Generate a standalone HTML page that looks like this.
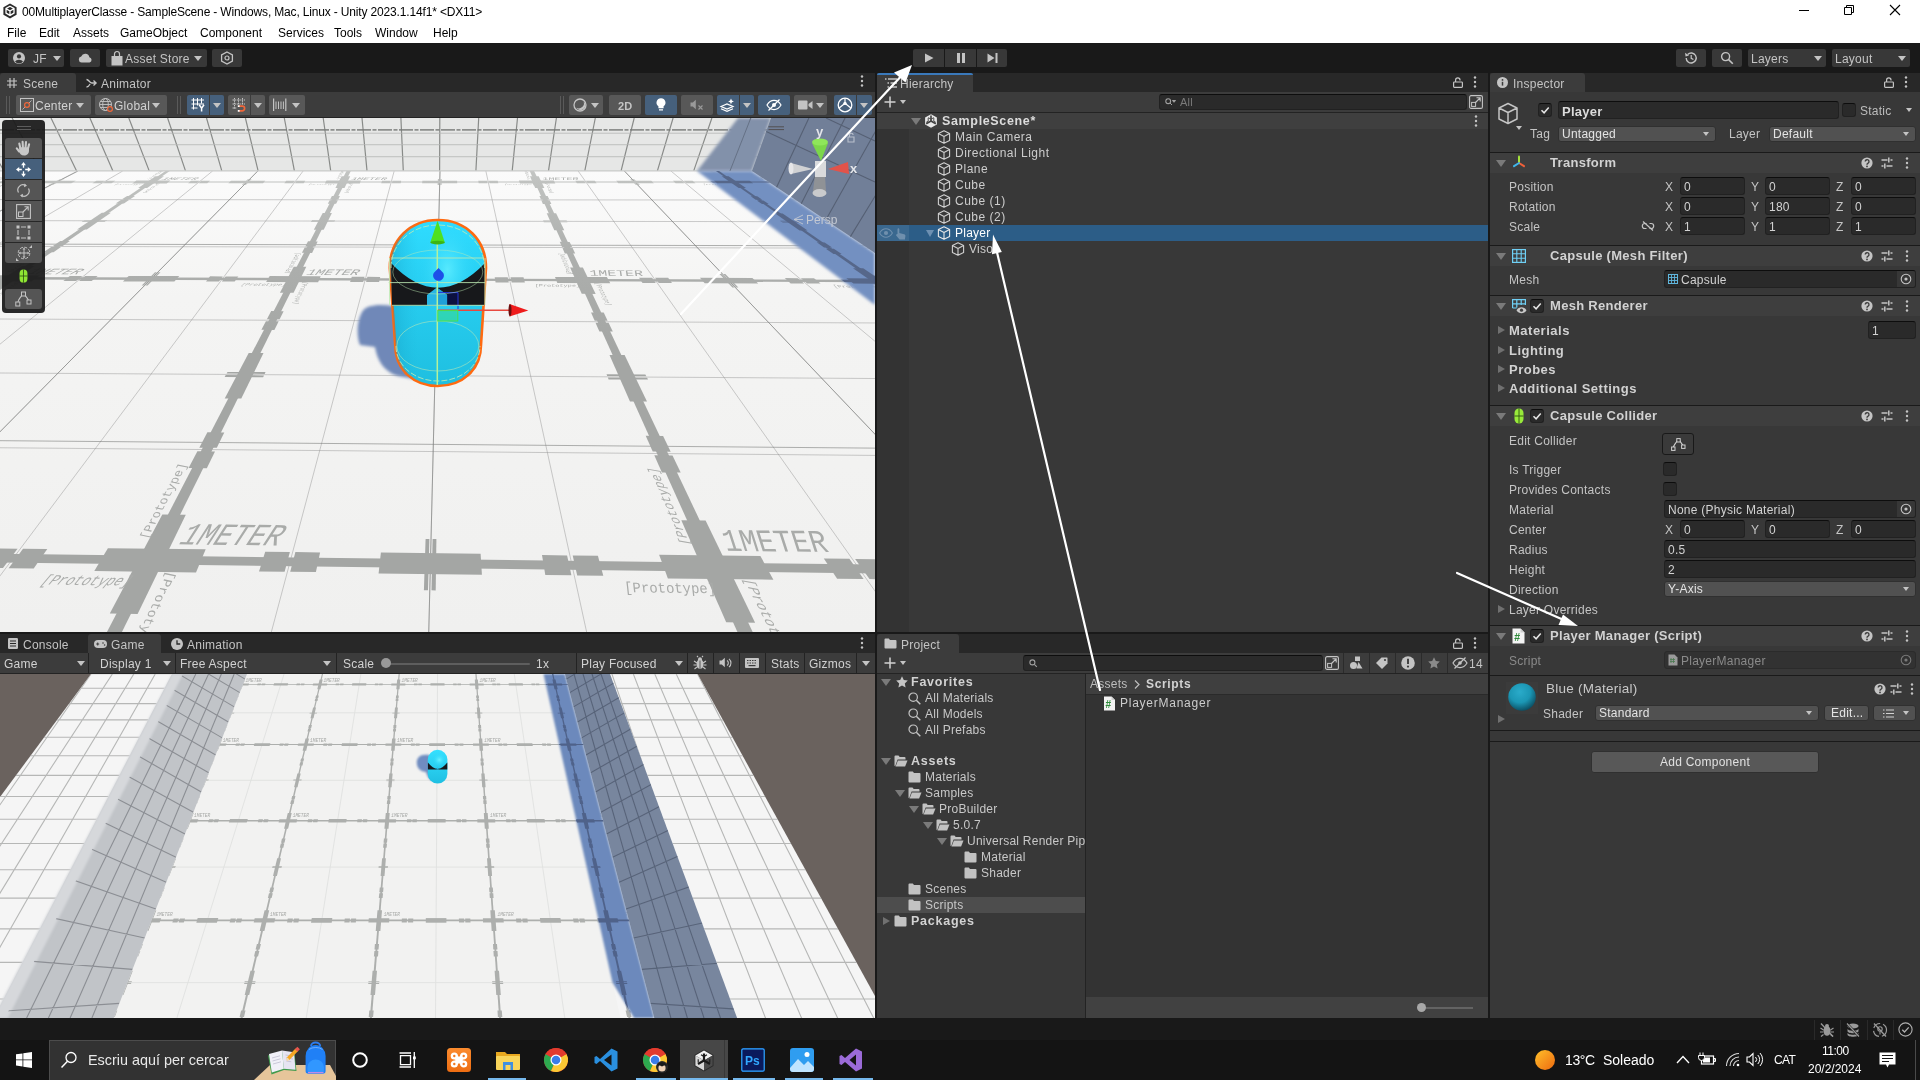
<!DOCTYPE html>
<html lang="en">
<head>
<meta charset="utf-8">
<title>00MultiplayerClasse - SampleScene - Unity</title>
<style>
*{box-sizing:border-box;margin:0;padding:0}
html,body{width:1920px;height:1080px;overflow:hidden;background:#191919}
body{position:relative;font-family:"Liberation Sans",sans-serif;font-size:12px;color:#c4c4c4;line-height:16px;letter-spacing:.25px;-webkit-font-smoothing:antialiased}
.abs{position:absolute}
svg{display:block;overflow:visible}
svg text{letter-spacing:0}
.t{position:absolute;white-space:nowrap}
body>div,body>svg{will-change:transform}
.b{font-weight:bold;color:#d2d2d2;letter-spacing:.3px}
/* title + menu */
#title{left:0;top:0;width:1920px;height:22px;background:#fff;color:#000;letter-spacing:-.16px}
#menu{left:0;top:22px;width:1920px;height:21px;background:#fff;color:#000;letter-spacing:0}
#menu .t{top:3px;font-size:12px}
/* main toolbar */
#tb{left:0;top:43px;width:1920px;height:30px;background:#191919}
.tbtn{position:absolute;top:6px;height:18px;background:#383838;border-radius:2px}
.tbtn .t{top:2px;color:#c4c4c4}
/* tabs */
.tabbar{position:absolute;height:19px;background:#282828}
.tab{position:absolute;top:0;height:19px;background:#3c3c3c;border-radius:3px 3px 0 0}
.tab .t,.tabbar>.t{top:3px;color:#c4c4c4}
.tool{position:absolute;background:#3c3c3c}
.btn{position:absolute;background:#585858;border-radius:2px}
.btn.on{background:#46607c}
.fld{position:absolute;background:#2a2a2a;border:1px solid #212121;border-top-color:#0d0d0d;border-radius:3px;height:18px}
.fld .t{left:3px;top:1px;color:#d2d2d2}
.dd{position:absolute;background:#515151;border:1px solid #303030;border-radius:3px;height:16px}
.dd .t{left:3px;top:-1px;color:#e4e4e4}
.arr{position:absolute;width:0;height:0;border-left:4px solid transparent;border-right:4px solid transparent;border-top:5px solid #c4c4c4}
.tri-d{position:absolute;width:0;height:0;border-left:5px solid transparent;border-right:5px solid transparent;border-top:7px solid #7a7a7a}
.tri-r{position:absolute;width:0;height:0;border-top:4.5px solid transparent;border-bottom:4.5px solid transparent;border-left:7.5px solid #707070}
.cb{position:absolute;width:14px;height:14px;background:#2a2a2a;border:1px solid #212121;border-top-color:#0d0d0d;border-radius:3px}
.panel{position:absolute;background:#383838}
.hdr{position:absolute;left:0;width:430px;height:21px;background:#3e3e3e;border-top:1px solid #1a1a1a}
.row{position:absolute;left:0;height:16px}
.sep{position:absolute;left:0;width:430px;height:1px;background:#1a1a1a}
</style>
</head>
<body>

<!-- ===== Title bar ===== -->
<div id="title" class="abs">
  <svg class="abs" style="left:2px;top:3px" width="16" height="16" viewBox="0 0 16 16"><polygon points="8,0.5 14.6,4.2 14.6,11.8 8,15.5 1.4,11.8 1.4,4.2" fill="#2b2b2b"/><path d="M8 3.2l4 2.3v4.6l-4 2.3-4-2.3V5.5zM8 8v4.4M8 8l4-2.4M8 8L4 5.6" stroke="#fff" stroke-width="1.3" fill="none"/></svg>
  <span class="t" style="left:22px;top:4px;font-size:12px">00MultiplayerClasse - SampleScene - Windows, Mac, Linux - Unity 2023.1.14f1* &lt;DX11&gt;</span>
  <svg class="abs" style="left:1798px;top:4px" width="12" height="12" viewBox="0 0 12 12"><path d="M1 6.5h10" stroke="#000" stroke-width="1"/></svg>
  <svg class="abs" style="left:1843px;top:4px" width="12" height="12" viewBox="0 0 12 12"><path d="M1.5 3.5h7v7h-7zM3.5 3.5v-2h7v7h-2" stroke="#000" stroke-width="1" fill="none"/></svg>
  <svg class="abs" style="left:1889px;top:4px" width="12" height="12" viewBox="0 0 12 12"><path d="M1 1l10 10M11 1L1 11" stroke="#000" stroke-width="1.1"/></svg>
</div>
<div id="menu" class="abs">
  <span class="t" style="left:7px">File</span><span class="t" style="left:39px">Edit</span><span class="t" style="left:73px">Assets</span><span class="t" style="left:120px">GameObject</span><span class="t" style="left:200px">Component</span><span class="t" style="left:278px">Services</span><span class="t" style="left:334px">Tools</span><span class="t" style="left:375px">Window</span><span class="t" style="left:433px">Help</span>
</div>
<!-- ===== Main toolbar ===== -->
<div id="tb" class="abs">
  <div class="tbtn" style="left:8px;width:56px">
    <svg class="abs" style="left:5px;top:3px" width="12" height="12" viewBox="0 0 12 12"><circle cx="6" cy="6" r="6" fill="#c4c4c4"/><circle cx="6" cy="4.4" r="2.1" fill="#383838"/><path d="M2 9.6a4.4 3.2 0 0 1 8 0a5 5 0 0 1-8 0z" fill="#383838"/></svg>
    <span class="t" style="left:25px">JF</span><div class="arr" style="left:45px;top:7px"></div>
  </div>
  <div class="tbtn" style="left:70px;width:30px"><svg class="abs" style="left:8px;top:4px" width="15" height="10" viewBox="0 0 15 10"><path d="M3.6 9.6a3.1 3.1 0 0 1-.4-6.1 4.3 4.3 0 0 1 8.2.7 2.8 2.8 0 0 1 .2 5.4z" fill="#c4c4c4"/></svg></div>
  <div class="tbtn" style="left:106px;width:101px">
    <svg class="abs" style="left:5px;top:2px" width="12" height="15" viewBox="0 0 12 15"><path d="M0.5 5h11v9.5h-11z" fill="#c4c4c4"/><path d="M3.5 5V3a2.5 2.5 0 0 1 5 0v2" stroke="#c4c4c4" stroke-width="1.2" fill="none"/></svg>
    <span class="t" style="left:19px">Asset Store</span><div class="arr" style="left:88px;top:7px"></div>
  </div>
  <div class="tbtn" style="left:212px;width:30px"><svg class="abs" style="left:8px;top:2px" width="14" height="14" viewBox="0 0 14 14"><polygon points="7,1 12.4,4 12.4,10 7,13 1.6,10 1.6,4" fill="none" stroke="#c4c4c4" stroke-width="1.3"/><circle cx="7" cy="7" r="2" fill="none" stroke="#c4c4c4" stroke-width="1.2"/></svg></div>
  <!-- play controls -->
  <div class="tbtn" style="left:913px;width:31px;border-radius:2px 0 0 2px"><svg class="abs" style="left:11px;top:4px" width="10" height="10" viewBox="0 0 10 10"><path d="M1 0.5l8.5 4.5-8.5 4.5z" fill="#c4c4c4"/></svg></div>
  <div class="tbtn" style="left:945px;width:31px;border-radius:0"><svg class="abs" style="left:11px;top:4px" width="10" height="10" viewBox="0 0 10 10"><path d="M1 0h3v10H1zM6 0h3v10H6z" fill="#c4c4c4"/></svg></div>
  <div class="tbtn" style="left:977px;width:30px;border-radius:0 2px 2px 0"><svg class="abs" style="left:10px;top:4px" width="11" height="10" viewBox="0 0 11 10"><path d="M0.5 0.5l7 4.5-7 4.5zM8.5 0h2v10h-2z" fill="#c4c4c4"/></svg></div>
  <!-- right -->
  <div class="tbtn" style="left:1676px;width:30px"><svg class="abs" style="left:8px;top:2px" width="14" height="14" viewBox="0 0 14 14"><path d="M2.2 7a5 5 0 1 0 1.5-3.6" fill="none" stroke="#c4c4c4" stroke-width="1.4"/><path d="M1 1.8l.6 3.6 3.4-.8z" fill="#c4c4c4"/><path d="M7.2 4v3.3l2.2 1.3" fill="none" stroke="#c4c4c4" stroke-width="1.2"/></svg></div>
  <div class="tbtn" style="left:1712px;width:30px"><svg class="abs" style="left:8px;top:2px" width="14" height="14" viewBox="0 0 14 14"><circle cx="5.6" cy="5.6" r="4" fill="none" stroke="#c4c4c4" stroke-width="1.4"/><path d="M8.6 8.6l4.2 4.2" stroke="#c4c4c4" stroke-width="1.6"/></svg></div>
  <div class="tbtn" style="left:1748px;width:78px"><span class="t" style="left:3px">Layers</span><div class="arr" style="left:66px;top:7px"></div></div>
  <div class="tbtn" style="left:1832px;width:78px"><span class="t" style="left:3px">Layout</span><div class="arr" style="left:66px;top:7px"></div></div>
</div>

<!-- ===== Scene panel ===== -->
<div class="tabbar" style="left:0;top:73px;width:875px">
  <div class="tab" style="left:0;width:76px">
    <svg class="abs" style="left:7px;top:5px" width="10" height="10" viewBox="0 0 10 10"><path d="M3 0v10M7 0v10M0 3h10M0 7h10" stroke="#c4c4c4" stroke-width="1.2"/></svg>
    <span class="t" style="left:23px">Scene</span>
  </div>
  <svg class="abs" style="left:86px;top:5px" width="11" height="10" viewBox="0 0 11 10"><path d="M0.5 1.5c2.5 0 3 3.5 5.5 3.5h3.5M0.5 9c2 0 2.8-1.5 3.6-3M7.5 2.6l2.6 2.4-2.6 2.4" stroke="#c4c4c4" stroke-width="1.3" fill="none"/></svg>
  <span class="t" style="left:101px">Animator</span>
  <svg class="abs" style="left:860px;top:2px" width="4" height="12" viewBox="0 0 4 12"><circle cx="2" cy="1.5" r="1.2" fill="#c4c4c4"/><circle cx="2" cy="6" r="1.2" fill="#c4c4c4"/><circle cx="2" cy="10.5" r="1.2" fill="#c4c4c4"/></svg>
</div>
<div class="tool" style="left:0;top:92px;width:875px;height:26px;border-bottom:1px solid #232323">
  <div class="abs" style="left:6px;top:4px;width:1px;height:18px;background:#5a5a5a"></div><div class="abs" style="left:9px;top:4px;width:1px;height:18px;background:#5a5a5a"></div>
  <div class="btn" style="left:16px;top:3px;width:75px;height:20px">
    <svg class="abs" style="left:4px;top:3px" width="14" height="14" viewBox="0 0 14 14"><rect x="0.5" y="0.5" width="13" height="13" fill="none" stroke="#c4c4c4"/><path d="M2.5 11.5l9-9" stroke="#c4c4c4" stroke-width="0.8"/><circle cx="7" cy="7" r="2.4" fill="#585858" stroke="#f0673a" stroke-width="1.2"/></svg>
    <span class="t" style="left:19px;top:3px;color:#d2d2d2">Center</span><div class="arr" style="left:60px;top:8px"></div>
  </div>
  <div class="btn" style="left:95px;top:3px;width:72px;height:20px">
    <svg class="abs" style="left:4px;top:3px" width="15" height="15" viewBox="0 0 15 15"><circle cx="6.5" cy="6.5" r="6" fill="none" stroke="#c4c4c4"/><ellipse cx="6.5" cy="6.5" rx="2.8" ry="6" fill="none" stroke="#c4c4c4" stroke-width="0.9"/><path d="M0.5 6.5h12M1.5 3.5h10M1.5 9.5h10" stroke="#c4c4c4" stroke-width="0.9"/><circle cx="11" cy="11" r="2.4" fill="#585858" stroke="#f0673a" stroke-width="1.2"/></svg>
    <span class="t" style="left:19px;top:3px;color:#d2d2d2">Global</span><div class="arr" style="left:57px;top:8px"></div>
  </div>
  <div class="abs" style="left:177px;top:4px;width:1px;height:18px;background:#5a5a5a"></div><div class="abs" style="left:180px;top:4px;width:1px;height:18px;background:#5a5a5a"></div>
  <div class="btn on" style="left:187px;top:3px;width:22px;height:20px;border-radius:2px 0 0 2px"><svg class="abs" style="left:4px;top:3px" width="15" height="14" viewBox="0 0 15 14"><path d="M2.500 0v11.500M6.500 0v7.500M10.500 0v5.500M0.500 2h12.500M0.500 6h12.500M0.500 10h6" stroke="#fff" stroke-width="1"/><path d="M8.200 6.800l2.400 3.300 2.400-3.300M10.600 10.100v3.400" stroke="#fff" stroke-width="1.500" fill="none"/></svg></div>
  <div class="btn on" style="left:210px;top:3px;width:14px;height:20px;border-radius:0 2px 2px 0"><div class="arr" style="left:3px;top:8px"></div></div>
  <div class="btn" style="left:228px;top:3px;width:22px;height:20px;border-radius:2px 0 0 2px"><svg class="abs" style="left:4px;top:3px" width="15" height="14" viewBox="0 0 15 14"><path d="M2.500 0v11.500M6.500 0v7M10.500 0v6M0.500 2h12.500M0.500 6h12.500M0.500 10h4.500" stroke="#c4c4c4" stroke-width="1" stroke-dasharray="1.500 0.800"/><path d="M7 8.200h3.300a2.300 2.300 0 0 1 0 4.600H7" stroke="#f0673a" stroke-width="1.700" fill="none"/><path d="M5.800 7.300h1.800v1.800H5.800zM5.800 11.900h1.800v1.800H5.800z" fill="#fff"/></svg></div>
  <div class="btn" style="left:251px;top:3px;width:14px;height:20px;border-radius:0 2px 2px 0"><div class="arr" style="left:3px;top:8px"></div></div>
  <div class="btn" style="left:269px;top:3px;width:36px;height:20px"><svg class="abs" style="left:4px;top:3px" width="14" height="14" viewBox="0 0 14 14"><path d="M0.600 0.500v12.500M12.800 0.500v12.500" stroke="#c4c4c4" stroke-width="1.200"/><path d="M3 3.500v7.500M5.500 3.500v7.500M8 3.500v7.500M10.400 3.500v7.500" stroke="#c4c4c4" stroke-width="1"/></svg><div class="arr" style="left:23px;top:8px"></div></div>
  <!-- right side -->
  <div class="abs" style="left:560px;top:4px;width:1px;height:18px;background:#5a5a5a"></div><div class="abs" style="left:563px;top:4px;width:1px;height:18px;background:#5a5a5a"></div>
  <div class="btn" style="left:569px;top:3px;width:34px;height:20px"><svg class="abs" style="left:4px;top:3px" width="14" height="14" viewBox="0 0 14 14"><circle cx="7" cy="7" r="6" fill="none" stroke="#c4c4c4" stroke-width="1.3"/><path d="M10.5 3.2a5 5 0 1 1-7.3 6.6a5.2 5.2 0 0 0 7.3-6.6z" fill="#c4c4c4"/></svg><div class="arr" style="left:22px;top:8px"></div></div>
  <div class="btn" style="left:609px;top:3px;width:32px;height:20px"><span class="t" style="left:9px;top:3px;font-size:11px;font-weight:bold;color:#c4c4c4">2D</span></div>
  <div class="btn on" style="left:645px;top:3px;width:32px;height:20px"><svg class="abs" style="left:11px;top:3px" width="10" height="14" viewBox="0 0 10 14"><path d="M5 0.3a4.4 4.4 0 0 1 2.6 8v2H2.4v-2A4.4 4.4 0 0 1 5 0.3zM3 11.2h4v1.2H3z" fill="#fff"/></svg></div>
  <div class="btn" style="left:681px;top:3px;width:32px;height:20px"><svg class="abs" style="left:9px;top:4px" width="14" height="12" viewBox="0 0 14 12"><path d="M0.5 3.5h2.3l3-2.8v9.6l-3-2.8H0.5z" fill="#9a9a9a"/><path d="M8.5 6.5l4 4M12.5 6.5l-4 4" stroke="#9a9a9a" stroke-width="1.1"/></svg></div>
  <div class="btn on" style="left:717px;top:3px;width:22px;height:20px;border-radius:2px 0 0 2px"><svg class="abs" style="left:3px;top:3px" width="16" height="14" viewBox="0 0 16 14"><path d="M1 8.5l6-2.5 6 2.5-6 2.5zM1 10.8l6 2.5 6-2.5" stroke="#fff" stroke-width="1.2" fill="none"/><path d="M11 0.5l.9 2 2 .9-2 .9-.9 2-.9-2-2-.9 2-.9z" fill="#fff"/></svg></div>
  <div class="btn on" style="left:740px;top:3px;width:14px;height:20px;border-radius:0 2px 2px 0"><div class="arr" style="left:3px;top:8px"></div></div>
  <div class="btn on" style="left:758px;top:3px;width:32px;height:20px"><svg class="abs" style="left:8px;top:4px" width="16" height="12" viewBox="0 0 16 12"><path d="M1 6c2-3.4 4.4-4.6 7-4.6S13 2.600 15 6c-2 3.400-4.400 4.600-7 4.600S3 9.400 1 6z" fill="none" stroke="#fff" stroke-width="1.2"/><circle cx="8" cy="6" r="2" fill="#fff"/><path d="M2.5 11.5l11-11" stroke="#fff" stroke-width="1.3"/></svg></div>
  <div class="btn" style="left:794px;top:3px;width:33px;height:20px"><svg class="abs" style="left:4px;top:5px" width="15" height="10" viewBox="0 0 15 10"><rect x="0" y="0.5" width="9.500" height="9" rx="1" fill="#c4c4c4"/><path d="M10.5 4l4-3v8l-4-3z" fill="#c4c4c4"/></svg><div class="arr" style="left:22px;top:8px"></div></div>
  <div class="btn on" style="left:834px;top:3px;width:22px;height:20px;border-radius:2px 0 0 2px"><svg class="abs" style="left:3px;top:2px" width="16" height="16" viewBox="0 0 16 16"><circle cx="8" cy="8" r="6.8" fill="none" stroke="#fff" stroke-width="1.3"/><path d="M8 1.200v5M8 6.200L2.200 11M8 6.200L13.800 11" stroke="#fff" stroke-width="1.2" fill="none"/><circle cx="8" cy="6.400" r="1.700" fill="#fff"/></svg></div>
  <div class="btn on" style="left:857px;top:3px;width:15px;height:20px;border-radius:0 2px 2px 0"><div class="arr" style="left:3px;top:8px"></div></div>
</div>
<svg class="abs" style="left:0;top:118px;overflow:hidden" width="875" height="514" viewBox="0 0 875 514">
<defs><linearGradient id="flg" x1="0" y1="0" x2="0" y2="1"><stop offset="0.1" stop-color="#fbfbfb"/><stop offset="0.35" stop-color="#f4f4f3"/><stop offset="1" stop-color="#f0f0ef"/></linearGradient><linearGradient id="capg" x1="0" y1="0" x2="0" y2="1"><stop offset="0" stop-color="#2fdcff"/><stop offset="0.45" stop-color="#27cdf0"/><stop offset="1" stop-color="#1fbfe0"/></linearGradient><linearGradient id="caps" x1="0" y1="0" x2="1" y2="0"><stop offset="0" stop-color="#0e88b0" stop-opacity="0.35"/><stop offset="0.3" stop-color="#1fb5d8" stop-opacity="0"/><stop offset="1" stop-color="#1fb5d8" stop-opacity="0"/></linearGradient><radialGradient id="caph" cx="0.6" cy="0.3" r="0.3"><stop offset="0" stop-color="#5cecff" stop-opacity="0.9"/><stop offset="1" stop-color="#2bd5fb" stop-opacity="0"/></radialGradient><linearGradient id="bandg" gradientUnits="userSpaceOnUse" x1="0" y1="52" x2="0" y2="230"><stop offset="0" stop-color="#c3c5c3"/><stop offset="0.45" stop-color="#aeb0ae"/><stop offset="1" stop-color="#a4a6a4"/></linearGradient><filter id="blur2"><feGaussianBlur stdDeviation="1.6"/></filter><filter id="blur1"><feGaussianBlur stdDeviation="0.7"/></filter><filter id="blur0"><feGaussianBlur stdDeviation="0.45"/></filter></defs>
<rect x="0" y="0" width="875" height="514" fill="url(#flg)"/>
<path d="M-144.1 53.1L-1805.7 586.6M-99.9 53L-1645.6 589.6M-55.7 53L-1483.7 592.5M33.3 53L-1154.4 598.6M77.9 53L-986.9 601.6M122.7 53L-817.4 604.7M212.7 52.9L-472.5 611.1M257.9 52.9L-297.1 614.3M303.2 52.9L-119.5 617.5M394.2 52.9L242 624.2M440 52.9L426 627.5M485.8 52.8L612.2 631M578 52.8L991.5 637.9M624.2 52.8L1184.7 641.5M670.7 52.8L1380.3 645M763.9 52.7L1778.8 652.4M810.7 52.7L1981.9 656.1M857.7 52.7L2187.5 659.9M952.1 52.7L2606.7 667.5M999.5 52.6L2820.4 671.5M1047.1 52.6L3036.9 675.4M1142.6 52.6L3478.5 683.5M1190.6 52.6L3703.7 687.7M1238.7 52.6L3932 691.8M-2580.1 572.4L4163.3 696.1M-1488.1 316.7L2628.8 352.8M-1192.5 247.5L2255.2 269.2M-975.4 196.6L1990.8 210M-677.7 126.9L1641.2 131.8M-571.2 101.9L1519.7 104.6M-483.2 81.3L1420.6 82.4" stroke="#8b8d8b" stroke-opacity="0.55" stroke-width="0.8" fill="none"/>
<path d="M-99.9 53L-1645.6 589.6M77.9 53L-986.9 601.6M257.9 52.9L-297.1 614.3M440 52.9L426 627.5M624.2 52.8L1184.7 641.5M810.7 52.7L1981.9 656.1M-1460.6 310.2L2593.3 344.8M-668.4 124.7L1630.5 129.4" stroke="#7d7f7d" stroke-opacity="0.6" stroke-width="1" fill="none"/>
<g fill="url(#bandg)"><polygon points="-1537.7,425.2 2687.4,478.3 2651,468.3 -1509.6,417.3"/><polygon points="-1505.7,432.6 -1414.5,433.7 -1345.7,412.7 -1433.8,411.6"/><polygon points="-1353.2,432.8 -1330.3,433.1 -1274.2,415.1 -1296.4,414.8"/><polygon points="-1325.2,433.2 -1302.2,433.5 -1246.9,415.4 -1269.2,415.2"/><polygon points="-1096.4,436.1 -1073.1,436.4 -1024.7,418.1 -1047.3,417.9"/><polygon points="-1067.9,436.5 -1044.5,436.8 -997,418.5 -1019.7,418.2"/><polygon points="-1247.6,434.7 -1154.9,435.9 -1101.1,416.7 -1190.8,415.6"/><polygon points="-1249,450 -1245.3,450 -1109.8,403 -1113.2,403"/><polygon points="-1242.1,450.1 -1238.4,450.1 -1103.4,403.1 -1106.8,403.1"/><polygon points="-991.4,439.2 -896.9,440.4 -846.4,418.7 -937.5,417.6"/><polygon points="-835.1,439.4 -811.3,439.7 -770.9,421.2 -793.9,420.9"/><polygon points="-806,439.8 -782.2,440.1 -742.7,421.5 -765.8,421.3"/><polygon points="-569,442.8 -544.8,443.1 -512.7,424.3 -536.1,424"/><polygon points="-539.4,443.2 -515.2,443.5 -484,424.7 -507.4,424.4"/><polygon points="-725,441.4 -629,442.6 -592.2,422.8 -685.1,421.7"/><polygon points="-712,457.1 -708.1,457.2 -614.1,408.8 -617.7,408.7"/><polygon points="-704.9,457.2 -701,457.3 -607.6,408.9 -611.1,408.8"/><polygon points="-458.4,446 -360.4,447.2 -329.6,424.9 -423.9,423.8"/><polygon points="-298,446.3 -273.4,446.6 -249.9,427.5 -273.7,427.2"/><polygon points="-267.9,446.6 -243.2,447 -220.7,427.9 -244.6,427.6"/><polygon points="-22.1,449.8 3,450.1 17.6,430.7 -6.7,430.4"/><polygon points="8.6,450.2 33.7,450.5 47.3,431.1 23,430.8"/><polygon points="-183.3,448.3 -83.7,449.6 -65.3,429.2 -161.5,428"/><polygon points="-154.7,464.5 -150.8,464.6 -101.4,414.7 -105,414.7"/><polygon points="-147.4,464.6 -143.4,464.7 -94.6,414.8 -98.3,414.8"/><polygon points="94.3,453.1 196,454.4 205.7,431.3 107.9,430.2"/><polygon points="259,453.4 284.6,453.7 289.9,434 265.2,433.7"/><polygon points="290.2,453.8 315.9,454.1 320.1,434.4 295.4,434.1"/><polygon points="545.3,457 571.4,457.3 567.1,437.4 542,437.1"/><polygon points="577.2,457.4 603.3,457.7 597.9,437.8 572.7,437.5"/><polygon points="378.6,455.5 481.9,456.8 480.6,435.8 380.9,434.6"/><polygon points="423.9,472.2 428,472.2 429.4,420.9 425.6,420.9"/><polygon points="431.5,472.3 435.7,472.4 436.4,421 432.6,420.9"/><polygon points="667.9,460.4 773.4,461.7 760.4,438 659.1,436.8"/><polygon points="837.1,460.7 863.6,461.1 849.4,440.8 823.8,440.5"/><polygon points="869.5,461.1 896.1,461.5 880.8,441.2 855.1,440.9"/><polygon points="1134.4,464.5 1161.4,464.9 1136.9,444.3 1110.8,444"/><polygon points="1167.5,464.9 1194.5,465.3 1168.8,444.7 1142.7,444.3"/><polygon points="961.8,462.9 1069.2,464.3 1046.6,442.6 943.2,441.4"/><polygon points="1025.1,480.2 1029.4,480.2 979.2,427.3 975.2,427.2"/><polygon points="1033.1,480.3 1037.4,480.3 986.4,427.4 982.5,427.3"/><polygon points="1263.5,468 1373.2,469.4 1335.7,444.9 1230.5,443.7"/><polygon points="1437.5,468.4 1465,468.7 1429.7,447.8 1403.2,447.5"/><polygon points="1471.1,468.8 1498.8,469.2 1462.3,448.2 1435.6,447.9"/><polygon points="1746.4,472.3 1774.5,472.7 1728.1,451.4 1701,451.1"/><polygon points="1780.7,472.7 1808.9,473.1 1761.2,451.8 1734.1,451.5"/><polygon points="1567.7,470.7 1679.2,472.1 1633.8,449.7 1526.5,448.4"/><polygon points="1650.4,488.5 1654.8,488.5 1548.9,433.9 1544.9,433.9"/><polygon points="1658.7,488.6 1663.1,488.7 1556.5,434 1552.4,433.9"/><polygon points="1882.6,475.9 1996.6,477.4 1932.6,452.1 1823.5,450.8"/><polygon points="2061.4,476.3 2090.1,476.7 2032.1,455.1 2004.5,454.8"/><polygon points="2096.4,476.8 2125.2,477.1 2065.9,455.5 2038.2,455.2"/><polygon points="2382.7,480.4 2411.9,480.8 2341.9,458.8 2313.8,458.5"/><polygon points="2418.4,480.9 2447.7,481.2 2376.4,459.3 2348.2,458.9"/><polygon points="2197.5,478.7 2313.5,480.2 2243.4,457.1 2131.9,455.7"/><polygon points="2301.1,497.1 2305.7,497.2 2139.9,440.8 2135.7,440.7"/><polygon points="2309.7,497.2 2314.4,497.3 2147.7,440.9 2143.5,440.8"/><polygon points="2526.3,484.2 2645,485.7 2552.6,459.6 2439.2,458.2"/><polygon points="-598.9,159.5 1548.4,166.4 1539.5,163.9 -591.1,157.2"/><polygon points="-575.4,161.4 -526.2,161.5 -507.1,155.7 -555.4,155.5"/><polygon points="-494.7,161.2 -482.3,161.2 -466.8,156.2 -478.9,156.2"/><polygon points="-479.6,161.2 -467.2,161.3 -451.9,156.3 -464.1,156.3"/><polygon points="-357.1,161.6 -344.7,161.7 -331.4,156.7 -343.6,156.6"/><polygon points="-341.9,161.7 -329.4,161.7 -316.4,156.7 -328.6,156.7"/><polygon points="-437.5,161.5 -387.9,161.7 -373.1,156.4 -421.8,156.2"/><polygon points="-426.9,165.5 -424.9,165.6 -387.6,152.6 -389.5,152.6"/><polygon points="-423.2,165.6 -421.3,165.6 -384.1,152.6 -386,152.6"/><polygon points="-300.1,162.3 -250,162.4 -236.2,156.5 -285.3,156.4"/><polygon points="-218.3,162.1 -205.7,162.1 -194.7,157.1 -207.1,157.1"/><polygon points="-202.9,162.1 -190.4,162.2 -179.6,157.1 -192,157.1"/><polygon points="-78.2,162.6 -65.5,162.6 -56.8,157.5 -69.3,157.5"/><polygon points="-62.7,162.6 -50,162.6 -41.6,157.6 -54,157.5"/><polygon points="-159.9,162.4 -109.4,162.6 -99.4,157.2 -149.1,157.1"/><polygon points="-145.3,166.5 -143.3,166.5 -117.8,153.4 -119.7,153.4"/><polygon points="-141.6,166.5 -139.6,166.5 -114.3,153.4 -116.2,153.4"/><polygon points="-19.6,163.2 31.4,163.4 39.7,157.4 -10.3,157.2"/><polygon points="63.3,163 76.1,163.1 82.4,157.9 69.8,157.9"/><polygon points="78.9,163.1 91.7,163.1 97.7,158 85.2,158"/><polygon points="206,163.5 218.9,163.5 222.8,158.4 210.1,158.3"/><polygon points="221.8,163.5 234.7,163.6 238.3,158.4 225.6,158.4"/><polygon points="122.9,163.4 174.4,163.5 179.3,158.1 128.7,157.9"/><polygon points="141.7,167.5 143.7,167.5 156.9,154.2 155,154.2"/><polygon points="145.5,167.5 147.5,167.5 160.5,154.2 158.6,154.2"/><polygon points="266.1,164.1 318.1,164.3 320.7,158.2 269.7,158.1"/><polygon points="350.1,163.9 363.2,164 364.6,158.8 351.8,158.8"/><polygon points="366.1,164 379.1,164 380.2,158.9 367.4,158.8"/><polygon points="495.6,164.4 508.8,164.5 507.7,159.3 494.7,159.2"/><polygon points="511.7,164.5 524.9,164.5 523.5,159.3 510.5,159.3"/><polygon points="411.1,164.3 463.5,164.5 463.2,159 411.7,158.8"/><polygon points="434.2,168.5 436.3,168.5 436.6,155 434.7,155"/><polygon points="438,168.5 440.1,168.5 440.3,155.1 438.3,155.1"/><polygon points="557.3,165.1 610.3,165.3 606.9,159.1 555,159"/><polygon points="642.5,164.9 655.8,164.9 652.1,159.7 639,159.7"/><polygon points="658.7,165 672,165 668.1,159.8 655,159.7"/><polygon points="790.7,165.4 804.2,165.4 797.9,160.2 784.7,160.1"/><polygon points="807.1,165.4 820.6,165.5 814,160.2 800.8,160.2"/><polygon points="704.7,165.3 758.2,165.4 752.4,159.9 699.9,159.7"/><polygon points="732.4,169.5 734.5,169.5 721.6,155.9 719.5,155.9"/><polygon points="736.3,169.5 738.4,169.5 725.3,155.9 723.3,155.9"/><polygon points="854.1,166.1 908.1,166.2 898.6,160 845.7,159.9"/><polygon points="940.4,165.9 954,165.9 945,160.6 931.7,160.6"/><polygon points="957,165.9 970.6,166 961.3,160.7 948,160.6"/><polygon points="1091.6,166.4 1105.3,166.4 1093.6,161.1 1080.2,161"/><polygon points="1108.3,166.4 1122,166.5 1110,161.1 1096.6,161.1"/><polygon points="1004,166.2 1058.5,166.4 1047.1,160.8 993.6,160.6"/><polygon points="1036.4,170.5 1038.5,170.5 1011.8,156.8 1009.8,156.7"/><polygon points="1040.3,170.5 1042.5,170.5 1015.6,156.8 1013.6,156.8"/><polygon points="1156.6,167.1 1211.7,167.2 1195.8,160.9 1141.9,160.8"/><polygon points="1244.2,166.9 1258,166.9 1243.6,161.5 1230,161.5"/><polygon points="1261.1,166.9 1274.9,167 1260.2,161.6 1246.6,161.5"/><polygon points="1398.3,167.4 1412.3,167.4 1395,162 1381.3,162"/><polygon points="1415.4,167.4 1429.3,167.5 1411.8,162.1 1398.1,162"/><polygon points="1309.2,167.2 1364.8,167.4 1347.4,161.7 1293,161.5"/><polygon points="1346.4,171.6 1348.6,171.6 1307.5,157.6 1305.5,157.6"/><polygon points="1350.4,171.6 1352.6,171.6 1311.4,157.6 1309.3,157.6"/><polygon points="1465.1,168.1 1521.3,168.2 1498.7,161.9 1443.7,161.7"/><polygon points="-263.5,64.5 1176.6,64.5 1172.7,63.5 -259.9,63.5"/><polygon points="-246,65.4 -212.3,65.4 -203.5,62.7 -236.7,62.7"/><polygon points="-191.1,65.2 -182.7,65.2 -175.5,62.9 -183.8,62.9"/><polygon points="-180.8,65.2 -172.4,65.2 -165.3,62.9 -173.7,62.9"/><polygon points="-97.2,65.2 -88.7,65.2 -82.6,62.9 -91,62.9"/><polygon points="-86.8,65.2 -78.3,65.2 -72.4,62.9 -80.7,62.9"/><polygon points="-151.9,65.2 -118.1,65.2 -111.3,62.8 -144.7,62.8"/><polygon points="-142.1,67 -140.8,67 -123.6,61.1 -124.9,61.1"/><polygon points="-139.6,67 -138.3,67 -121.2,61.1 -122.5,61.1"/><polygon points="-58.1,65.4 -24,65.4 -17.7,62.7 -51.3,62.7"/><polygon points="-2.7,65.2 5.8,65.2 10.9,62.9 2.4,62.9"/><polygon points="7.7,65.2 16.3,65.2 21.2,62.9 12.7,62.9"/><polygon points="92.4,65.2 101,65.2 104.9,62.8 96.4,62.8"/><polygon points="102.9,65.2 111.5,65.2 115.3,62.8 106.8,62.8"/><polygon points="37,65.2 71.3,65.2 75.8,62.8 42,62.8"/><polygon points="48.7,67 50.1,67 61.7,61.1 60.4,61.1"/><polygon points="51.2,67 52.6,67 64.1,61.1 62.8,61.1"/><polygon points="132.2,65.4 166.7,65.4 170.4,62.6 136.4,62.6"/><polygon points="188.1,65.2 196.7,65.2 199.6,62.8 191,62.8"/><polygon points="198.6,65.2 207.3,65.2 210,62.8 201.5,62.8"/><polygon points="284.3,65.2 293,65.2 294.8,62.8 286.2,62.8"/><polygon points="295,65.2 303.7,65.2 305.3,62.8 296.7,62.8"/><polygon points="228.3,65.2 263,65.2 265.3,62.8 231,62.8"/><polygon points="241.9,67.1 243.3,67.1 249.3,61 248,61"/><polygon points="244.5,67.1 245.8,67.1 251.7,61 250.4,61"/><polygon points="324.8,65.4 359.8,65.4 360.9,62.6 326.5,62.6"/><polygon points="381.2,65.2 390,65.2 390.6,62.8 382,62.8"/><polygon points="391.9,65.2 400.7,65.2 401.2,62.8 392.5,62.8"/><polygon points="478.7,65.2 487.5,65.2 487,62.8 478.3,62.8"/><polygon points="489.5,65.2 498.3,65.2 497.7,62.8 489,62.8"/><polygon points="422.1,65.2 457.2,65.2 457.1,62.8 422.4,62.8"/><polygon points="437.6,67.1 439,67.1 439.2,61 437.9,61"/><polygon points="440.2,67.1 441.6,67.1 441.7,61 440.3,61"/><polygon points="520,65.4 555.3,65.4 553.8,62.6 518.9,62.6"/><polygon points="576.9,65.2 585.7,65.2 584.1,62.8 575.3,62.8"/><polygon points="587.7,65.2 596.6,65.2 594.8,62.8 586,62.8"/><polygon points="675.6,65.2 684.6,65.2 681.7,62.8 672.9,62.8"/><polygon points="686.5,65.2 695.5,65.2 692.5,62.8 683.7,62.8"/><polygon points="618.3,65.3 653.9,65.3 651.3,62.8 616.2,62.8"/><polygon points="635.9,67.1 637.3,67.1 631.5,61 630.1,61"/><polygon points="638.5,67.1 639.9,67.1 634,61 632.6,61"/><polygon points="717.6,65.4 753.4,65.4 749.2,62.6 713.8,62.6"/><polygon points="775,65.2 784,65.2 780,62.8 771.1,62.8"/><polygon points="786,65.2 795,65.2 790.9,62.8 782,62.8"/><polygon points="875.1,65.2 884.1,65.2 878.9,62.8 870,62.8"/><polygon points="886.1,65.2 895.1,65.2 889.8,62.8 880.9,62.8"/><polygon points="817.1,65.3 853.1,65.3 848,62.8 812.4,62.8"/><polygon points="836.7,67.1 838.1,67.1 826.2,61 824.8,61"/><polygon points="839.3,67.1 840.7,67.1 828.7,61 827.4,61"/><polygon points="917.8,65.4 954.1,65.4 947,62.6 911.2,62.6"/><polygon points="975.7,65.2 984.8,65.2 978.4,62.8 969.4,62.8"/><polygon points="986.8,65.2 995.9,65.2 989.4,62.8 980.4,62.8"/><polygon points="1077.1,65.2 1086.2,65.2 1078.6,62.8 1069.5,62.8"/><polygon points="1088.2,65.2 1097.4,65.2 1089.6,62.8 1080.6,62.8"/><polygon points="1018.4,65.3 1054.9,65.3 1047.3,62.7 1011.2,62.7"/><polygon points="1040.1,67.1 1041.5,67.1 1023.4,61 1022,61"/><polygon points="1042.8,67.1 1044.2,67.1 1026,61 1024.6,61"/><polygon points="1120.5,65.4 1157.3,65.4 1147.3,62.6 1111.1,62.6"/><polygon points="-2119.7,627.7 -2103.7,628 -186,53.1 -190.2,53.1"/><polygon points="-2124.7,627.6 -2098.7,628.1 -1965.7,588.1 -1990.4,587.7"/><polygon points="-1962.5,579.4 -1938,579.8 -1820.8,544.6 -1844.2,544.2"/><polygon points="-1600.7,471.3 -1575.9,471.6 -1274.1,380.9 -1295.4,380.6"/><polygon points="-1148.5,337.5 -1131.9,337.6 -1079.7,322 -1095.9,321.8"/><polygon points="-1084.6,318.5 -1068.6,318.6 -1020.5,304.2 -1036,304"/><polygon points="-709.9,207.1 -697.6,207.2 -670,198.9 -682,198.8"/><polygon points="-676,197 -664.1,197.1 -638,189.3 -649.7,189.2"/><polygon points="-929.7,272.3 -914.4,272.4 -770.9,229.3 -784.7,229.3"/><polygon points="-871.8,251.9 -836.1,252.2 -830.5,250.5 -866.1,250.2"/><polygon points="-861.2,248.8 -825.8,249 -820.3,247.4 -855.6,247.2"/><polygon points="-591.2,171.6 -578.2,171.6 -494.7,146.5 -506.7,146.5"/><polygon points="-460.7,133.1 -451,133.1 -433.9,128 -443.4,127.9"/><polygon points="-439.7,126.8 -430.2,126.8 -413.9,121.9 -423.2,121.9"/><polygon points="-299.9,85.3 -291.9,85.3 -280.3,81.8 -288.2,81.8"/><polygon points="-285.7,81.1 -277.8,81.1 -266.7,77.7 -274.4,77.7"/><polygon points="-385.7,110.7 -376.2,110.7 -321.6,94.3 -330.4,94.3"/><polygon points="-366.8,103.1 -344.4,103.1 -342.3,102.5 -364.6,102.5"/><polygon points="-362.8,101.9 -340.5,102 -338.4,101.3 -360.6,101.3"/><polygon points="-248.9,69.9 -240.1,69.9 -201.7,58.4 -210,58.4"/><polygon points="-1439.1,641.3 -1422.4,641.6 -9.1,53 -13.4,53"/><polygon points="-1444.4,641.2 -1417.1,641.7 -1317.5,600.1 -1343.4,599.6"/><polygon points="-1322.4,591 -1296.8,591.5 -1209.4,554.9 -1233.8,554.5"/><polygon points="-1052.3,479.1 -1026.6,479.4 -803.3,386 -825.3,385.8"/><polygon points="-716.1,341.5 -698.9,341.7 -660.5,325.7 -677.1,325.5"/><polygon points="-668.8,322.1 -652.3,322.3 -617,307.5 -633,307.4"/><polygon points="-393.1,208.7 -380.6,208.7 -360.4,200.3 -372.6,200.2"/><polygon points="-368.2,198.4 -356,198.5 -337,190.5 -348.9,190.5"/><polygon points="-554.7,275 -539,275.1 -434,231.2 -448.1,231.1"/><polygon points="-515.2,254.2 -478.6,254.4 -474.5,252.7 -510.9,252.5"/><polygon points="-507.4,251 -471.1,251.3 -467.1,249.6 -503.2,249.3"/><polygon points="-306.4,172.6 -293.2,172.6 -232.4,147.2 -244.6,147.2"/><polygon points="-210.7,133.6 -200.9,133.7 -188.5,128.5 -198.1,128.5"/><polygon points="-195.4,127.3 -185.8,127.4 -173.9,122.4 -183.4,122.4"/><polygon points="-93.6,85.4 -85.5,85.5 -77.1,81.9 -85.1,81.9"/><polygon points="-83.2,81.2 -75.2,81.2 -67.1,77.8 -75,77.8"/><polygon points="-156.1,111.1 -146.5,111.1 -106.9,94.5 -115.9,94.5"/><polygon points="-144.2,103.4 -121.5,103.4 -120,102.8 -142.6,102.8"/><polygon points="-141.3,102.2 -118.7,102.2 -117.2,101.6 -139.7,101.6"/><polygon points="-56.7,70 -47.8,70 -19.9,58.4 -28.3,58.4"/><polygon points="-724.9,655.6 -707.3,655.9 169.8,52.9 165.5,53"/><polygon points="-730.4,655.5 -701.8,656 -639,612.7 -666.2,612.2"/><polygon points="-652.8,603.2 -626,603.7 -571.1,565.7 -596.5,565.3"/><polygon points="-482.6,487.1 -455.8,487.5 -316.9,391.3 -339.6,391.1"/><polygon points="-270.6,345.7 -252.9,345.9 -229.1,329.5 -246.2,329.3"/><polygon points="-241,325.8 -224.1,326 -202.2,310.9 -218.6,310.8"/><polygon points="-69.4,210.2 -56.6,210.3 -44.2,201.7 -56.7,201.7"/><polygon points="-54,199.8 -41.6,199.9 -29.9,191.8 -42,191.8"/><polygon points="-170.1,277.7 -153.9,277.8 -89.3,233.1 -103.7,233.1"/><polygon points="-149.7,256.5 -112.3,256.8 -109.8,255 -147.1,254.8"/><polygon points="-144.9,253.3 -107.7,253.5 -105.2,251.8 -142.3,251.6"/><polygon points="-16.1,173.7 -2.6,173.7 34.5,148 22.1,147.9"/><polygon points="43.4,134.2 53.5,134.3 61,129 51.2,129"/><polygon points="52.9,127.9 62.7,127.9 69.9,122.9 60.3,122.9"/><polygon points="115.6,85.6 123.9,85.6 129,82.1 120.9,82.1"/><polygon points="122,81.3 130.1,81.3 135,77.9 127.1,77.9"/><polygon points="77,111.4 86.8,111.4 110.9,94.7 101.8,94.7"/><polygon points="81.7,103.7 104.7,103.7 105.6,103.1 82.7,103.1"/><polygon points="83.5,102.5 106.4,102.5 107.3,101.9 84.5,101.9"/><polygon points="138.1,70 147.1,70 164,58.3 155.5,58.3"/><polygon points="25.6,670.6 44,671 350.8,52.9 346.5,52.9"/><polygon points="19.8,670.5 49.9,671.1 72,625.8 43.6,625.3"/><polygon points="48.5,615.9 76.6,616.4 95.9,577 69.2,576.5"/><polygon points="109.8,495.5 137.6,495.9 185.8,396.8 162.3,396.6"/><polygon points="188.6,350 206.8,350.2 215,333.4 197.4,333.2"/><polygon points="199.3,329.7 216.8,329.8 224.3,314.4 207.4,314.2"/><polygon points="261.4,211.8 274.4,211.9 278.7,203.2 265.9,203.2"/><polygon points="266.9,201.3 279.6,201.3 283.6,193.2 271.2,193.1"/><polygon points="224.7,280.5 241.3,280.6 263.5,235.1 248.7,235"/><polygon points="224.7,258.9 263.1,259.2 264,257.4 225.7,257.1"/><polygon points="226.6,255.6 264.7,255.9 265.5,254.1 227.5,253.9"/><polygon points="279.9,174.7 293.6,174.8 306.3,148.7 293.7,148.7"/><polygon points="301.9,134.8 312.1,134.9 314.7,129.6 304.7,129.5"/><polygon points="305.3,128.4 315.3,128.4 317.7,123.4 308,123.3"/><polygon points="327.8,85.7 336.1,85.8 337.9,82.2 329.7,82.2"/><polygon points="330.1,81.4 338.3,81.4 339.9,78 331.9,78"/><polygon points="313.8,111.8 323.7,111.8 331.9,95 322.7,95"/><polygon points="311,104 334.4,104 334.7,103.4 311.3,103.3"/><polygon points="311.7,102.8 334.9,102.8 335.2,102.2 312,102.1"/><polygon points="335.4,70.1 344.5,70.1 350.2,58.3 341.6,58.3"/><polygon points="815.1,686.4 834.6,686.8 534,52.8 529.6,52.8"/><polygon points="809,686.3 840.7,686.9 817.9,639.6 788.1,639.1"/><polygon points="783.8,629.3 813.2,629.8 793.4,588.7 765.6,588.3"/><polygon points="726.2,504.3 755.1,504.7 705.6,402.5 681.3,402.2"/><polygon points="661.9,354.5 680.7,354.6 672.5,337.4 654.3,337.3"/><polygon points="652.7,333.6 670.7,333.8 663.1,318 645.7,317.8"/><polygon points="599.4,213.5 612.8,213.5 608.6,204.7 595.5,204.7"/><polygon points="594.7,202.8 607.6,202.8 603.7,194.5 591,194.5"/><polygon points="630,283.4 647,283.5 624.6,237.1 609.5,237.1"/><polygon points="608.6,261.4 648,261.6 647.1,259.8 607.9,259.6"/><polygon points="607.2,258 646.3,258.3 645.4,256.5 606.5,256.2"/><polygon points="581.7,175.8 595.7,175.9 582.9,149.5 570.1,149.5"/><polygon points="564.8,135.4 575.2,135.5 572.6,130.1 562.5,130.1"/><polygon points="562,128.9 572.1,129 569.6,123.9 559.7,123.8"/><polygon points="542.9,85.9 551.4,85.9 549.6,82.3 541.3,82.3"/><polygon points="541,81.5 549.3,81.5 547.6,78.1 539.4,78.1"/><polygon points="554.3,112.2 564.3,112.2 556.1,95.2 546.7,95.2"/><polygon points="543.8,104.3 567.5,104.3 567.2,103.7 543.5,103.6"/><polygon points="543.3,103.1 566.9,103.1 566.6,102.5 543,102.4"/><polygon points="535.2,70.1 544.4,70.1 538.7,58.2 530,58.2"/><polygon points="1646.9,703 1667.4,703.4 719.5,52.8 715,52.8"/><polygon points="1640.4,702.9 1673.8,703.5 1601.4,654.1 1570.1,653.5"/><polygon points="1555.5,643.3 1586.5,643.9 1523.7,601.1 1494.5,600.6"/><polygon points="1368.1,513.4 1398.2,513.8 1243.4,408.4 1218.3,408.1"/><polygon points="1150.2,359 1169.6,359.2 1143.8,341.6 1125.1,341.4"/><polygon points="1119.8,337.7 1138.3,337.9 1114.7,321.7 1096.8,321.5"/><polygon points="945.1,215.1 958.7,215.2 945.6,206.2 932.3,206.2"/><polygon points="929.6,204.3 942.8,204.3 930.5,195.9 917.6,195.8"/><polygon points="1046.1,286.3 1063.6,286.5 994.3,239.2 978.8,239.1"/><polygon points="1002.3,263.9 1042.7,264.1 1039.9,262.3 999.7,262"/><polygon points="997.5,260.5 1037.6,260.7 1034.9,258.9 995,258.7"/><polygon points="889.5,176.9 903.8,177 864.6,150.3 851.6,150.2"/><polygon points="832.3,136.1 842.9,136.1 835,130.7 824.6,130.7"/><polygon points="823,129.5 833.3,129.5 825.7,124.4 815.6,124.3"/><polygon points="761,86.1 769.6,86.1 764.3,82.4 755.9,82.4"/><polygon points="754.8,81.7 763.2,81.7 758.1,78.2 749.8,78.2"/><polygon points="798.5,112.5 808.7,112.6 783.6,95.4 774.1,95.4"/><polygon points="780.1,104.6 804.3,104.7 803.3,104 779.2,104"/><polygon points="778.4,103.4 802.4,103.4 801.4,102.7 777.5,102.7"/><polygon points="737.7,70.1 747,70.1 729.5,58.2 720.7,58.2"/><polygon points="2524.3,720.6 2546,721 907.1,52.7 902.6,52.7"/><polygon points="2517.5,720.4 2552.8,721.1 2425.4,669.3 2392.4,668.7"/><polygon points="2366.6,658.1 2399.2,658.7 2289.2,614 2258.6,613.5"/><polygon points="2037.1,522.9 2068.5,523.3 1800.3,414.4 1774.2,414.2"/><polygon points="1654.2,363.8 1674.2,364 1629.8,345.9 1610.5,345.7"/><polygon points="1601.2,341.9 1620.3,342 1579.6,325.5 1561.2,325.3"/><polygon points="1298.5,216.8 1312.5,216.9 1290.1,207.8 1276.5,207.8"/><polygon points="1271.8,205.8 1285.3,205.9 1264.3,197.3 1251.1,197.3"/><polygon points="1473.6,289.4 1491.6,289.5 1373,241.3 1357.2,241.2"/><polygon points="1406.1,266.5 1447.6,266.7 1442.9,264.8 1401.6,264.6"/><polygon points="1397.8,263 1438.9,263.2 1434.3,261.4 1393.4,261.1"/><polygon points="1203.6,178.1 1218.2,178.1 1151.5,151.1 1138.2,151"/><polygon points="1104.5,136.7 1115.2,136.7 1101.8,131.2 1091.3,131.2"/><polygon points="1088.4,130 1098.9,130.1 1086.1,124.9 1075.8,124.8"/><polygon points="982.3,86.2 991,86.2 982.1,82.6 973.5,82.6"/><polygon points="971.6,81.8 980.1,81.8 971.5,78.3 963.1,78.3"/><polygon points="1046.7,112.9 1057.1,113 1014.5,95.7 1004.9,95.6"/><polygon points="1020.1,104.9 1044.6,105 1043,104.3 1018.5,104.3"/><polygon points="1017.2,103.7 1041.5,103.7 1039.9,103 1015.6,103"/><polygon points="942.8,70.2 952.3,70.2 922.7,58.2 913.8,58.2"/><polygon points="3451.3,739.1 3474.2,739.6 1097.1,52.6 1092.5,52.6"/><polygon points="3444.1,738.9 3481.4,739.7 3293,685.4 3258.3,684.7"/><polygon points="3220,673.6 3254.3,674.2 3092.3,627.5 3060.2,627"/><polygon points="2734.9,532.8 2767.8,533.3 2377.1,420.7 2350.1,420.4"/><polygon points="2174.5,368.7 2195.2,368.8 2131,350.3 2111.1,350.1"/><polygon points="2097.6,346.2 2117.3,346.4 2058.5,329.4 2039.5,329.3"/><polygon points="1660.1,218.6 1674.4,218.7 1642.3,209.4 1628.4,209.4"/><polygon points="1621.6,207.4 1635.4,207.4 1605.3,198.7 1591.8,198.7"/><polygon points="1912.9,292.5 1931.4,292.6 1761,243.5 1744.7,243.4"/><polygon points="1820.5,269.1 1863.1,269.4 1856.3,267.5 1814,267.2"/><polygon points="1808.5,265.6 1850.6,265.8 1844,263.9 1802.1,263.7"/><polygon points="1524,179.2 1538.9,179.3 1443.8,151.9 1430.2,151.8"/><polygon points="1381.5,137.3 1392.4,137.4 1373.2,131.8 1362.5,131.8"/><polygon points="1358.4,130.6 1369.1,130.6 1350.8,125.4 1340.4,125.4"/><polygon points="1206.8,86.4 1215.6,86.4 1202.9,82.7 1194.2,82.7"/><polygon points="1191.4,81.9 1200.1,81.9 1187.9,78.4 1179.3,78.4"/><polygon points="1298.9,113.3 1309.4,113.3 1248.9,95.9 1239.1,95.9"/><polygon points="1263.9,105.3 1288.8,105.3 1286.4,104.6 1261.6,104.6"/><polygon points="1259.6,104 1284.3,104 1282,103.3 1257.3,103.3"/><polygon points="1150.7,70.2 1160.3,70.2 1118.3,58.1 1109.3,58.1"/></g>
<text transform="matrix(25.963 0.309 -69.094 29.050 -863.3 413.9)" font-family="Liberation Mono, monospace" font-size="1" fill="#a9aba9" font-style="italic">1METER</text>
<text transform="matrix(12.416 0.165 -34.072 13.247 -1066.9 451.7)" font-family="Liberation Mono, monospace" font-size="1" fill="#a9aba9" font-style="italic">[Prototype]</text>
<text transform="matrix(26.394 -10.827 11.949 0.140 -883.1 408.7)" font-family="Liberation Mono, monospace" font-size="1" fill="#a9aba9" font-style="italic">[Prototype]</text>
<text transform="matrix(-28.699 12.086 -12.613 -0.161 -921.9 439.5)" font-family="Liberation Mono, monospace" font-size="1" fill="#a9aba9" font-style="italic">[Prototype]</text>
<text transform="matrix(14.035 0.043 -19.457 8.181 -248.0 155.2)" font-family="Liberation Mono, monospace" font-size="1" fill="#a9aba9" font-style="italic">1METER</text>
<text transform="matrix(6.533 0.022 -9.018 3.506 -331.3 165.7)" font-family="Liberation Mono, monospace" font-size="1" fill="#a9aba9" font-style="italic">[Prototype]</text>
<text transform="matrix(7.502 -3.077 6.491 0.019 -261.8 153.8)" font-family="Liberation Mono, monospace" font-size="1" fill="#a9aba9" font-style="italic">[Prototype]</text>
<text transform="matrix(-7.741 3.260 -6.682 -0.022 -263.6 162.3)" font-family="Liberation Mono, monospace" font-size="1" fill="#a9aba9" font-style="italic">[Prototype]</text>
<text transform="matrix(9.615 -0.001 -9.012 3.789 -26.4 62.1)" font-family="Liberation Mono, monospace" font-size="1" fill="#a9aba9" font-style="italic">1METER</text>
<text transform="matrix(4.431 0.000 -4.087 1.589 -77.3 66.9)" font-family="Liberation Mono, monospace" font-size="1" fill="#a9aba9" font-style="italic">[Prototype]</text>
<text transform="matrix(3.486 -1.430 4.455 -0.000 -36.6 61.5)" font-family="Liberation Mono, monospace" font-size="1" fill="#a9aba9" font-style="italic">[Prototype]</text>
<text transform="matrix(-3.531 1.487 -4.544 -0.000 -33.3 65.3)" font-family="Liberation Mono, monospace" font-size="1" fill="#a9aba9" font-style="italic">[Prototype]</text>
<text transform="matrix(26.874 0.319 -42.778 29.877 -351.4 420.0)" font-family="Liberation Mono, monospace" font-size="1" fill="#a9aba9" font-style="italic">1METER</text>
<text transform="matrix(12.882 0.171 -22.229 13.656 -523.7 458.9)" font-family="Liberation Mono, monospace" font-size="1" fill="#a9aba9" font-style="italic">[Prototype]</text>
<text transform="matrix(16.607 -11.132 12.363 0.145 -376.8 414.6)" font-family="Liberation Mono, monospace" font-size="1" fill="#a9aba9" font-style="italic">[Prototype]</text>
<text transform="matrix(-17.778 12.450 -13.077 -0.167 -386.9 446.3)" font-family="Liberation Mono, monospace" font-size="1" fill="#a9aba9" font-style="italic">[Prototype]</text>
<text transform="matrix(14.293 0.043 -11.853 8.278 26.5 156.1)" font-family="Liberation Mono, monospace" font-size="1" fill="#a9aba9" font-style="italic">1METER</text>
<text transform="matrix(6.657 0.023 -5.779 3.551 -48.0 166.7)" font-family="Liberation Mono, monospace" font-size="1" fill="#a9aba9" font-style="italic">[Prototype]</text>
<text transform="matrix(4.645 -3.114 6.609 0.020 11.1 154.6)" font-family="Liberation Mono, monospace" font-size="1" fill="#a9aba9" font-style="italic">[Prototype]</text>
<text transform="matrix(-4.713 3.300 -6.808 -0.022 17.4 163.2)" font-family="Liberation Mono, monospace" font-size="1" fill="#a9aba9" font-style="italic">[Prototype]</text>
<text transform="matrix(9.734 -0.001 -5.458 3.812 161.0 62.1)" font-family="Liberation Mono, monospace" font-size="1" fill="#a9aba9" font-style="italic">1METER</text>
<text transform="matrix(4.488 0.000 -2.603 1.599 114.3 67.0)" font-family="Liberation Mono, monospace" font-size="1" fill="#a9aba9" font-style="italic">[Prototype]</text>
<text transform="matrix(2.146 -1.439 4.510 -0.000 150.1 61.4)" font-family="Liberation Mono, monospace" font-size="1" fill="#a9aba9" font-style="italic">[Prototype]</text>
<text transform="matrix(-2.137 1.496 -4.601 -0.000 157.2 65.3)" font-family="Liberation Mono, monospace" font-size="1" fill="#a9aba9" font-style="italic">[Prototype]</text>
<text transform="matrix(27.833 0.331 -14.549 30.745 178.5 426.3)" font-family="Liberation Mono, monospace" font-size="1" fill="#a9aba9" font-style="italic">1METER</text>
<text transform="matrix(13.374 0.177 -9.462 14.087 40.0 466.4)" font-family="Liberation Mono, monospace" font-size="1" fill="#a9aba9" font-style="italic">[Prototype]</text>
<text transform="matrix(6.115 -11.452 12.800 0.150 147.3 420.8)" font-family="Liberation Mono, monospace" font-size="1" fill="#a9aba9" font-style="italic">[Prototype]</text>
<text transform="matrix(-6.023 12.833 -13.566 -0.173 167.9 453.4)" font-family="Liberation Mono, monospace" font-size="1" fill="#a9aba9" font-style="italic">[Prototype]</text>
<text transform="matrix(14.557 0.044 -3.965 8.379 306.0 156.9)" font-family="Liberation Mono, monospace" font-size="1" fill="#a9aba9" font-style="italic">1METER</text>
<text transform="matrix(6.785 0.023 -2.415 3.596 240.7 167.6)" font-family="Liberation Mono, monospace" font-size="1" fill="#a9aba9" font-style="italic">[Prototype]</text>
<text transform="matrix(1.683 -3.151 6.731 0.020 289.0 155.5)" font-family="Liberation Mono, monospace" font-size="1" fill="#a9aba9" font-style="italic">[Prototype]</text>
<text transform="matrix(-1.569 3.342 -6.937 -0.023 303.7 164.1)" font-family="Liberation Mono, monospace" font-size="1" fill="#a9aba9" font-style="italic">[Prototype]</text>
<text transform="matrix(9.856 -0.001 -1.815 3.836 350.9 62.1)" font-family="Liberation Mono, monospace" font-size="1" fill="#a9aba9" font-style="italic">1METER</text>
<text transform="matrix(4.545 0.000 -1.081 1.609 308.3 67.0)" font-family="Liberation Mono, monospace" font-size="1" fill="#a9aba9" font-style="italic">[Prototype]</text>
<text transform="matrix(0.773 -1.448 4.566 -0.000 339.2 61.4)" font-family="Liberation Mono, monospace" font-size="1" fill="#a9aba9" font-style="italic">[Prototype]</text>
<text transform="matrix(-0.707 1.506 -4.660 -0.000 350.1 65.3)" font-family="Liberation Mono, monospace" font-size="1" fill="#a9aba9" font-style="italic">[Prototype]</text>
<text transform="matrix(28.845 0.343 15.749 31.657 727.5 432.8)" font-family="Liberation Mono, monospace" font-size="1" fill="#a9aba9" font-style="italic">1METER</text>
<text transform="matrix(13.895 0.184 4.312 14.541 625.5 474.1)" font-family="Liberation Mono, monospace" font-size="1" fill="#a9aba9" font-style="italic">[Prototype]</text>
<text transform="matrix(-5.139 -11.787 13.261 0.155 690.0 427.1)" font-family="Liberation Mono, monospace" font-size="1" fill="#a9aba9" font-style="italic">[Prototype]</text>
<text transform="matrix(6.637 13.236 -14.084 -0.180 743.8 460.8)" font-family="Liberation Mono, monospace" font-size="1" fill="#a9aba9" font-style="italic">[Prototype]</text>
<text transform="matrix(14.829 0.045 4.219 8.481 590.7 157.8)" font-family="Liberation Mono, monospace" font-size="1" fill="#a9aba9" font-style="italic">1METER</text>
<text transform="matrix(6.916 0.023 1.080 3.642 534.9 168.6)" font-family="Liberation Mono, monospace" font-size="1" fill="#a9aba9" font-style="italic">[Prototype]</text>
<text transform="matrix(-1.391 -3.190 6.856 0.020 572.0 156.3)" font-family="Liberation Mono, monospace" font-size="1" fill="#a9aba9" font-style="italic">[Prototype]</text>
<text transform="matrix(1.697 3.384 -7.070 -0.023 595.5 165.1)" font-family="Liberation Mono, monospace" font-size="1" fill="#a9aba9" font-style="italic">[Prototype]</text>
<text transform="matrix(9.980 -0.001 1.920 3.859 543.1 62.0)" font-family="Liberation Mono, monospace" font-size="1" fill="#a9aba9" font-style="italic">1METER</text>
<text transform="matrix(4.604 0.000 0.480 1.620 504.7 67.0)" font-family="Liberation Mono, monospace" font-size="1" fill="#a9aba9" font-style="italic">[Prototype]</text>
<text transform="matrix(-0.635 -1.457 4.623 -0.000 530.6 61.4)" font-family="Liberation Mono, monospace" font-size="1" fill="#a9aba9" font-style="italic">[Prototype]</text>
<text transform="matrix(0.760 1.516 -4.719 -0.000 545.5 65.3)" font-family="Liberation Mono, monospace" font-size="1" fill="#a9aba9" font-style="italic">[Prototype]</text>
<text transform="matrix(29.913 0.356 48.290 32.616 1296.7 439.6)" font-family="Liberation Mono, monospace" font-size="1" fill="#a9aba9" font-style="italic">1METER</text>
<text transform="matrix(14.447 0.192 19.182 15.020 1234.0 482.2)" font-family="Liberation Mono, monospace" font-size="1" fill="#a9aba9" font-style="italic">[Prototype]</text>
<text transform="matrix(-17.217 -12.139 13.746 0.161 1252.5 433.7)" font-family="Liberation Mono, monospace" font-size="1" fill="#a9aba9" font-style="italic">[Prototype]</text>
<text transform="matrix(20.281 13.661 -14.631 -0.187 1341.8 468.4)" font-family="Liberation Mono, monospace" font-size="1" fill="#a9aba9" font-style="italic">[Prototype]</text>
<text transform="matrix(15.109 0.046 12.712 8.586 880.8 158.7)" font-family="Liberation Mono, monospace" font-size="1" fill="#a9aba9" font-style="italic">1METER</text>
<text transform="matrix(7.051 0.024 4.712 3.690 834.8 169.6)" font-family="Liberation Mono, monospace" font-size="1" fill="#a9aba9" font-style="italic">[Prototype]</text>
<text transform="matrix(-4.579 -3.229 6.985 0.021 860.3 157.2)" font-family="Liberation Mono, monospace" font-size="1" fill="#a9aba9" font-style="italic">[Prototype]</text>
<text transform="matrix(5.089 3.428 -7.206 -0.024 892.9 166.0)" font-family="Liberation Mono, monospace" font-size="1" fill="#a9aba9" font-style="italic">[Prototype]</text>
<text transform="matrix(10.106 -0.001 5.750 3.883 737.7 62.0)" font-family="Liberation Mono, monospace" font-size="1" fill="#a9aba9" font-style="italic">1METER</text>
<text transform="matrix(4.663 0.000 2.082 1.630 703.8 67.0)" font-family="Liberation Mono, monospace" font-size="1" fill="#a9aba9" font-style="italic">[Prototype]</text>
<text transform="matrix(-2.079 -1.466 4.681 -0.000 724.4 61.4)" font-family="Liberation Mono, monospace" font-size="1" fill="#a9aba9" font-style="italic">[Prototype]</text>
<text transform="matrix(2.264 1.525 -4.780 -0.000 743.4 65.3)" font-family="Liberation Mono, monospace" font-size="1" fill="#a9aba9" font-style="italic">[Prototype]</text>
<text transform="matrix(31.041 0.369 83.263 33.624 1887.1 446.6)" font-family="Liberation Mono, monospace" font-size="1" fill="#a9aba9" font-style="italic">1METER</text>
<text transform="matrix(15.033 0.199 35.247 15.527 1866.9 490.6)" font-family="Liberation Mono, monospace" font-size="1" fill="#a9aba9" font-style="italic">[Prototype]</text>
<text transform="matrix(-30.188 -12.510 14.259 0.167 1835.8 440.6)" font-family="Liberation Mono, monospace" font-size="1" fill="#a9aba9" font-style="italic">[Prototype]</text>
<text transform="matrix(34.996 14.110 -15.212 -0.194 1963.3 476.4)" font-family="Liberation Mono, monospace" font-size="1" fill="#a9aba9" font-style="italic">[Prototype]</text>
<text transform="matrix(15.397 0.047 21.527 8.693 1176.3 159.6)" font-family="Liberation Mono, monospace" font-size="1" fill="#a9aba9" font-style="italic">1METER</text>
<text transform="matrix(7.190 0.024 8.487 3.738 1140.6 170.7)" font-family="Liberation Mono, monospace" font-size="1" fill="#a9aba9" font-style="italic">[Prototype]</text>
<text transform="matrix(-7.888 -3.269 7.117 0.021 1154.0 158.1)" font-family="Liberation Mono, monospace" font-size="1" fill="#a9aba9" font-style="italic">[Prototype]</text>
<text transform="matrix(8.612 3.472 -7.347 -0.024 1196.0 167.0)" font-family="Liberation Mono, monospace" font-size="1" fill="#a9aba9" font-style="italic">[Prototype]</text>
<text transform="matrix(10.235 -0.001 9.677 3.908 934.8 62.0)" font-family="Liberation Mono, monospace" font-size="1" fill="#a9aba9" font-style="italic">1METER</text>
<text transform="matrix(4.724 0.000 3.726 1.641 905.4 67.0)" font-family="Liberation Mono, monospace" font-size="1" fill="#a9aba9" font-style="italic">[Prototype]</text>
<text transform="matrix(-3.559 -1.475 4.741 -0.000 920.7 61.4)" font-family="Liberation Mono, monospace" font-size="1" fill="#a9aba9" font-style="italic">[Prototype]</text>
<text transform="matrix(3.808 1.535 -4.842 -0.000 943.8 65.3)" font-family="Liberation Mono, monospace" font-size="1" fill="#a9aba9" font-style="italic">[Prototype]</text>
<rect x="0" y="0" width="875" height="52.9" fill="#e6e7e6"/>
<path d="M-32.3 52.9L-65.6 0M4 52.9L-26.8 0M40.3 52.9L12.1 0M76.6 52.9L51 0M112.9 52.9L89.9 0M149.2 52.9L128.8 0M185.5 52.9L167.6 0M221.8 52.9L206.5 0M258.1 52.9L245.4 0M294.4 52.9L284.3 0M330.7 52.9L323.2 0M367 52.9L362 0M403.3 52.9L400.9 0M439.6 52.9L439.8 0M475.9 52.9L478.7 0M512.2 52.9L517.5 0M548.5 52.9L556.4 0M584.8 52.9L595.3 0M621.1 52.9L634.2 0M657.4 52.9L673.1 0M693.7 52.9L711.9 0M730 52.9L750.8 0M766.3 52.9L789.7 0M802.6 52.9L828.6 0M838.9 52.9L867.4 0M875.2 52.9L906.3 0M911.5 52.9L945.2 0" stroke="#6a6c6a" stroke-opacity="0.75" stroke-width="1.2" fill="none" filter="url(#blur0)"/>
<path d="" stroke="#7a7c7a" stroke-opacity="0.85" stroke-width="1.6" fill="none" filter="url(#blur0)"/>
<path d="M0 11.8H875" stroke="#777977" stroke-opacity="0.8" stroke-width="1.8" stroke-dasharray="14 1.5 4 1.5"/>
<path d="M0 15.2H875M0 26.7H875M0 38.7H875" stroke="#b4b6b4" stroke-opacity="0.8" stroke-width="1"/>
<path d="M0 52.9H875" stroke="#c9cac9" stroke-width="1.2"/>
<polygon points="738,0 697,52.9 752,52.9 771,0" fill="#8291aa" filter="url(#blur2)"/>
<polygon points="697,52.9 752,52.9 875,135 875,187" fill="#7390c1" filter="url(#blur2)"/>
<polygon points="752,52.9 875,135 875,0 771,0" fill="#717f98"/>
<path d="M730 52.9L750.8 0" stroke="#4d5566" stroke-opacity="0.6" stroke-width="0.9" fill="none"/>
<path d="M776.6 69.3L808.9 0M801.2 85.7L845.1 0M825.8 102.1L883 0M850.4 118.6L922.7 0M875 135L964.3 0M826 0L875 23M766.2 13.5L875 64" stroke="#434b5c" stroke-opacity="0.6" stroke-width="1.1" fill="none" filter="url(#blur0)"/>
<clipPath id="shc"><polygon points="697,52.9 752,52.9 875,135 875,187"/></clipPath>
<g fill="#56678a" clip-path="url(#shc)"><polygon points="729.9,163.7 1548.4,166.4 1539.5,163.9 727.6,161.4"/><polygon points="790.3,165 803.7,165 798.3,160.5 785.1,160.5"/><polygon points="806.7,165.1 820.1,165.1 814.5,160.6 801.2,160.5"/><polygon points="731,164.9 757.7,165 752.8,160.3 726.5,160.2"/><polygon points="735.3,168.5 737.4,168.5 726.2,156.8 724.2,156.8"/><polygon points="853.5,165.6 907.4,165.8 899.2,160.5 846.3,160.3"/><polygon points="939.8,165.5 953.3,165.5 945.7,161 932.3,160.9"/><polygon points="956.3,165.5 969.9,165.6 962,161 948.6,161"/><polygon points="1090.8,166 1104.4,166 1094.4,161.4 1081,161.4"/><polygon points="1107.5,166 1121.1,166.1 1110.9,161.5 1097.4,161.5"/><polygon points="1003.3,165.8 1057.7,166 1047.9,161.2 994.4,161"/><polygon points="1034.4,169.5 1036.5,169.5 1013.6,157.7 1011.6,157.7"/><polygon points="1038.3,169.5 1040.5,169.5 1017.5,157.7 1015.4,157.7"/><polygon points="1155.6,166.6 1210.6,166.8 1196.9,161.4 1142.9,161.2"/><polygon points="1243.2,166.5 1257,166.5 1244.6,161.9 1231,161.9"/><polygon points="1260,166.5 1273.8,166.6 1261.2,162 1247.6,161.9"/><polygon points="1397.1,167 1411,167 1396.2,162.4 1382.5,162.3"/><polygon points="1414.1,167 1428,167.1 1413,162.4 1399.3,162.4"/><polygon points="1308,166.8 1363.5,167 1348.7,162.1 1294.1,161.9"/><polygon points="1343.3,170.5 1345.5,170.5 1310.3,158.6 1308.3,158.6"/><polygon points="1347.4,170.5 1349.6,170.6 1314.2,158.6 1312.1,158.6"/><polygon points="1463.6,167.6 1519.6,167.8 1500.3,162.3 1445.2,162.1"/><polygon points="635.4,64.5 1176.6,64.5 1172.7,63.5 634.4,63.5"/><polygon points="675.4,65 684.3,65 681.9,63 673.1,63"/><polygon points="686.3,65 695.2,65 692.7,63 683.9,63"/><polygon points="635.9,65.1 653.7,65.1 651.5,62.9 633.9,62.9"/><polygon points="638,66.6 639.4,66.6 634.4,61.4 633,61.4"/><polygon points="717.3,65.2 753.1,65.2 749.5,62.8 714.1,62.8"/><polygon points="774.7,65 783.7,65 780.3,63 771.4,63"/><polygon points="785.7,65 794.7,65 791.1,63 782.3,63"/><polygon points="874.7,65 883.7,65 879.3,63 870.3,63"/><polygon points="885.7,65 894.8,65 890.2,63 881.3,63"/><polygon points="816.8,65.1 852.8,65.1 848.4,62.9 812.8,62.9"/><polygon points="835.8,66.7 837.2,66.7 827,61.4 825.6,61.4"/><polygon points="838.4,66.7 839.8,66.7 829.6,61.4 828.2,61.4"/><polygon points="917.3,65.2 953.6,65.2 947.5,62.8 911.6,62.8"/><polygon points="975.3,65 984.4,65 978.9,63 969.9,63"/><polygon points="986.4,65 995.5,65 989.9,63 980.9,63"/><polygon points="1076.5,65 1085.7,65 1079.1,63 1070.1,63"/><polygon points="1087.7,65 1096.8,65 1090.2,63 1081.1,63"/><polygon points="1017.9,65.1 1054.4,65.1 1047.8,62.9 1011.7,62.9"/><polygon points="1038.8,66.7 1040.2,66.7 1024.6,61.4 1023.2,61.4"/><polygon points="1041.4,66.7 1042.9,66.7 1027.2,61.4 1025.8,61.4"/><polygon points="1119.8,65.2 1156.6,65.2 1148,62.8 1111.7,62.8"/><polygon points="1015.5,261.4 1021.9,261.4 718.7,52.8 715.7,52.8"/><polygon points="946.6,215.1 957.3,215.2 944.2,206.2 933.8,206.2"/><polygon points="931,204.3 941.4,204.3 929.1,195.9 919,195.9"/><polygon points="1012.3,261.3 1025.1,261.4 992.6,239.2 980.5,239.1"/><polygon points="1001.9,260.5 1033.2,260.7 1030.5,258.9 999.3,258.7"/><polygon points="891.1,176.9 902.3,177 863.2,150.3 853,150.2"/><polygon points="833.5,136.1 841.7,136.1 833.8,130.7 825.8,130.7"/><polygon points="824.1,129.5 832.1,129.5 824.6,124.4 816.7,124.3"/><polygon points="762,86.1 768.7,86.1 763.4,82.4 756.8,82.4"/><polygon points="755.7,81.7 762.3,81.7 757.2,78.2 750.7,78.2"/><polygon points="799.6,112.6 807.6,112.6 782.6,95.4 775.2,95.4"/><polygon points="782.8,104.6 801.6,104.6 800.6,104 781.8,104"/><polygon points="781,103.4 799.8,103.4 798.8,102.7 780.1,102.7"/><polygon points="738.7,70.1 746,70.1 728.6,58.2 721.7,58.2"/><polygon points="1417,263.9 1423.6,263.9 906.4,52.7 903.3,52.7"/><polygon points="1300.1,216.9 1311,216.9 1288.6,207.8 1278,207.8"/><polygon points="1273.2,205.8 1283.8,205.8 1262.9,197.3 1252.5,197.3"/><polygon points="1413.7,263.9 1426.9,264 1371.3,241.3 1358.9,241.3"/><polygon points="1402.3,263 1434.4,263.2 1429.8,261.4 1397.9,261.2"/><polygon points="1205.2,178.1 1216.6,178.1 1150.1,151.1 1139.7,151"/><polygon points="1105.7,136.7 1114.1,136.7 1100.6,131.2 1092.4,131.2"/><polygon points="1089.5,130 1097.7,130.1 1085,124.9 1076.9,124.8"/><polygon points="983.3,86.2 990.1,86.2 981.1,82.6 974.4,82.6"/><polygon points="972.5,81.8 979.2,81.8 970.6,78.3 964,78.3"/><polygon points="1047.8,112.9 1056,113 1013.5,95.7 1005.9,95.6"/><polygon points="1022.8,104.9 1042,105 1040.3,104.3 1021.2,104.3"/><polygon points="1019.8,103.7 1038.9,103.7 1037.2,103 1018.2,103"/><polygon points="943.8,70.2 951.3,70.2 921.8,58.2 914.8,58.2"/></g>
<path d="M393 188 C378 186 366 187 362 194 C356 204 357 220 360 227 L375 229 C377 242 384 254 398 258 L420 262 L420 188Z" fill="#7088b8" filter="url(#blur2)"/>
<path d="M389.8 150 C389.8 122 410 102 437.8 102 C466 102 486 122 486 150 L481 227 C481 252 462 268 437.8 268 C414 268 395.2 252 395.2 227Z" fill="url(#capg)" stroke="#ff6a10" stroke-width="2.6"/>
<path d="M389.8 150 C389.8 122 410 102 437.8 102 C466 102 486 122 486 150 L481 227 C481 252 462 268 437.8 268 C414 268 395.2 252 395.2 227Z" fill="url(#caps)"/>
<path d="M389.8 150 C389.8 122 410 102 437.8 102 C466 102 486 122 486 150 L481 227 C481 252 462 268 437.8 268 C414 268 395.2 252 395.2 227Z" fill="url(#caph)"/>
<path d="M391 145 Q437.8 194.39999999999998 485 145 L484.5 187 L392 187.5Z" fill="#17181b"/>
<path d="M427 187.3 L427 177 L436.8 169.5 L447.3 177 L447.3 187.2Z" fill="#27b6e4"/>
<path d="M437.8 170.2 L447.3 177 L447.3 187.2 L437.8 187.2Z" fill="#1f9fd8"/>
<rect x="447.3" y="175" width="10.6" height="12.3" fill="#0c1040"/>
<path d="M437.8 174.60000000000002H458V191" fill="none" stroke="#2233dd" stroke-width="1"/>
<g fill="none" stroke="#bdeab4" stroke-opacity="0.85" stroke-width="1"><path d="M391 150 C391 125 412 107 437.8 107 C464 107 484.5 125 484.5 150" stroke-dasharray="6 2"/><ellipse cx="437.8" cy="154" rx="45" ry="22" stroke-opacity="0.45"/><ellipse cx="437.8" cy="228" rx="41" ry="25" stroke-opacity="0.55"/><path d="M396 228 C396 248 415 263 437.8 263 C461 263 480 248 480 228" stroke-dasharray="6 2"/><path d="M388.5 164.60000000000002H485M391 140H484M389.5 140V187M485 140V187M392 187.3H484"/></g>
<path d="M437.3 267V122" stroke="#b5f29a" stroke-width="1.5"/>
<polygon points="430.3,124.5 444.8,124.5 437.6,102.80000000000001" fill="#4fe01f"/>
<ellipse cx="437.6" cy="124.6" rx="7.2" ry="1.8" fill="#3cb512"/>
<path d="M438.5 150 l4.8 5 a5.4 5.4 0 1 1 -9.600 0z" fill="#1d4fe8"/>
<path d="M437.8 192.2H510" stroke="#e8493f" stroke-width="1.4"/>
<polygon points="509.5,186 509.5,198.39999999999998 528.3,192.39999999999998" fill="#ee1c1c"/>
<ellipse cx="510" cy="192.2" rx="1.5" ry="6.2" fill="#6a0e0e"/>
<rect x="437.8" y="192.60000000000002" width="20" height="10.4" fill="#33d9a0" fill-opacity="0.7" stroke="#4be04b" stroke-width="1"/>
<polygon points="812,25 828,25 821,43" fill="#7cd64a"/><ellipse cx="820" cy="24" rx="8" ry="3.5" fill="#8fe65a"/>
<polygon points="815,57 825,57 826,73 813,73" fill="#8f9296"/><ellipse cx="819.5" cy="75" rx="7" ry="4" fill="#c9cacc"/>
<polygon points="791,45 791,56 813,51" fill="#d0d1d3"/><ellipse cx="791" cy="50.5" rx="2.5" ry="6" fill="#e6e6e8"/>
<polygon points="848,44 849,56 828,51" fill="#e2534a"/>
<rect x="815" y="43" width="11" height="16" fill="#d9dadc"/>
<text x="816" y="18" font-family="Liberation Sans, sans-serif" font-size="13" font-weight="bold" fill="#e4e6ea">y</text>
<text x="850" y="55" font-family="Liberation Sans, sans-serif" font-size="13" font-weight="bold" fill="#e4e6ea">x</text>
<path d="M768.5 8.799999999999997h15.5M768.5 11.599999999999994h15.5" stroke="#4f4a4a" stroke-width="0.9"/>
<path d="M848 19h6v5h-6zM849.5 19v-2a1.8 1.8 0 0 1 3.6 0" fill="none" stroke="#b9c0cc" stroke-width="1.1"/>
<text x="806" y="106" font-family="Liberation Sans, sans-serif" font-size="12" fill="#c3c8d2">Persp</text>
<path d="M803 97l-9 4.5 9 4.5M803 101.5h-9" stroke="#c3c8d2" stroke-width="0.9" fill="none"/>
</svg>
<!-- scene tools overlay -->
<div class="abs" style="left:2px;top:120px;width:43px;height:193px;background:rgba(27,27,27,.94);border-radius:4px">
  <div class="abs" style="left:15px;top:6px;width:14px;height:1px;background:#5c5c5c"></div><div class="abs" style="left:15px;top:9px;width:14px;height:1px;background:#5c5c5c"></div>
  <div class="btn" style="left:3px;top:18px;width:37px;height:20px;border-radius:3px 3px 0 0;background:#555"><svg class="abs" style="left:10px;top:2px" width="17" height="16" viewBox="0 0 17 16"><g stroke="#c8c8c8" stroke-width="2.100" stroke-linecap="round"><path d="M5.300 8L4.300 3.600M7.900 7.500L7.600 1.700M10.500 7.500L11 2.100M13 8.500L14.100 4.300M4.200 11.500L1.800 8.400"/></g><path d="M4.200 7.200h9.800v3.300c0 3.200-2.100 5-4.900 5s-4.900-1.800-4.900-4.500z" fill="#c8c8c8"/></svg></div>
  <div class="btn on" style="left:3px;top:39px;width:37px;height:20px;border-radius:0"><svg class="abs" style="left:11px;top:3px" width="15" height="15" viewBox="0 0 15 15"><path d="M7.500 2.500v3.300M7.500 9.200v3.300M2.500 7.500h3.300M9.200 7.500h3.300" stroke="#fff" stroke-width="1.300"/><path d="M7.500 0l2.400 3.200H5.100zM7.500 15l2.400-3.200H5.100zM0 7.500l3.200-2.400v4.800zM15 7.500l-3.200-2.400v4.800z" fill="#fff"/></svg></div>
  <div class="btn" style="left:3px;top:60px;width:37px;height:20px;border-radius:0;background:#555"><svg class="abs" style="left:11px;top:3px" width="15" height="15" viewBox="0 0 15 15"><path d="M2.500 9.500A5.200 5.200 0 0 1 9.500 2.400M12.500 5.500A5.200 5.200 0 0 1 5.500 12.600" stroke="#c4c4c4" stroke-width="1.200" fill="none"/><path d="M8.500 0.500l2.500 2.300-3 1.400zM6.500 14.500L4 12.200l3-1.400z" fill="#c4c4c4"/></svg></div>
  <div class="btn" style="left:3px;top:81px;width:37px;height:20px;border-radius:0;background:#555"><svg class="abs" style="left:11px;top:3px" width="15" height="15" viewBox="0 0 15 15"><rect x="0.600" y="0.600" width="13.800" height="13.800" fill="none" stroke="#c4c4c4" stroke-width="1.100"/><rect x="2.500" y="8" width="4.500" height="4.500" fill="none" stroke="#c4c4c4"/><path d="M7 8l5-5M8.500 2.800h3.700v3.700" stroke="#c4c4c4" stroke-width="1.100" fill="none"/></svg></div>
  <div class="btn" style="left:3px;top:102px;width:37px;height:20px;border-radius:0;background:#555"><svg class="abs" style="left:11px;top:3px" width="15" height="15" viewBox="0 0 15 15"><path d="M2 5v5M13 5v5M5 2h5M5 13h5" stroke="#c4c4c4" stroke-width="1.100"/><path d="M0.500 0.500h3v3h-3zM11.500 0.500h3v3h-3zM0.500 11.500h3v3h-3zM11.500 11.500h3v3h-3z" fill="#c4c4c4"/></svg></div>
  <div class="btn" style="left:3px;top:123px;width:37px;height:20px;border-radius:0 0 3px 3px;background:#555"><svg class="abs" style="left:11px;top:2px" width="16" height="16" viewBox="0 0 16 16"><circle cx="8" cy="8" r="5.800" fill="none" stroke="#c4c4c4" stroke-dasharray="3 1.500"/><path d="M8 4v8M4 8h8" stroke="#c4c4c4"/><path d="M8 2.500l1.500 2h-3zM8 13.500l1.500-2h-3zM2.500 8l2-1.500v3zM13.500 8l-2-1.500v3z" fill="#c4c4c4"/><path d="M0 13v3h3zM16 0v3h-3z" fill="#c4c4c4"/></svg></div>
  <svg class="abs" style="left:17px;top:149px" width="9" height="14" viewBox="0 0 10 16"><rect x="0.500" y="0.500" width="9" height="15" rx="4.500" fill="#8ee533"/><path d="M5 0.500v15M0.500 8h9" stroke="#2a4a10" stroke-width="0.900"/></svg>
  <div class="btn" style="left:3px;top:169px;width:37px;height:20px;border-radius:3px;background:#555"><svg class="abs" style="left:10px;top:2px" width="17" height="16" viewBox="0 0 17 16"><path d="M3 11.500c0-3 2-4 4-7.500h3c2 3.500 4 4.500 4 7.500" stroke="#c4c4c4" stroke-width="1.100" fill="none"/><rect x="6.500" y="1" width="4" height="4" fill="#555" stroke="#c4c4c4"/><rect x="0.800" y="11" width="4" height="4" fill="#555" stroke="#c4c4c4"/><rect x="12" y="9" width="4" height="4" fill="#555" stroke="#c4c4c4"/></svg></div>
</div>
<!-- ===== Game panel ===== -->
<div class="tabbar" style="left:0;top:634px;width:875px;height:19px">
  <svg class="abs" style="left:8px;top:4px" width="10" height="11" viewBox="0 0 10 11"><rect x="0" y="0" width="10" height="11" rx="1.200" fill="#c4c4c4"/><path d="M2 3h6M2 5.500h6M2 8h6" stroke="#282828" stroke-width="1"/></svg>
  <span class="t" style="left:23px">Console</span>
  <div class="tab" style="left:88px;width:73px">
    <svg class="abs" style="left:6px;top:6px" width="13" height="8" viewBox="0 0 13 8"><rect x="0" y="0" width="13" height="8" rx="4" fill="#c4c4c4"/><path d="M2.200 4h3M3.700 2.500v3" stroke="#3c3c3c" stroke-width="1"/><circle cx="9" cy="3" r="0.800" fill="#3c3c3c"/><circle cx="10.600" cy="5" r="0.800" fill="#3c3c3c"/></svg>
    <span class="t" style="left:23px">Game</span>
  </div>
  <svg class="abs" style="left:171px;top:4px" width="12" height="12" viewBox="0 0 12 12"><circle cx="6" cy="6" r="6" fill="#c4c4c4"/><path d="M6 2.200V6h3.200" stroke="#282828" stroke-width="1.300" fill="none"/></svg>
  <span class="t" style="left:187px">Animation</span>
  <svg class="abs" style="left:860px;top:3px" width="4" height="12" viewBox="0 0 4 12"><circle cx="2" cy="1.500" r="1.200" fill="#c4c4c4"/><circle cx="2" cy="6" r="1.200" fill="#c4c4c4"/><circle cx="2" cy="10.500" r="1.200" fill="#c4c4c4"/></svg>
</div>
<div class="tool" style="left:0;top:653px;width:875px;height:21px;border-bottom:1px solid #232323">
  <span class="t" style="left:4px;top:3px;color:#d2d2d2">Game</span><div class="arr" style="left:77px;top:8px"></div>
  <div class="abs" style="left:88px;top:0;width:1px;height:20px;background:#232323"></div>
  <span class="t" style="left:100px;top:3px;color:#d2d2d2">Display 1</span><div class="arr" style="left:163px;top:8px"></div>
  <div class="abs" style="left:175px;top:0;width:1px;height:20px;background:#232323"></div>
  <span class="t" style="left:180px;top:3px;color:#d2d2d2">Free Aspect</span><div class="arr" style="left:323px;top:8px"></div>
  <div class="abs" style="left:336px;top:0;width:1px;height:20px;background:#232323"></div>
  <span class="t" style="left:343px;top:3px;color:#d2d2d2">Scale</span>
  <div class="abs" style="left:387px;top:10px;width:143px;height:2px;background:#5e5e5e;border-radius:1px"></div>
  <div class="abs" style="left:381px;top:5px;width:10px;height:10px;border-radius:5px;background:#999"></div>
  <span class="t" style="left:536px;top:3px;color:#d2d2d2">1x</span>
  <div class="abs" style="left:576px;top:0;width:1px;height:20px;background:#232323"></div>
  <span class="t" style="left:581px;top:3px;color:#d2d2d2">Play Focused</span><div class="arr" style="left:675px;top:8px"></div>
  <div class="abs" style="left:687px;top:0;width:1px;height:20px;background:#232323"></div>
  <svg class="abs" style="left:693px;top:3px" width="14" height="14" viewBox="0 0 14 14"><ellipse cx="7" cy="8.200" rx="3.400" ry="4.600" fill="#c4c4c4"/><circle cx="7" cy="3.200" r="2" fill="#c4c4c4"/><path d="M1 5l3 2M13 5l-3 2M0.500 9h3M13.500 9h-3M1.500 13l2.500-2M12.500 13L10 11M5 1L4 0M9 1l1-1" stroke="#c4c4c4" stroke-width="1.100"/><path d="M7 4.500v8" stroke="#3c3c3c" stroke-width="0.800"/></svg>
  <div class="abs" style="left:713px;top:0;width:1px;height:20px;background:#232323"></div>
  <svg class="abs" style="left:719px;top:4px" width="14" height="12" viewBox="0 0 14 12"><path d="M0.500 3.500h2.300l3-2.800v9.600l-3-2.800H0.500z" fill="#c4c4c4"/><path d="M8 3.500a3 3 0 0 1 0 5M10 1.800a5.500 5.500 0 0 1 0 8.400" stroke="#c4c4c4" stroke-width="1.100" fill="none"/></svg>
  <div class="abs" style="left:739px;top:0;width:1px;height:20px;background:#232323"></div>
  <svg class="abs" style="left:745px;top:5px" width="14" height="10" viewBox="0 0 14 10"><rect x="0" y="0" width="14" height="10" rx="1" fill="#c4c4c4"/><path d="M2 2.500h10M2 5h10" stroke="#3c3c3c" stroke-width="1.200" stroke-dasharray="1.500 1"/><path d="M3.500 7.600h7" stroke="#3c3c3c" stroke-width="1.200"/></svg>
  <div class="abs" style="left:765px;top:0;width:1px;height:20px;background:#232323"></div>
  <span class="t" style="left:771px;top:3px;color:#d2d2d2">Stats</span>
  <div class="abs" style="left:804px;top:0;width:1px;height:20px;background:#232323"></div>
  <span class="t" style="left:809px;top:3px;color:#d2d2d2">Gizmos</span>
  <div class="abs" style="left:856px;top:0;width:1px;height:20px;background:#232323"></div>
  <div class="arr" style="left:862px;top:8px"></div>
</div>
<svg class="abs" style="left:0;top:674px;overflow:hidden" width="875" height="344" viewBox="0 0 875 344">
<defs><linearGradient id="gcap" x1="0" y1="0" x2="0" y2="1"><stop offset="0" stop-color="#34e0ff"/><stop offset="1" stop-color="#1fbfe2"/></linearGradient><radialGradient id="gcaph"><stop offset="0" stop-color="#6af2ff" stop-opacity="0.95"/><stop offset="1" stop-color="#30dcff" stop-opacity="0"/></radialGradient><filter id="gb1"><feGaussianBlur stdDeviation="0.8"/></filter><filter id="gb0"><feGaussianBlur stdDeviation="0.5"/></filter><filter id="gb2"><feGaussianBlur stdDeviation="1.2"/></filter></defs>
<rect width="875" height="344" fill="#6a625e"/>
<polygon points="91,0 697.6,0 875,322 875,344 0,344 0,123" fill="#f5f5f5"/>
<polygon points="247,0 545.5,0 620.4,344 113.7,344" fill="#f2f2f1"/>
<clipPath id="outl"><polygon points="91,0 172,0 -6.2,344 0,344 0,123"/></clipPath>
<clipPath id="outr"><polygon points="610,0 697.6,0 875,322 875,344 737.1,344"/></clipPath>
<path d="M98.2 -10.3L-198.1 415.4M119.1 -10.3L-159 415.4M140.1 -10.3L-119.9 415.4M161.1 -10.3L-80.8 415.4M182 -10.3L-41.6 415.4M203 -10.3L-2.5 415.4M224 -10.3L36.6 415.4M245 -10.3L75.7 415.4M265.9 -10.3L114.8 415.4M286.9 -10.3L154 415.4M307.9 -10.3L193.1 415.4M328.9 -10.3L232.2 415.4M349.8 -10.3L271.3 415.4M370.8 -10.3L310.5 415.4M391.8 -10.3L349.6 415.4M412.8 -10.3L388.7 415.4M433.7 -10.3L427.8 415.4M454.7 -10.3L467 415.4M475.7 -10.3L506.1 415.4M496.6 -10.3L545.2 415.4M517.6 -10.3L584.3 415.4M538.6 -10.3L623.4 415.4M559.6 -10.3L662.6 415.4M580.5 -10.3L701.7 415.4M-886.3 458.4L1756 458.4M-818.6 409.4L1688.9 409.4M-757.5 365.1L1628.3 365.1M-702 325L1573.3 325M-651.5 288.4L1523.2 288.4M-605.2 254.9L1477.3 254.9M-562.7 224.1L1435.2 224.1M-523.5 195.7L1396.3 195.7M-487.3 169.5L1360.4 169.5M-453.7 145.2L1327.1 145.2M-422.4 122.5L1296.1 122.5M-393.2 101.4L1267.2 101.4M-366 81.7L1240.1 81.7M-340.5 63.2L1214.8 63.2M-316.5 45.9L1191.1 45.9M-294 29.6L1168.7 29.6M-272.7 14.2L1147.7 14.2M-252.7 -0.3L1127.8 -0.3M-233.8 -14L1109.1 -14M-215.8 -27L1091.3 -27" stroke="#8f918f" stroke-opacity="0.62" stroke-width="1.1" fill="none" clip-path="url(#outl)" filter="url(#gb0)"/>
<path d="M692.3 -10.3L910.2 415.4M671.4 -10.3L871.1 415.4M650.4 -10.3L832 415.4M629.4 -10.3L792.9 415.4M608.4 -10.3L753.7 415.4M587.5 -10.3L714.6 415.4M566.5 -10.3L675.5 415.4M545.5 -10.3L636.4 415.4M524.6 -10.3L597.3 415.4M503.6 -10.3L558.1 415.4M482.6 -10.3L519 415.4M461.6 -10.3L479.9 415.4M440.7 -10.3L440.8 415.4M419.7 -10.3L401.6 415.4M398.7 -10.3L362.5 415.4M377.7 -10.3L323.4 415.4M356.8 -10.3L284.3 415.4M335.8 -10.3L245.1 415.4M314.8 -10.3L206 415.4M293.8 -10.3L166.9 415.4M272.9 -10.3L127.8 415.4M251.9 -10.3L88.7 415.4M230.9 -10.3L49.5 415.4M210 -10.3L10.4 415.4M-886.3 458.4L1756 458.4M-818.6 409.4L1688.9 409.4M-757.5 365.1L1628.3 365.1M-702 325L1573.3 325M-651.5 288.4L1523.2 288.4M-605.2 254.9L1477.3 254.9M-562.7 224.1L1435.2 224.1M-523.5 195.7L1396.3 195.7M-487.3 169.5L1360.4 169.5M-453.7 145.2L1327.1 145.2M-422.4 122.5L1296.1 122.5M-393.2 101.4L1267.2 101.4M-366 81.7L1240.1 81.7M-340.5 63.2L1214.8 63.2M-316.5 45.9L1191.1 45.9M-294 29.6L1168.7 29.6M-272.7 14.2L1147.7 14.2M-252.7 -0.3L1127.8 -0.3M-233.8 -14L1109.1 -14M-215.8 -27L1091.3 -27" stroke="#8f918f" stroke-opacity="0.62" stroke-width="1.1" fill="none" clip-path="url(#outr)" filter="url(#gb0)"/>
<clipPath id="inn"><polygon points="247,0 565,0 654.3,344 113.7,344"/></clipPath>
<g clip-path="url(#inn)"><path d="M285.7 -5.3L165 382.1M361.7 -5.3L300.2 382.1M437.6 -5.3L435.3 382.1M513.5 -5.3L570.4 382.1M589.5 -5.3L705.6 382.1M64 308.6L807.5 308.6M117.7 193.1L755.2 193.1M158 106.3L715.9 106.3M189.3 38.8L685.4 38.8" stroke="#e0e1e0" stroke-width="0.9" fill="none"/>
<g fill="#adafad"><polygon points="-38.4,383.4 909,383.4 907.6,380.8 -37,380.8"/><polygon points="-12.1,384.8 -6,384.8 -3.2,379.4 -9.3,379.4"/><polygon points="-4.6,384.8 1.5,384.8 4.2,379.4 -1.9,379.4"/><polygon points="-39.3,385 -27.1,385 -24,379.2 -36.1,379.2"/><polygon points="-41.1,389.2 -40.2,389.2 -32.6,375.1 -33.5,375.1"/><polygon points="16.2,385.3 40.6,385.3 43.5,378.9 19.2,378.9"/><polygon points="55.7,384.8 61.8,384.8 64.1,379.4 58.1,379.4"/><polygon points="63.2,384.8 69.3,384.8 71.6,379.4 65.5,379.4"/><polygon points="123.5,384.8 129.6,384.8 131.5,379.4 125.4,379.4"/><polygon points="130.9,384.8 137,384.8 138.9,379.4 132.9,379.4"/><polygon points="84.1,385 108.5,385 110.7,379.2 86.4,379.2"/><polygon points="93.3,389.2 94.3,389.2 99.8,375.1 98.8,375.1"/><polygon points="95.1,389.2 96,389.2 101.5,375.1 100.6,375.1"/><polygon points="151.8,385.3 176.2,385.3 178.1,378.9 153.9,378.9"/><polygon points="191.3,384.8 197.4,384.8 198.9,379.4 192.8,379.4"/><polygon points="198.7,384.8 204.8,384.8 206.3,379.4 200.2,379.4"/><polygon points="259.1,384.8 265.2,384.8 266.2,379.4 260.2,379.4"/><polygon points="266.5,384.8 272.6,384.8 273.6,379.4 267.6,379.4"/><polygon points="219.7,385 244.1,385 245.4,379.2 221.1,379.2"/><polygon points="229.5,389.2 230.5,389.2 233.8,375.1 232.9,375.1"/><polygon points="231.3,389.2 232.3,389.2 235.6,375.1 234.6,375.1"/><polygon points="287.4,385.3 311.9,385.3 312.8,378.9 288.5,378.9"/><polygon points="326.8,384.8 332.9,384.8 333.6,379.4 327.5,379.4"/><polygon points="334.3,384.8 340.4,384.8 341,379.4 334.9,379.4"/><polygon points="394.6,384.8 400.7,384.8 401,379.4 394.9,379.4"/><polygon points="402.1,384.8 408.2,384.8 408.4,379.4 402.3,379.4"/><polygon points="355.3,385 379.7,385 380.1,379.2 355.8,379.2"/><polygon points="365.8,389.2 366.7,389.2 367.9,375.1 367,375.1"/><polygon points="367.5,389.2 368.5,389.2 369.6,375.1 368.7,375.1"/><polygon points="423.1,385.3 447.5,385.3 447.4,378.9 423.2,378.9"/><polygon points="462.4,384.8 468.5,384.8 468.3,379.4 462.3,379.4"/><polygon points="469.8,384.8 475.9,384.8 475.7,379.4 469.7,379.4"/><polygon points="530.2,384.8 536.3,384.8 535.7,379.4 529.6,379.4"/><polygon points="537.6,384.8 543.7,384.8 543.1,379.4 537,379.4"/><polygon points="490.9,385 515.3,385 514.8,379.2 490.5,379.2"/><polygon points="502,389.2 503,389.2 502,375.1 501,375.1"/><polygon points="503.8,389.2 504.7,389.2 503.7,375.1 502.8,375.1"/><polygon points="558.7,385.3 583.1,385.3 582.1,378.9 557.8,378.9"/><polygon points="597.9,384.8 604,384.8 603,379.4 597,379.4"/><polygon points="605.4,384.8 611.5,384.8 610.5,379.4 604.4,379.4"/><polygon points="665.7,384.8 671.8,384.8 670.4,379.4 664.3,379.4"/><polygon points="673.2,384.8 679.3,384.8 677.8,379.4 671.8,379.4"/><polygon points="626.5,385 650.9,385 649.5,379.2 625.2,379.2"/><polygon points="638.2,389.2 639.2,389.2 636,375.1 635.1,375.1"/><polygon points="640,389.2 641,389.2 637.8,375.1 636.8,375.1"/><polygon points="694.3,385.3 718.7,385.3 716.7,378.9 692.5,378.9"/><polygon points="733.5,384.8 739.6,384.8 737.8,379.4 731.7,379.4"/><polygon points="741,384.8 747.1,384.8 745.2,379.4 739.1,379.4"/><polygon points="801.3,384.8 807.4,384.8 805.1,379.4 799.1,379.4"/><polygon points="808.7,384.8 814.8,384.8 812.5,379.4 806.5,379.4"/><polygon points="762,385 786.4,385 784.2,379.2 759.9,379.2"/><polygon points="774.5,389.2 775.4,389.2 770.1,375.1 769.2,375.1"/><polygon points="776.2,389.2 777.2,389.2 771.9,375.1 770.9,375.1"/><polygon points="830,385.3 854.4,385.3 851.4,378.9 827.2,378.9"/><polygon points="869.1,384.8 875.2,384.8 872.5,379.4 866.4,379.4"/><polygon points="876.5,384.8 882.6,384.8 879.9,379.4 873.8,379.4"/><polygon points="897.6,385 909.8,385 906.8,379.2 894.6,379.2"/><polygon points="910.7,389.2 911.6,389.2 904.2,375.1 903.2,375.1"/><polygon points="35.2,247.3 837,247.3 836,245.5 36.2,245.5"/><polygon points="57.6,248.4 62.7,248.4 64.7,244.5 59.6,244.5"/><polygon points="63.9,248.4 69.1,248.4 71,244.5 65.8,244.5"/><polygon points="34.6,248.5 44.9,248.5 47.1,244.3 36.8,244.3"/><polygon points="33.3,251.5 34.1,251.5 39.6,241.4 38.8,241.4"/><polygon points="81.5,248.7 102.2,248.7 104.2,244.1 83.7,244.1"/><polygon points="114.9,248.4 120.1,248.4 121.8,244.5 116.6,244.5"/><polygon points="121.2,248.4 126.4,248.4 128,244.5 122.9,244.5"/><polygon points="172.3,248.4 177.4,248.4 178.8,244.5 173.7,244.5"/><polygon points="178.6,248.4 183.8,248.4 185.1,244.5 180,244.5"/><polygon points="139,248.5 159.6,248.5 161.2,244.3 140.6,244.3"/><polygon points="147,251.5 147.8,251.5 151.7,241.4 150.9,241.4"/><polygon points="148.5,251.5 149.3,251.5 153.2,241.4 152.4,241.4"/><polygon points="196.3,248.7 216.9,248.7 218.3,244.1 197.7,244.1"/><polygon points="229.6,248.4 234.8,248.4 235.9,244.5 230.7,244.5"/><polygon points="235.9,248.4 241.1,248.4 242.1,244.5 237,244.5"/><polygon points="287,248.4 292.1,248.4 292.9,244.5 287.8,244.5"/><polygon points="293.3,248.4 298.4,248.4 299.2,244.5 294.1,244.5"/><polygon points="253.7,248.5 274.3,248.5 275.3,244.3 254.7,244.3"/><polygon points="262.2,251.5 263,251.5 265.3,241.4 264.5,241.4"/><polygon points="263.6,251.5 264.5,251.5 266.8,241.4 266,241.4"/><polygon points="311,248.7 331.7,248.7 332.3,244.1 311.8,244.1"/><polygon points="344.3,248.4 349.5,248.4 350,244.5 344.8,244.5"/><polygon points="350.6,248.4 355.8,248.4 356.2,244.5 351.1,244.5"/><polygon points="401.7,248.4 406.8,248.4 407,244.5 401.9,244.5"/><polygon points="408,248.4 413.1,248.4 413.3,244.5 408.2,244.5"/><polygon points="368.4,248.5 389.1,248.5 389.3,244.3 368.8,244.3"/><polygon points="377.3,251.5 378.1,251.5 379,241.4 378.2,241.4"/><polygon points="378.8,251.5 379.6,251.5 380.4,241.4 379.7,241.4"/><polygon points="425.8,248.7 446.4,248.7 446.4,244.1 425.8,244.1"/><polygon points="459,248.4 464.2,248.4 464.1,244.5 458.9,244.5"/><polygon points="465.3,248.4 470.5,248.4 470.3,244.5 465.2,244.5"/><polygon points="516.4,248.4 521.5,248.4 521.1,244.5 516,244.5"/><polygon points="522.7,248.4 527.8,248.4 527.4,244.5 522.3,244.5"/><polygon points="483.1,248.5 503.8,248.5 503.4,244.3 482.9,244.3"/><polygon points="492.5,251.5 493.3,251.5 492.6,241.4 491.8,241.4"/><polygon points="494,251.5 494.8,251.5 494.1,241.4 493.3,241.4"/><polygon points="540.5,248.7 561.2,248.7 560.4,244.1 539.9,244.1"/><polygon points="573.7,248.4 578.9,248.4 578.2,244.5 573,244.5"/><polygon points="580,248.4 585.2,248.4 584.4,244.5 579.3,244.5"/><polygon points="631.1,248.4 636.2,248.4 635.2,244.5 630.1,244.5"/><polygon points="637.4,248.4 642.5,248.4 641.5,244.5 636.4,244.5"/><polygon points="597.8,248.5 618.5,248.5 617.5,244.3 597,244.3"/><polygon points="607.7,251.5 608.5,251.5 606.2,241.4 605.4,241.4"/><polygon points="609.2,251.5 610,251.5 607.7,241.4 606.9,241.4"/><polygon points="655.3,248.7 675.9,248.7 674.5,244.1 653.9,244.1"/><polygon points="688.4,248.4 693.6,248.4 692.3,244.5 687.1,244.5"/><polygon points="694.7,248.4 699.9,248.4 698.5,244.5 693.4,244.5"/><polygon points="745.8,248.4 750.9,248.4 749.3,244.5 744.2,244.5"/><polygon points="752.1,248.4 757.2,248.4 755.6,244.5 750.5,244.5"/><polygon points="712.6,248.5 733.2,248.5 731.6,244.3 711.1,244.3"/><polygon points="722.9,251.5 723.7,251.5 719.9,241.4 719.1,241.4"/><polygon points="724.4,251.5 725.2,251.5 721.3,241.4 720.6,241.4"/><polygon points="770,248.7 790.7,248.7 788.5,244.1 768,244.1"/><polygon points="803.1,248.4 808.3,248.4 806.4,244.5 801.2,244.5"/><polygon points="809.4,248.4 814.6,248.4 812.6,244.5 807.5,244.5"/><polygon points="827.3,248.5 837.6,248.5 835.4,244.3 825.1,244.3"/><polygon points="838,251.5 838.8,251.5 833.5,241.4 832.7,241.4"/><polygon points="89.2,147.5 784.2,147.5 783.5,146.1 89.9,146.1"/><polygon points="108.7,148.3 113.1,148.3 114.6,145.3 110.1,145.3"/><polygon points="114.1,148.3 118.6,148.3 120,145.3 115.6,145.3"/><polygon points="88.7,148.4 97.7,148.4 99.3,145.2 90.4,145.2"/><polygon points="87.8,150.6 88.5,150.6 92.6,143 91.9,143"/><polygon points="129.4,148.5 147.3,148.5 148.9,145.1 131.1,145.1"/><polygon points="158.4,148.3 162.8,148.3 164.1,145.3 159.6,145.3"/><polygon points="163.8,148.3 168.3,148.3 169.5,145.3 165.1,145.3"/><polygon points="208.1,148.3 212.5,148.3 213.6,145.3 209.1,145.3"/><polygon points="213.5,148.3 218,148.3 219,145.3 214.5,145.3"/><polygon points="179.2,148.4 197.1,148.4 198.3,145.2 180.4,145.2"/><polygon points="186.3,150.6 187,150.6 189.9,143 189.2,143"/><polygon points="187.6,150.6 188.3,150.6 191.2,143 190.5,143"/><polygon points="228.8,148.5 246.7,148.5 247.8,145.1 230,145.1"/><polygon points="257.8,148.3 262.2,148.3 263,145.3 258.6,145.3"/><polygon points="263.2,148.3 267.7,148.3 268.5,145.3 264,145.3"/><polygon points="307.5,148.3 311.9,148.3 312.5,145.3 308.1,145.3"/><polygon points="312.9,148.3 317.4,148.3 318,145.3 313.5,145.3"/><polygon points="278.6,148.4 296.5,148.4 297.2,145.2 279.4,145.2"/><polygon points="286,150.6 286.7,150.6 288.5,143 287.8,143"/><polygon points="287.3,150.6 288,150.6 289.8,143 289.1,143"/><polygon points="328.3,148.5 346.2,148.5 346.7,145.1 328.9,145.1"/><polygon points="357.2,148.3 361.6,148.3 362,145.3 357.5,145.3"/><polygon points="362.6,148.3 367.1,148.3 367.4,145.3 363,145.3"/><polygon points="406.9,148.3 411.3,148.3 411.5,145.3 407,145.3"/><polygon points="412.3,148.3 416.8,148.3 416.9,145.3 412.5,145.3"/><polygon points="378,148.4 395.9,148.4 396.1,145.2 378.3,145.2"/><polygon points="385.8,150.6 386.5,150.6 387.1,143 386.4,143"/><polygon points="387.1,150.6 387.8,150.6 388.4,143 387.7,143"/><polygon points="427.7,148.5 445.6,148.5 445.6,145.1 427.8,145.1"/><polygon points="456.6,148.3 461,148.3 460.9,145.3 456.5,145.3"/><polygon points="462,148.3 466.5,148.3 466.4,145.3 461.9,145.3"/><polygon points="506.3,148.3 510.7,148.3 510.4,145.3 506,145.3"/><polygon points="511.7,148.3 516.2,148.3 515.9,145.3 511.4,145.3"/><polygon points="477.4,148.4 495.3,148.4 495.1,145.2 477.3,145.2"/><polygon points="485.6,150.6 486.3,150.6 485.7,143 485,143"/><polygon points="486.8,150.6 487.5,150.6 487,143 486.3,143"/><polygon points="527.2,148.5 545.1,148.5 544.5,145.1 526.7,145.1"/><polygon points="556,148.3 560.4,148.3 559.9,145.3 555.4,145.3"/><polygon points="561.4,148.3 565.9,148.3 565.3,145.3 560.9,145.3"/><polygon points="605.7,148.3 610.1,148.3 609.4,145.3 604.9,145.3"/><polygon points="611.1,148.3 615.6,148.3 614.8,145.3 610.4,145.3"/><polygon points="576.9,148.4 594.8,148.4 594,145.2 576.2,145.2"/><polygon points="585.3,150.6 586,150.6 584.3,143 583.6,143"/><polygon points="586.6,150.6 587.3,150.6 585.6,143 584.9,143"/><polygon points="626.6,148.5 644.5,148.5 643.4,145.1 625.6,145.1"/><polygon points="655.4,148.3 659.8,148.3 658.9,145.3 654.4,145.3"/><polygon points="660.8,148.3 665.3,148.3 664.3,145.3 659.8,145.3"/><polygon points="705.1,148.3 709.5,148.3 708.3,145.3 703.9,145.3"/><polygon points="710.5,148.3 715,148.3 713.8,145.3 709.3,145.3"/><polygon points="676.3,148.4 694.2,148.4 693,145.2 675.1,145.2"/><polygon points="685.1,150.6 685.8,150.6 682.9,143 682.2,143"/><polygon points="686.4,150.6 687.1,150.6 684.2,143 683.5,143"/><polygon points="726.1,148.5 744,148.5 742.3,145.1 724.5,145.1"/><polygon points="754.8,148.3 759.2,148.3 757.8,145.3 753.4,145.3"/><polygon points="760.2,148.3 764.7,148.3 763.3,145.3 758.8,145.3"/><polygon points="775.7,148.4 784.6,148.4 783,145.2 774.1,145.2"/><polygon points="784.8,150.6 785.5,150.6 781.5,143 780.8,143"/><polygon points="130.5,71.1 743.8,71.1 743.2,70.1 131.1,70.1"/><polygon points="147.7,71.7 151.6,71.7 152.8,69.4 148.9,69.4"/><polygon points="152.5,71.7 156.5,71.7 157.6,69.4 153.7,69.4"/><polygon points="130.1,71.8 138,71.8 139.3,69.4 131.4,69.4"/><polygon points="129.4,73.6 130.1,73.6 133.2,67.6 132.6,67.6"/><polygon points="166,71.9 181.8,71.9 183,69.2 167.3,69.2"/><polygon points="191.6,71.7 195.5,71.7 196.5,69.4 192.5,69.4"/><polygon points="196.4,71.7 200.3,71.7 201.3,69.4 197.4,69.4"/><polygon points="235.4,71.7 239.4,71.7 240.2,69.4 236.2,69.4"/><polygon points="240.2,71.7 244.2,71.7 245,69.4 241,69.4"/><polygon points="209.9,71.8 225.7,71.8 226.6,69.4 210.9,69.4"/><polygon points="216.3,73.6 216.9,73.6 219.2,67.6 218.6,67.6"/><polygon points="217.4,73.6 218,73.6 220.3,67.6 219.7,67.6"/><polygon points="253.8,71.9 269.6,71.9 270.4,69.2 254.6,69.2"/><polygon points="279.3,71.7 283.2,71.7 283.8,69.4 279.9,69.4"/><polygon points="284.1,71.7 288,71.7 288.6,69.4 284.7,69.4"/><polygon points="323.1,71.7 327.1,71.7 327.5,69.4 323.6,69.4"/><polygon points="327.9,71.7 331.9,71.7 332.3,69.4 328.4,69.4"/><polygon points="297.7,71.8 313.5,71.8 314,69.4 298.3,69.4"/><polygon points="304.3,73.6 304.9,73.6 306.3,67.6 305.7,67.6"/><polygon points="305.4,73.6 306,73.6 307.4,67.6 306.8,67.6"/><polygon points="341.5,71.9 357.3,71.9 357.7,69.2 342,69.2"/><polygon points="367,71.7 370.9,71.7 371.2,69.4 367.3,69.4"/><polygon points="371.8,71.7 375.7,71.7 376,69.4 372.1,69.4"/><polygon points="410.8,71.7 414.8,71.7 414.9,69.4 410.9,69.4"/><polygon points="415.6,71.7 419.6,71.7 419.7,69.4 415.7,69.4"/><polygon points="385.4,71.8 401.2,71.8 401.3,69.4 385.6,69.4"/><polygon points="392.3,73.6 392.9,73.6 393.4,67.6 392.7,67.6"/><polygon points="393.4,73.6 394,73.6 394.5,67.6 393.9,67.6"/><polygon points="429.2,71.9 445,71.9 445,69.2 429.3,69.2"/><polygon points="454.7,71.7 458.6,71.7 458.6,69.4 454.6,69.4"/><polygon points="459.5,71.7 463.4,71.7 463.4,69.4 459.4,69.4"/><polygon points="498.5,71.7 502.5,71.7 502.2,69.4 498.3,69.4"/><polygon points="503.4,71.7 507.3,71.7 507,69.4 503.1,69.4"/><polygon points="473.1,71.8 488.9,71.8 488.7,69.4 473,69.4"/><polygon points="480.2,73.6 480.9,73.6 480.4,67.6 479.8,67.6"/><polygon points="481.4,73.6 482,73.6 481.6,67.6 481,67.6"/><polygon points="517,71.9 532.8,71.9 532.3,69.2 516.6,69.2"/><polygon points="542.4,71.7 546.3,71.7 545.9,69.4 542,69.4"/><polygon points="547.2,71.7 551.2,71.7 550.7,69.4 546.8,69.4"/><polygon points="586.2,71.7 590.2,71.7 589.6,69.4 585.7,69.4"/><polygon points="591.1,71.7 595,71.7 594.4,69.4 590.5,69.4"/><polygon points="560.8,71.8 576.6,71.8 576,69.4 560.3,69.4"/><polygon points="568.2,73.6 568.8,73.6 567.5,67.6 566.9,67.6"/><polygon points="569.4,73.6 570,73.6 568.7,67.6 568,67.6"/><polygon points="604.7,71.9 620.5,71.9 619.7,69.2 603.9,69.2"/><polygon points="630.1,71.7 634,71.7 633.3,69.4 629.3,69.4"/><polygon points="634.9,71.7 638.9,71.7 638.1,69.4 634.1,69.4"/><polygon points="673.9,71.7 677.9,71.7 676.9,69.4 673,69.4"/><polygon points="678.8,71.7 682.7,71.7 681.8,69.4 677.8,69.4"/><polygon points="648.5,71.8 664.3,71.8 663.4,69.4 647.7,69.4"/><polygon points="656.2,73.6 656.8,73.6 654.6,67.6 654,67.6"/><polygon points="657.4,73.6 658,73.6 655.7,67.6 655.1,67.6"/><polygon points="692.5,71.9 708.2,71.9 707,69.2 691.3,69.2"/><polygon points="717.8,71.7 721.7,71.7 720.6,69.4 716.7,69.4"/><polygon points="722.6,71.7 726.6,71.7 725.4,69.4 721.5,69.4"/><polygon points="736.3,71.8 744.1,71.8 742.9,69.4 735,69.4"/><polygon points="744.2,73.6 744.8,73.6 741.7,67.6 741.1,67.6"/><polygon points="163.1,10.8 711.9,10.8 711.4,10 163.6,10"/><polygon points="178.5,11.3 182.1,11.3 183,9.5 179.5,9.5"/><polygon points="182.8,11.3 186.4,11.3 187.3,9.5 183.8,9.5"/><polygon points="162.8,11.4 169.9,11.4 170.9,9.4 163.9,9.4"/><polygon points="162.3,12.8 162.8,12.8 165.4,8 164.8,8"/><polygon points="194.9,11.5 209.1,11.5 210,9.3 196,9.3"/><polygon points="217.8,11.3 221.3,11.3 222.1,9.5 218.6,9.5"/><polygon points="222.1,11.3 225.6,11.3 226.4,9.5 222.9,9.5"/><polygon points="257,11.3 260.5,11.3 261.2,9.5 257.7,9.5"/><polygon points="261.3,11.3 264.9,11.3 265.5,9.5 262,9.5"/><polygon points="234.2,11.4 248.4,11.4 249.1,9.4 235,9.4"/><polygon points="240,12.8 240.5,12.8 242.3,8 241.8,8"/><polygon points="241,12.8 241.5,12.8 243.4,8 242.8,8"/><polygon points="273.4,11.5 287.6,11.5 288.2,9.3 274.1,9.3"/><polygon points="296.2,11.3 299.8,11.3 300.3,9.5 296.8,9.5"/><polygon points="300.6,11.3 304.1,11.3 304.6,9.5 301.1,9.5"/><polygon points="335.5,11.3 339,11.3 339.4,9.5 335.9,9.5"/><polygon points="339.8,11.3 343.3,11.3 343.7,9.5 340.2,9.5"/><polygon points="312.7,11.4 326.8,11.4 327.3,9.4 313.2,9.4"/><polygon points="318.7,12.8 319.2,12.8 320.3,8 319.8,8"/><polygon points="319.7,12.8 320.2,12.8 321.3,8 320.8,8"/><polygon points="351.9,11.5 366.1,11.5 366.4,9.3 352.3,9.3"/><polygon points="374.7,11.3 378.2,11.3 378.5,9.5 375,9.5"/><polygon points="379,11.3 382.6,11.3 382.8,9.5 379.3,9.5"/><polygon points="414,11.3 417.5,11.3 417.6,9.5 414,9.5"/><polygon points="418.3,11.3 421.8,11.3 421.9,9.5 418.3,9.5"/><polygon points="391.2,11.4 405.3,11.4 405.4,9.4 391.4,9.4"/><polygon points="397.4,12.8 397.9,12.8 398.3,8 397.7,8"/><polygon points="398.4,12.8 398.9,12.8 399.3,8 398.8,8"/><polygon points="430.4,11.5 444.6,11.5 444.5,9.3 430.5,9.3"/><polygon points="453.2,11.3 456.7,11.3 456.7,9.5 453.1,9.5"/><polygon points="457.5,11.3 461,11.3 461,9.5 457.4,9.5"/><polygon points="492.4,11.3 496,11.3 495.8,9.5 492.2,9.5"/><polygon points="496.7,11.3 500.3,11.3 500.1,9.5 496.5,9.5"/><polygon points="469.7,11.4 483.8,11.4 483.6,9.4 469.6,9.4"/><polygon points="476,12.8 476.6,12.8 476.3,8 475.7,8"/><polygon points="477.1,12.8 477.6,12.8 477.3,8 476.7,8"/><polygon points="508.9,11.5 523.1,11.5 522.7,9.3 508.6,9.3"/><polygon points="531.7,11.3 535.2,11.3 534.9,9.5 531.3,9.5"/><polygon points="536,11.3 539.5,11.3 539.2,9.5 535.6,9.5"/><polygon points="570.9,11.3 574.4,11.3 574,9.5 570.4,9.5"/><polygon points="575.2,11.3 578.7,11.3 578.3,9.5 574.7,9.5"/><polygon points="548.2,11.4 562.3,11.4 561.8,9.4 547.7,9.4"/><polygon points="554.7,12.8 555.3,12.8 554.2,8 553.7,8"/><polygon points="555.8,12.8 556.3,12.8 555.3,8 554.7,8"/><polygon points="587.4,11.5 601.6,11.5 600.9,9.3 586.8,9.3"/><polygon points="610.1,11.3 613.7,11.3 613.1,9.5 609.5,9.5"/><polygon points="614.5,11.3 618,11.3 617.4,9.5 613.8,9.5"/><polygon points="649.4,11.3 652.9,11.3 652.1,9.5 648.6,9.5"/><polygon points="653.7,11.3 657.2,11.3 656.4,9.5 652.9,9.5"/><polygon points="626.6,11.4 640.8,11.4 640,9.4 625.9,9.4"/><polygon points="633.4,12.8 634,12.8 632.2,8 631.7,8"/><polygon points="634.5,12.8 635,12.8 633.2,8 632.7,8"/><polygon points="665.9,11.5 680.1,11.5 679,9.3 665,9.3"/><polygon points="688.6,11.3 692.1,11.3 691.2,9.5 687.7,9.5"/><polygon points="692.9,11.3 696.5,11.3 695.5,9.5 692,9.5"/><polygon points="705.1,11.4 712.2,11.4 711.2,9.4 704.1,9.4"/><polygon points="712.1,12.8 712.7,12.8 710.2,8 709.6,8"/><polygon points="96.4,382.1 98.5,382.1 248.4,-5.3 247.1,-5.3"/><polygon points="94.7,382.1 100.1,382.1 105.6,367.9 100.3,367.9"/><polygon points="107.2,351.2 111.7,351.2 114.2,344.5 109.8,344.5"/><polygon points="110.4,343 114.8,343 117.3,336.5 113,336.5"/><polygon points="134,282.5 138.1,282.5 140.3,276.9 136.2,276.9"/><polygon points="136.7,275.6 140.8,275.6 142.9,270.1 138.9,270.1"/><polygon points="118.9,320.9 123.4,320.9 132.8,296.7 128.4,296.7"/><polygon points="120,310 130.9,310 131.3,309 120.3,309"/><polygon points="120.7,308.2 131.6,308.2 131.9,307.3 121,307.3"/><polygon points="143.7,256.9 148.4,256.9 156.3,236.2 151.8,236.2"/><polygon points="156.9,224.1 160.6,224.1 162.5,219.3 158.8,219.3"/><polygon points="159.2,218.2 162.9,218.2 164.7,213.5 161,213.5"/><polygon points="176.5,173.8 180,173.8 181.6,169.6 178.2,169.6"/><polygon points="178.5,168.7 182,168.7 183.6,164.5 180.1,164.5"/><polygon points="165.4,202.1 169.2,202.1 176.1,184.2 172.3,184.2"/><polygon points="165.7,194 175.1,194 175.4,193.3 166,193.3"/><polygon points="166.2,192.8 175.6,192.8 175.9,192.1 166.5,192.1"/><polygon points="183.7,154.7 187.7,154.7 193.7,139.1 189.8,139.1"/><polygon points="193.6,130 196.9,130 198.3,126.3 195.1,126.3"/><polygon points="195.4,125.5 198.6,125.5 200,121.9 196.8,121.9"/><polygon points="208.7,91.5 211.7,91.5 213,88.3 209.9,88.3"/><polygon points="210.2,87.6 213.3,87.6 214.5,84.4 211.4,84.4"/><polygon points="200.1,113.2 203.5,113.2 208.7,99.6 205.4,99.6"/><polygon points="200.1,107.1 208.3,107.1 208.5,106.5 200.3,106.5"/><polygon points="200.4,106.1 208.6,106.1 208.8,105.6 200.7,105.6"/><polygon points="214.2,76.7 217.7,76.7 222.4,64.6 218.9,64.6"/><polygon points="222,57.4 224.9,57.4 226,54.6 223.1,54.6"/><polygon points="223.3,53.9 226.2,53.9 227.3,51.1 224.4,51.1"/><polygon points="233.8,27.1 236.6,27.1 237.6,24.5 234.8,24.5"/><polygon points="235,23.9 237.8,23.9 238.8,21.4 236,21.4"/><polygon points="227,44.3 230,44.3 234.2,33.5 231.2,33.5"/><polygon points="226.8,39.4 234,39.4 234.2,39 226.9,39"/><polygon points="227.1,38.6 234.3,38.6 234.5,38.2 227.2,38.2"/><polygon points="238.2,15.3 241.3,15.3 245.1,5.6 242,5.6"/><polygon points="244.5,-0.2 247.1,-0.2 248,-2.5 245.4,-2.5"/><polygon points="245.6,-3 248.2,-3 249,-5.3 246.5,-5.3"/><polygon points="231.5,382.1 233.7,382.1 324.3,-5.3 323.1,-5.3"/><polygon points="229.9,382.1 235.3,382.1 238.6,367.9 233.3,367.9"/><polygon points="237.6,351.2 242.1,351.2 243.6,344.5 239.2,344.5"/><polygon points="239.6,343 244,343 245.5,336.5 241.1,336.5"/><polygon points="254,282.5 258,282.5 259.4,276.9 255.3,276.9"/><polygon points="255.6,275.6 259.6,275.6 260.9,270.1 256.9,270.1"/><polygon points="244.7,320.9 249.2,320.9 254.9,296.7 250.5,296.7"/><polygon points="244.1,310 255,310 255.2,309 244.3,309"/><polygon points="244.5,308.2 255.4,308.2 255.6,307.3 244.7,307.3"/><polygon points="259.7,256.9 264.4,256.9 269.2,236.2 264.6,236.2"/><polygon points="267.9,224.1 271.6,224.1 272.8,219.3 269,219.3"/><polygon points="269.3,218.2 273,218.2 274.1,213.5 270.4,213.5"/><polygon points="279.8,173.8 283.3,173.8 284.3,169.6 280.8,169.6"/><polygon points="281,168.7 284.5,168.7 285.5,164.5 282,164.5"/><polygon points="273,202.1 276.9,202.1 281,184.2 277.2,184.2"/><polygon points="272.1,194 281.5,194 281.7,193.3 272.3,193.3"/><polygon points="272.4,192.8 281.8,192.8 281.9,192.1 272.6,192.1"/><polygon points="284.1,154.7 288.1,154.7 291.7,139.1 287.8,139.1"/><polygon points="290.2,130 293.5,130 294.4,126.3 291.1,126.3"/><polygon points="291.3,125.5 294.6,125.5 295.4,121.9 292.2,121.9"/><polygon points="299.4,91.5 302.5,91.5 303.2,88.3 300.2,88.3"/><polygon points="300.3,87.6 303.4,87.6 304.1,84.4 301.1,84.4"/><polygon points="294.1,113.2 297.5,113.2 300.7,99.6 297.4,99.6"/><polygon points="293.2,107.1 301.4,107.1 301.5,106.5 293.3,106.5"/><polygon points="293.4,106.1 301.6,106.1 301.7,105.6 293.5,105.6"/><polygon points="302.6,76.7 306.2,76.7 309,64.6 305.5,64.6"/><polygon points="307.5,57.4 310.4,57.4 311.1,54.6 308.2,54.6"/><polygon points="308.3,53.9 311.2,53.9 311.9,51.1 309,51.1"/><polygon points="314.7,27.1 317.5,27.1 318,24.5 315.3,24.5"/><polygon points="315.4,23.9 318.2,23.9 318.8,21.4 316.1,21.4"/><polygon points="310.5,44.3 313.5,44.3 316,33.5 313.1,33.5"/><polygon points="309.5,39.4 316.8,39.4 316.9,39 309.6,39"/><polygon points="309.7,38.6 317,38.6 317.1,38.2 309.8,38.2"/><polygon points="317.3,15.3 320.4,15.3 322.7,5.6 319.6,5.6"/><polygon points="321.2,-0.2 323.8,-0.2 324.3,-2.5 321.7,-2.5"/><polygon points="321.8,-3 324.4,-3 325,-5.3 322.4,-5.3"/><polygon points="366.6,382.1 368.8,382.1 400.2,-5.3 399,-5.3"/><polygon points="365,382.1 370.4,382.1 371.6,367.9 366.2,367.9"/><polygon points="368.1,351.2 372.5,351.2 373,344.5 368.6,344.5"/><polygon points="368.7,343 373.1,343 373.7,336.5 369.3,336.5"/><polygon points="373.9,282.5 378,282.5 378.4,276.9 374.4,276.9"/><polygon points="374.5,275.6 378.5,275.6 379,270.1 374.9,270.1"/><polygon points="370.5,320.9 375,320.9 377,296.7 372.6,296.7"/><polygon points="368.2,310 379.1,310 379.2,309 368.3,309"/><polygon points="368.4,308.2 379.3,308.2 379.3,307.3 368.4,307.3"/><polygon points="375.7,256.9 380.4,256.9 382,236.2 377.5,236.2"/><polygon points="378.8,224.1 382.6,224.1 383,219.3 379.3,219.3"/><polygon points="379.3,218.2 383.1,218.2 383.5,213.5 379.8,213.5"/><polygon points="383.1,173.8 386.6,173.8 387,169.6 383.5,169.6"/><polygon points="383.6,168.7 387,168.7 387.4,164.5 383.9,164.5"/><polygon points="380.6,202.1 384.5,202.1 385.9,184.2 382.1,184.2"/><polygon points="378.5,194 387.9,194 387.9,193.3 378.6,193.3"/><polygon points="378.6,192.8 388,192.8 388,192.1 378.7,192.1"/><polygon points="384.4,154.7 388.5,154.7 389.7,139.1 385.8,139.1"/><polygon points="386.8,130 390.1,130 390.4,126.3 387.2,126.3"/><polygon points="387.2,125.5 390.5,125.5 390.8,121.9 387.5,121.9"/><polygon points="390.1,91.5 393.2,91.5 393.5,88.3 390.4,88.3"/><polygon points="390.4,87.6 393.5,87.6 393.8,84.4 390.7,84.4"/><polygon points="388.2,113.2 391.6,113.2 392.6,99.6 389.3,99.6"/><polygon points="386.3,107.1 394.5,107.1 394.5,106.5 386.3,106.5"/><polygon points="386.4,106.1 394.5,106.1 394.6,105.6 386.4,105.6"/><polygon points="391.1,76.7 394.6,76.7 395.6,64.6 392.1,64.6"/><polygon points="393,57.4 395.9,57.4 396.1,54.6 393.2,54.6"/><polygon points="393.3,53.9 396.2,53.9 396.4,51.1 393.5,51.1"/><polygon points="395.6,27.1 398.3,27.1 398.5,24.5 395.8,24.5"/><polygon points="395.9,23.9 398.6,23.9 398.8,21.4 396.1,21.4"/><polygon points="394,44.3 397,44.3 397.9,33.5 395,33.5"/><polygon points="392.3,39.4 399.6,39.4 399.6,39 392.3,39"/><polygon points="392.4,38.6 399.6,38.6 399.7,38.2 392.4,38.2"/><polygon points="396.3,15.3 399.5,15.3 400.3,5.6 397.2,5.6"/><polygon points="397.9,-0.2 400.5,-0.2 400.7,-2.5 398.1,-2.5"/><polygon points="398.1,-3 400.7,-3 400.9,-5.3 398.3,-5.3"/><polygon points="501.8,382.1 503.9,382.1 476.2,-5.3 475,-5.3"/><polygon points="500.2,382.1 505.6,382.1 504.5,367.9 499.2,367.9"/><polygon points="498.5,351.2 502.9,351.2 502.4,344.5 498,344.5"/><polygon points="497.9,343 502.3,343 501.8,336.5 497.5,336.5"/><polygon points="493.8,282.5 497.9,282.5 497.5,276.9 493.4,276.9"/><polygon points="493.3,275.6 497.4,275.6 497,270.1 493,270.1"/><polygon points="496.3,320.9 500.8,320.9 499,296.7 494.6,296.7"/><polygon points="492.3,310 503.2,310 503.2,309 492.3,309"/><polygon points="492.2,308.2 503.1,308.2 503,307.3 492.1,307.3"/><polygon points="491.7,256.9 496.4,256.9 494.8,236.2 490.3,236.2"/><polygon points="489.8,224.1 493.6,224.1 493.3,219.3 489.5,219.3"/><polygon points="489.4,218.2 493.2,218.2 492.8,213.5 489.1,213.5"/><polygon points="486.4,173.8 489.9,173.8 489.6,169.6 486.1,169.6"/><polygon points="486.1,168.7 489.6,168.7 489.3,164.5 485.8,164.5"/><polygon points="488.2,202.1 492.1,202.1 490.8,184.2 487,184.2"/><polygon points="484.9,194 494.3,194 494.2,193.3 484.9,193.3"/><polygon points="484.8,192.8 494.2,192.8 494.1,192.1 484.8,192.1"/><polygon points="484.8,154.7 488.8,154.7 487.7,139.1 483.8,139.1"/><polygon points="483.5,130 486.7,130 486.5,126.3 483.2,126.3"/><polygon points="483.1,125.5 486.4,125.5 486.1,121.9 482.9,121.9"/><polygon points="480.8,91.5 483.9,91.5 483.7,88.3 480.6,88.3"/><polygon points="480.6,87.6 483.6,87.6 483.4,84.4 480.4,84.4"/><polygon points="482.2,113.2 485.6,113.2 484.6,99.6 481.3,99.6"/><polygon points="479.4,107.1 487.6,107.1 487.5,106.5 479.3,106.5"/><polygon points="479.3,106.1 487.5,106.1 487.5,105.6 479.3,105.6"/><polygon points="479.6,76.7 483.1,76.7 482.2,64.6 478.8,64.6"/><polygon points="478.5,57.4 481.4,57.4 481.2,54.6 478.3,54.6"/><polygon points="478.3,53.9 481.2,53.9 481,51.1 478.1,51.1"/><polygon points="476.5,27.1 479.2,27.1 479,24.5 476.3,24.5"/><polygon points="476.3,23.9 479,23.9 478.8,21.4 476.1,21.4"/><polygon points="477.6,44.3 480.6,44.3 479.8,33.5 476.8,33.5"/><polygon points="475.1,39.4 482.4,39.4 482.3,39 475,39"/><polygon points="475,38.6 482.3,38.6 482.3,38.2 475,38.2"/><polygon points="475.4,15.3 478.6,15.3 477.9,5.6 474.8,5.6"/><polygon points="474.6,-0.2 477.2,-0.2 477.1,-2.5 474.5,-2.5"/><polygon points="474.4,-3 477,-3 476.9,-5.3 474.3,-5.3"/><polygon points="636.9,382.1 639.1,382.1 552.1,-5.3 550.9,-5.3"/><polygon points="635.3,382.1 640.7,382.1 637.5,367.9 632.2,367.9"/><polygon points="628.9,351.2 633.3,351.2 631.8,344.5 627.4,344.5"/><polygon points="627.1,343 631.5,343 630,336.5 625.6,336.5"/><polygon points="613.7,282.5 617.8,282.5 616.5,276.9 612.5,276.9"/><polygon points="612.2,275.6 616.3,275.6 615,270.1 611,270.1"/><polygon points="622.1,320.9 626.6,320.9 621.1,296.7 616.7,296.7"/><polygon points="616.4,310 627.4,310 627.1,309 616.2,309"/><polygon points="616.1,308.2 627,308.2 626.7,307.3 615.9,307.3"/><polygon points="607.7,256.9 612.4,256.9 607.7,236.2 603.2,236.2"/><polygon points="600.8,224.1 604.6,224.1 603.5,219.3 599.8,219.3"/><polygon points="599.5,218.2 603.3,218.2 602.2,213.5 598.5,213.5"/><polygon points="589.7,173.8 593.2,173.8 592.3,169.6 588.8,169.6"/><polygon points="588.6,168.7 592.1,168.7 591.2,164.5 587.7,164.5"/><polygon points="595.9,202.1 599.7,202.1 595.7,184.2 591.9,184.2"/><polygon points="591.3,194 600.7,194 600.5,193.3 591.2,193.3"/><polygon points="591,192.8 600.4,192.8 600.2,192.1 590.9,192.1"/><polygon points="585.2,154.7 589.2,154.7 585.7,139.1 581.8,139.1"/><polygon points="580.1,130 583.3,130 582.5,126.3 579.3,126.3"/><polygon points="579.1,125.5 582.3,125.5 581.5,121.9 578.3,121.9"/><polygon points="571.6,91.5 574.7,91.5 573.9,88.3 570.9,88.3"/><polygon points="570.7,87.6 573.8,87.6 573,84.4 570,84.4"/><polygon points="576.3,113.2 579.7,113.2 576.6,99.6 573.3,99.6"/><polygon points="572.5,107.1 580.7,107.1 580.6,106.5 572.4,106.5"/><polygon points="572.3,106.1 580.5,106.1 580.3,105.6 572.2,105.6"/><polygon points="568,76.7 571.6,76.7 568.8,64.6 565.4,64.6"/><polygon points="564.1,57.4 567,57.4 566.3,54.6 563.4,54.6"/><polygon points="563.3,53.9 566.2,53.9 565.5,51.1 562.7,51.1"/><polygon points="557.4,27.1 560.1,27.1 559.5,24.5 556.8,24.5"/><polygon points="556.7,23.9 559.4,23.9 558.8,21.4 556.1,21.4"/><polygon points="561.1,44.3 564.1,44.3 561.6,33.5 558.7,33.5"/><polygon points="557.8,39.4 565.1,39.4 565,39 557.7,39"/><polygon points="557.7,38.6 564.9,38.6 564.8,38.2 557.6,38.2"/><polygon points="554.5,15.3 557.7,15.3 555.5,5.6 552.4,5.6"/><polygon points="551.3,-0.2 553.9,-0.2 553.4,-2.5 550.8,-2.5"/><polygon points="550.7,-3 553.3,-3 552.8,-5.3 550.2,-5.3"/><polygon points="772.1,382.1 774.2,382.1 628,-5.3 626.8,-5.3"/><polygon points="770.4,382.1 775.8,382.1 770.5,367.9 765.1,367.9"/><polygon points="759.3,351.2 763.7,351.2 761.2,344.5 756.8,344.5"/><polygon points="756.3,343 760.6,343 758.2,336.5 753.8,336.5"/><polygon points="733.7,282.5 737.7,282.5 735.6,276.9 731.5,276.9"/><polygon points="731.1,275.6 735.1,275.6 733,270.1 729,270.1"/><polygon points="747.9,320.9 752.4,320.9 743.2,296.7 738.8,296.7"/><polygon points="740.5,310 751.5,310 751.1,309 740.2,309"/><polygon points="739.9,308.2 750.8,308.2 750.4,307.3 739.6,307.3"/><polygon points="723.7,256.9 728.4,256.9 720.5,236.2 716,236.2"/><polygon points="711.8,224.1 715.6,224.1 713.8,219.3 710,219.3"/><polygon points="709.6,218.2 713.4,218.2 711.6,213.5 707.8,213.5"/><polygon points="693,173.8 696.5,173.8 695,169.6 691.5,169.6"/><polygon points="691.1,168.7 694.6,168.7 693,164.5 689.6,164.5"/><polygon points="703.5,202.1 707.4,202.1 700.6,184.2 696.8,184.2"/><polygon points="697.7,194 707.1,194 706.8,193.3 697.5,193.3"/><polygon points="697.2,192.8 706.6,192.8 706.3,192.1 697,192.1"/><polygon points="685.6,154.7 689.6,154.7 683.7,139.1 679.8,139.1"/><polygon points="676.7,130 680,130 678.6,126.3 675.3,126.3"/><polygon points="675,125.5 678.3,125.5 676.9,121.9 673.6,121.9"/><polygon points="662.3,91.5 665.4,91.5 664.2,88.3 661.1,88.3"/><polygon points="660.8,87.6 663.9,87.6 662.7,84.4 659.6,84.4"/><polygon points="670.3,113.2 673.7,113.2 668.5,99.6 665.2,99.6"/><polygon points="665.6,107.1 673.8,107.1 673.6,106.5 665.4,106.5"/><polygon points="665.2,106.1 673.4,106.1 673.2,105.6 665,105.6"/><polygon points="656.5,76.7 660,76.7 655.5,64.6 652,64.6"/><polygon points="649.6,57.4 652.5,57.4 651.4,54.6 648.5,54.6"/><polygon points="648.3,53.9 651.2,53.9 650.1,51.1 647.2,51.1"/><polygon points="638.2,27.1 641,27.1 640,24.5 637.3,24.5"/><polygon points="637.1,23.9 639.8,23.9 638.8,21.4 636.1,21.4"/><polygon points="644.6,44.3 647.6,44.3 643.5,33.5 640.5,33.5"/><polygon points="640.6,39.4 647.9,39.4 647.7,39 640.5,39"/><polygon points="640.3,38.6 647.6,38.6 647.4,38.2 640.2,38.2"/><polygon points="633.6,15.3 636.8,15.3 633.1,5.6 630,5.6"/><polygon points="628.1,-0.2 630.7,-0.2 629.8,-2.5 627.2,-2.5"/><polygon points="627,-3 629.6,-3 628.7,-5.3 626.1,-5.3"/></g>
<text x="156.4" y="241.8" font-family="Liberation Mono, monospace" font-style="italic" font-size="4.5" fill="#a6a8a6">1METER</text>
<text x="194" y="143.4" font-family="Liberation Mono, monospace" font-style="italic" font-size="4.5" fill="#a6a8a6">1METER</text>
<text x="222.8" y="67.9" font-family="Liberation Mono, monospace" font-style="italic" font-size="4.5" fill="#a6a8a6">1METER</text>
<text x="245.6" y="8.3" font-family="Liberation Mono, monospace" font-style="italic" font-size="4.5" fill="#a6a8a6">1METER</text>
<text x="270.1" y="241.8" font-family="Liberation Mono, monospace" font-style="italic" font-size="4.5" fill="#a6a8a6">1METER</text>
<text x="292.7" y="143.4" font-family="Liberation Mono, monospace" font-style="italic" font-size="4.5" fill="#a6a8a6">1METER</text>
<text x="310" y="67.9" font-family="Liberation Mono, monospace" font-style="italic" font-size="4.5" fill="#a6a8a6">1METER</text>
<text x="323.6" y="8.3" font-family="Liberation Mono, monospace" font-style="italic" font-size="4.5" fill="#a6a8a6">1METER</text>
<text x="383.8" y="241.8" font-family="Liberation Mono, monospace" font-style="italic" font-size="4.5" fill="#a6a8a6">1METER</text>
<text x="391.3" y="143.4" font-family="Liberation Mono, monospace" font-style="italic" font-size="4.5" fill="#a6a8a6">1METER</text>
<text x="397.1" y="67.9" font-family="Liberation Mono, monospace" font-style="italic" font-size="4.5" fill="#a6a8a6">1METER</text>
<text x="401.6" y="8.3" font-family="Liberation Mono, monospace" font-style="italic" font-size="4.5" fill="#a6a8a6">1METER</text>
<text x="497.5" y="241.8" font-family="Liberation Mono, monospace" font-style="italic" font-size="4.5" fill="#a6a8a6">1METER</text>
<text x="490" y="143.4" font-family="Liberation Mono, monospace" font-style="italic" font-size="4.5" fill="#a6a8a6">1METER</text>
<text x="484.2" y="67.9" font-family="Liberation Mono, monospace" font-style="italic" font-size="4.5" fill="#a6a8a6">1METER</text>
<text x="479.6" y="8.3" font-family="Liberation Mono, monospace" font-style="italic" font-size="4.5" fill="#a6a8a6">1METER</text>
<text x="611.2" y="241.8" font-family="Liberation Mono, monospace" font-style="italic" font-size="4.5" fill="#a6a8a6">1METER</text>
<text x="588.6" y="143.4" font-family="Liberation Mono, monospace" font-style="italic" font-size="4.5" fill="#a6a8a6">1METER</text>
<text x="571.3" y="67.9" font-family="Liberation Mono, monospace" font-style="italic" font-size="4.5" fill="#a6a8a6">1METER</text>
<text x="557.6" y="8.3" font-family="Liberation Mono, monospace" font-style="italic" font-size="4.5" fill="#a6a8a6">1METER</text>
<text x="724.9" y="241.8" font-family="Liberation Mono, monospace" font-style="italic" font-size="4.5" fill="#a6a8a6">1METER</text>
<text x="687.3" y="143.4" font-family="Liberation Mono, monospace" font-style="italic" font-size="4.5" fill="#a6a8a6">1METER</text>
<text x="658.5" y="67.9" font-family="Liberation Mono, monospace" font-style="italic" font-size="4.5" fill="#a6a8a6">1METER</text>
<text x="635.6" y="8.3" font-family="Liberation Mono, monospace" font-style="italic" font-size="4.5" fill="#a6a8a6">1METER</text>
</g>
<polygon points="172,0 247,0 113.7,344 0,344 0,332" fill="#c1c4c8"/>
<polygon points="172,0 183,0 7.8,344 -7.2,344" fill="#d6d8db" filter="url(#gb1)"/>
<clipPath id="lw"><polygon points="183,0 247,0 113.7,344 4.8,344"/></clipPath>
<path d="M234.2 0L91.9 344M221.4 0L70.1 344M208.6 0L48.4 344M195.8 0L26.6 344M285.6 -99.6l-160 -96M282.3 -91.1l-160 -96M278.9 -82.3l-160 -96M275.3 -73l-160 -96M271.6 -63.4l-160 -96M267.7 -53.3l-160 -96M263.6 -42.7l-160 -96M259.3 -31.6l-160 -96M254.8 -20l-160 -96M250 -7.8l-160 -96M245 5.1l-160 -95.8M239.8 18.6l-160 -95.3M234.3 32.9l-160 -94.7M228.4 48l-160 -94.2M222.2 63.9l-160 -93.6M215.7 80.9l-160 -92.9M208.7 98.8l-160 -92.2M201.3 117.9l-160 -91.5M193.4 138.3l-160 -88.3M185 160l-160 -83M176 183.3l-160 -77.5M166.3 208.2l-160 -70.8M155.9 235.1l-160 -56.4M144.7 264l-160 -34.9M132.5 295.4l-160 -12.9M119.3 329.4l-160 10.7M105 366.4l-160 25.6M89.3 406.8l-160 25.6M72.1 451.3l-160 25.6M53.1 500.2l-160 25.6M32.1 554.5l-160 25.6M8.6 615.1l-160 25.6M-17.7 682.9l-160 25.6M-47.4 759.6l-160 25.6M-81.2 846.8l-160 25.6M-120.1 947l-160 25.6M-165.1 1063.3l-160 25.6M-218.1 1199.8l-160 25.6" stroke="#75787d" stroke-opacity="0.7" stroke-width="1.1" fill="none" clip-path="url(#lw)" filter="url(#gb0)"/>
<polygon points="543.5,0 565,0 654.3,344 634,344 612.5,308.5" fill="#6c89bc" filter="url(#gb1)"/>
<polygon points="565,0 610,0 737.1,344 654.3,344" fill="#78869e"/>
<clipPath id="shs"><polygon points="543.5,0 565,0 654.3,344 634,344 612.5,308.5"/></clipPath>
<g fill="#4f628a" clip-path="url(#shs)"><polygon points="543.6,383.4 909,383.4 907.6,380.8 543.3,380.8"/><polygon points="558.7,385.3 583.1,385.3 582.1,378.9 557.8,378.9"/><polygon points="597.9,384.8 604,384.8 603,379.4 597,379.4"/><polygon points="605.4,384.8 611.5,384.8 610.5,379.4 604.4,379.4"/><polygon points="665.7,384.8 671.8,384.8 670.4,379.4 664.3,379.4"/><polygon points="673.2,384.8 679.3,384.8 677.8,379.4 671.8,379.4"/><polygon points="626.5,385 650.9,385 649.5,379.2 625.2,379.2"/><polygon points="638.2,389.2 639.2,389.2 636,375.1 635.1,375.1"/><polygon points="640,389.2 641,389.2 637.8,375.1 636.8,375.1"/><polygon points="694.3,385.3 718.7,385.3 716.7,378.9 692.5,378.9"/><polygon points="733.5,384.8 739.6,384.8 737.8,379.4 731.7,379.4"/><polygon points="741,384.8 747.1,384.8 745.2,379.4 739.1,379.4"/><polygon points="801.3,384.8 807.4,384.8 805.1,379.4 799.1,379.4"/><polygon points="808.7,384.8 814.8,384.8 812.5,379.4 806.5,379.4"/><polygon points="762,385 786.4,385 784.2,379.2 759.9,379.2"/><polygon points="774.5,389.2 775.4,389.2 770.1,375.1 769.2,375.1"/><polygon points="776.2,389.2 777.2,389.2 771.9,375.1 770.9,375.1"/><polygon points="830,385.3 854.4,385.3 851.4,378.9 827.2,378.9"/><polygon points="869.1,384.8 875.2,384.8 872.5,379.4 866.4,379.4"/><polygon points="876.5,384.8 882.6,384.8 879.9,379.4 873.8,379.4"/><polygon points="897.6,385 909.8,385 906.8,379.2 894.6,379.2"/><polygon points="910.7,389.2 911.6,389.2 904.2,375.1 903.2,375.1"/><polygon points="527.7,247.3 837,247.3 836,245.5 527.5,245.5"/><polygon points="540.5,248.7 561.2,248.7 560.4,244.1 539.9,244.1"/><polygon points="573.7,248.4 578.9,248.4 578.2,244.5 573,244.5"/><polygon points="580,248.4 585.2,248.4 584.4,244.5 579.3,244.5"/><polygon points="631.1,248.4 636.2,248.4 635.2,244.5 630.1,244.5"/><polygon points="637.4,248.4 642.5,248.4 641.5,244.5 636.4,244.5"/><polygon points="597.8,248.5 618.5,248.5 617.5,244.3 597,244.3"/><polygon points="607.7,251.5 608.5,251.5 606.2,241.4 605.4,241.4"/><polygon points="609.2,251.5 610,251.5 607.7,241.4 606.9,241.4"/><polygon points="655.3,248.7 675.9,248.7 674.5,244.1 653.9,244.1"/><polygon points="688.4,248.4 693.6,248.4 692.3,244.5 687.1,244.5"/><polygon points="694.7,248.4 699.9,248.4 698.5,244.5 693.4,244.5"/><polygon points="745.8,248.4 750.9,248.4 749.3,244.5 744.2,244.5"/><polygon points="752.1,248.4 757.2,248.4 755.6,244.5 750.5,244.5"/><polygon points="712.6,248.5 733.2,248.5 731.6,244.3 711.1,244.3"/><polygon points="722.9,251.5 723.7,251.5 719.9,241.4 719.1,241.4"/><polygon points="724.4,251.5 725.2,251.5 721.3,241.4 720.6,241.4"/><polygon points="770,248.7 790.7,248.7 788.5,244.1 768,244.1"/><polygon points="803.1,248.4 808.3,248.4 806.4,244.5 801.2,244.5"/><polygon points="809.4,248.4 814.6,248.4 812.6,244.5 807.5,244.5"/><polygon points="827.3,248.5 837.6,248.5 835.4,244.3 825.1,244.3"/><polygon points="838,251.5 838.8,251.5 833.5,241.4 832.7,241.4"/><polygon points="516.1,147.5 784.2,147.5 783.5,146.1 516,146.1"/><polygon points="527.2,148.5 545.1,148.5 544.5,145.1 526.7,145.1"/><polygon points="556,148.3 560.4,148.3 559.9,145.3 555.4,145.3"/><polygon points="561.4,148.3 565.9,148.3 565.3,145.3 560.9,145.3"/><polygon points="605.7,148.3 610.1,148.3 609.4,145.3 604.9,145.3"/><polygon points="611.1,148.3 615.6,148.3 614.8,145.3 610.4,145.3"/><polygon points="576.9,148.4 594.8,148.4 594,145.2 576.2,145.2"/><polygon points="585.3,150.6 586,150.6 584.3,143 583.6,143"/><polygon points="586.6,150.6 587.3,150.6 585.6,143 584.9,143"/><polygon points="626.6,148.5 644.5,148.5 643.4,145.1 625.6,145.1"/><polygon points="655.4,148.3 659.8,148.3 658.9,145.3 654.4,145.3"/><polygon points="660.8,148.3 665.3,148.3 664.3,145.3 659.8,145.3"/><polygon points="705.1,148.3 709.5,148.3 708.3,145.3 703.9,145.3"/><polygon points="710.5,148.3 715,148.3 713.8,145.3 709.3,145.3"/><polygon points="676.3,148.4 694.2,148.4 693,145.2 675.1,145.2"/><polygon points="685.1,150.6 685.8,150.6 682.9,143 682.2,143"/><polygon points="686.4,150.6 687.1,150.6 684.2,143 683.5,143"/><polygon points="726.1,148.5 744,148.5 742.3,145.1 724.5,145.1"/><polygon points="754.8,148.3 759.2,148.3 757.8,145.3 753.4,145.3"/><polygon points="760.2,148.3 764.7,148.3 763.3,145.3 758.8,145.3"/><polygon points="775.7,148.4 784.6,148.4 783,145.2 774.1,145.2"/><polygon points="784.8,150.6 785.5,150.6 781.5,143 780.8,143"/><polygon points="507.2,71.1 743.8,71.1 743.2,70.1 507.1,70.1"/><polygon points="517,71.9 532.8,71.9 532.3,69.2 516.6,69.2"/><polygon points="542.4,71.7 546.3,71.7 545.9,69.4 542,69.4"/><polygon points="547.2,71.7 551.2,71.7 550.7,69.4 546.8,69.4"/><polygon points="586.2,71.7 590.2,71.7 589.6,69.4 585.7,69.4"/><polygon points="591.1,71.7 595,71.7 594.4,69.4 590.5,69.4"/><polygon points="560.8,71.8 576.6,71.8 576,69.4 560.3,69.4"/><polygon points="568.2,73.6 568.8,73.6 567.5,67.6 566.9,67.6"/><polygon points="569.4,73.6 570,73.6 568.7,67.6 568,67.6"/><polygon points="604.7,71.9 620.5,71.9 619.7,69.2 603.9,69.2"/><polygon points="630.1,71.7 634,71.7 633.3,69.4 629.3,69.4"/><polygon points="634.9,71.7 638.9,71.7 638.1,69.4 634.1,69.4"/><polygon points="673.9,71.7 677.9,71.7 676.9,69.4 673,69.4"/><polygon points="678.8,71.7 682.7,71.7 681.8,69.4 677.8,69.4"/><polygon points="648.5,71.8 664.3,71.8 663.4,69.4 647.7,69.4"/><polygon points="656.2,73.6 656.8,73.6 654.6,67.6 654,67.6"/><polygon points="657.4,73.6 658,73.6 655.7,67.6 655.1,67.6"/><polygon points="692.5,71.9 708.2,71.9 707,69.2 691.3,69.2"/><polygon points="717.8,71.7 721.7,71.7 720.6,69.4 716.7,69.4"/><polygon points="722.6,71.7 726.6,71.7 725.4,69.4 721.5,69.4"/><polygon points="736.3,71.8 744.1,71.8 742.9,69.4 735,69.4"/><polygon points="744.2,73.6 744.8,73.6 741.7,67.6 741.1,67.6"/><polygon points="500.2,10.8 711.9,10.8 711.4,10 500.1,10"/><polygon points="508.9,11.5 523.1,11.5 522.7,9.3 508.6,9.3"/><polygon points="531.7,11.3 535.2,11.3 534.9,9.5 531.3,9.5"/><polygon points="536,11.3 539.5,11.3 539.2,9.5 535.6,9.5"/><polygon points="570.9,11.3 574.4,11.3 574,9.5 570.4,9.5"/><polygon points="575.2,11.3 578.7,11.3 578.3,9.5 574.7,9.5"/><polygon points="548.2,11.4 562.3,11.4 561.8,9.4 547.7,9.4"/><polygon points="554.7,12.8 555.3,12.8 554.2,8 553.7,8"/><polygon points="555.8,12.8 556.3,12.8 555.3,8 554.7,8"/><polygon points="587.4,11.5 601.6,11.5 600.9,9.3 586.8,9.3"/><polygon points="610.1,11.3 613.7,11.3 613.1,9.5 609.5,9.5"/><polygon points="614.5,11.3 618,11.3 617.4,9.5 613.8,9.5"/><polygon points="649.4,11.3 652.9,11.3 652.1,9.5 648.6,9.5"/><polygon points="653.7,11.3 657.2,11.3 656.4,9.5 652.9,9.5"/><polygon points="626.6,11.4 640.8,11.4 640,9.4 625.9,9.4"/><polygon points="633.4,12.8 634,12.8 632.2,8 631.7,8"/><polygon points="634.5,12.8 635,12.8 633.2,8 632.7,8"/><polygon points="665.9,11.5 680.1,11.5 679,9.3 665,9.3"/><polygon points="688.6,11.3 692.1,11.3 691.2,9.5 687.7,9.5"/><polygon points="692.9,11.3 696.5,11.3 695.5,9.5 692,9.5"/><polygon points="705.1,11.4 712.2,11.4 711.2,9.4 704.1,9.4"/><polygon points="712.1,12.8 712.7,12.8 710.2,8 709.6,8"/><polygon points="636.9,382.1 639.1,382.1 552.1,-5.3 550.9,-5.3"/><polygon points="635.3,382.1 640.7,382.1 637.5,367.9 632.2,367.9"/><polygon points="628.9,351.2 633.3,351.2 631.8,344.5 627.4,344.5"/><polygon points="627.1,343 631.5,343 630,336.5 625.6,336.5"/><polygon points="613.7,282.5 617.8,282.5 616.5,276.9 612.5,276.9"/><polygon points="612.2,275.6 616.3,275.6 615,270.1 611,270.1"/><polygon points="622.1,320.9 626.6,320.9 621.1,296.7 616.7,296.7"/><polygon points="616.4,310 627.4,310 627.1,309 616.2,309"/><polygon points="616.1,308.2 627,308.2 626.7,307.3 615.9,307.3"/><polygon points="607.7,256.9 612.4,256.9 607.7,236.2 603.2,236.2"/><polygon points="600.8,224.1 604.6,224.1 603.5,219.3 599.8,219.3"/><polygon points="599.5,218.2 603.3,218.2 602.2,213.5 598.5,213.5"/><polygon points="589.7,173.8 593.2,173.8 592.3,169.6 588.8,169.6"/><polygon points="588.6,168.7 592.1,168.7 591.2,164.5 587.7,164.5"/><polygon points="595.9,202.1 599.7,202.1 595.7,184.2 591.9,184.2"/><polygon points="591.3,194 600.7,194 600.5,193.3 591.2,193.3"/><polygon points="591,192.8 600.4,192.8 600.2,192.1 590.9,192.1"/><polygon points="585.2,154.7 589.2,154.7 585.7,139.1 581.8,139.1"/><polygon points="580.1,130 583.3,130 582.5,126.3 579.3,126.3"/><polygon points="579.1,125.5 582.3,125.5 581.5,121.9 578.3,121.9"/><polygon points="571.6,91.5 574.7,91.5 573.9,88.3 570.9,88.3"/><polygon points="570.7,87.6 573.8,87.6 573,84.4 570,84.4"/><polygon points="576.3,113.2 579.7,113.2 576.6,99.6 573.3,99.6"/><polygon points="572.5,107.1 580.7,107.1 580.6,106.5 572.4,106.5"/><polygon points="572.3,106.1 580.5,106.1 580.3,105.6 572.2,105.6"/><polygon points="568,76.7 571.6,76.7 568.8,64.6 565.4,64.6"/><polygon points="564.1,57.4 567,57.4 566.3,54.6 563.4,54.6"/><polygon points="563.3,53.9 566.2,53.9 565.5,51.1 562.7,51.1"/><polygon points="557.4,27.1 560.1,27.1 559.5,24.5 556.8,24.5"/><polygon points="556.7,23.9 559.4,23.9 558.8,21.4 556.1,21.4"/><polygon points="561.1,44.3 564.1,44.3 561.6,33.5 558.7,33.5"/><polygon points="557.8,39.4 565.1,39.4 565,39 557.7,39"/><polygon points="557.7,38.6 564.9,38.6 564.8,38.2 557.6,38.2"/><polygon points="554.5,15.3 557.7,15.3 555.5,5.6 552.4,5.6"/><polygon points="551.3,-0.2 553.9,-0.2 553.4,-2.5 550.8,-2.5"/><polygon points="550.7,-3 553.3,-3 552.8,-5.3 550.2,-5.3"/></g>
<clipPath id="rwc"><polygon points="565,0 610,0 737.1,344 654.3,344"/></clipPath>
<path d="M574 0L670.9 344M583 0L687.4 344M592 0L704 344M601 0L720.5 344M539.1 -99.6l160 -96M541.3 -91.1l160 -96M543.6 -82.3l160 -96M546 -73l160 -96M548.5 -63.4l160 -96M551.2 -53.3l160 -96M553.9 -42.7l160 -96M556.8 -31.6l160 -96M559.8 -20l160 -96M563 -7.8l160 -96M566.3 5.1l160 -95.8M569.8 18.6l160 -95.3M573.5 32.9l160 -94.7M577.5 48l160 -94.2M581.6 63.9l160 -93.6M586 80.9l160 -92.9M590.7 98.8l160 -92.2M595.6 117.9l160 -91.5M600.9 138.3l160 -88.3M606.5 160l160 -83M612.6 183.3l160 -77.5M619.1 208.2l160 -70.8M626 235.1l160 -56.4M633.5 264l160 -34.9M641.7 295.4l160 -12.9M650.5 329.4l160 10.7M660.1 366.4l160 25.6M670.6 406.8l160 25.6M682.1 451.3l160 25.6M694.9 500.2l160 25.6M709 554.5l160 25.6M724.7 615.1l160 25.6M742.3 682.9l160 25.6M762.2 759.6l160 25.6M784.8 846.8l160 25.6M810.8 947l160 25.6M841 1063.3l160 25.6M876.5 1199.8l160 25.6" stroke="#4d586d" stroke-opacity="0.75" stroke-width="1.1" fill="none" clip-path="url(#rwc)" filter="url(#gb0)"/>
<path d="M429 81 C421 79.5 416.500 83 416.800 89 C417 95 421 97.5 426 98 C427 102 429 105 432 107 L432 82Z" fill="#6f8cc0" filter="url(#gb2)"/>
<rect x="427.800" y="75.79999999999995" width="19.600" height="33.700" rx="9.800" fill="url(#gcap)"/>
<circle cx="439.300" cy="85.79999999999995" r="6.500" fill="url(#gcaph)"/>
<path d="M427.900 88.39999999999998 Q437.600 101 447.300 88.39999999999998 L447.300 95.60000000000002 L427.900 95.60000000000002Z" fill="#17181b"/>
<path d="M436.300 95.60000000000002l1.300-2.400 1.300 2.400z" fill="#22b4e4"/>
</svg>

<!-- ===== Hierarchy ===== -->
<div class="abs" style="left:875px;top:73px;width:2px;height:945px;background:#191919"></div>
<div class="tabbar" style="left:877px;top:73px;width:611px">
<div class="tab" style="left:0;width:96px;border-top:2px solid #3a79bb;border-radius:2px 2px 0 0"><svg class="abs" style="left:8px;top:3px" width="12" height="10" viewBox="0 0 12 10"><path d="M0 1h1.500M3 1h9M2.500 5h1.500M5.500 5h6.500M2.500 9h1.500M5.500 9h6.500" stroke="#c4c4c4" stroke-width="1.300"/></svg><span class="t" style="left:23px;top:1px">Hierarchy</span></div>
<svg class="abs" style="left:576px;top:4px" width="10" height="11" viewBox="0 0 10 11"><rect x="0.600" y="5" width="8.800" height="5.400" rx="0.800" fill="none" stroke="#c4c4c4" stroke-width="1.200"/><path d="M2.600 5V3a2.200 2.200 0 0 1 4.400 0v0.600" fill="none" stroke="#c4c4c4" stroke-width="1.200"/></svg>
<svg class="abs" style="left:596px;top:3px" width="4" height="12" viewBox="0 0 4 12"><circle cx="2" cy="1.500" r="1.200" fill="#c4c4c4"/><circle cx="2" cy="6" r="1.200" fill="#c4c4c4"/><circle cx="2" cy="10.500" r="1.200" fill="#c4c4c4"/></svg>
</div>
<div class="tool" style="left:877px;top:92px;width:611px;height:21px;border-bottom:1px solid #232323">
<svg class="abs" style="left:7px;top:4px" width="12" height="12" viewBox="0 0 12 12"><path d="M6 0.500v11M0.500 6h11" stroke="#d2d2d2" stroke-width="1.500"/></svg><div class="arr" style="left:23px;top:8px;border-left-width:3.500px;border-right-width:3.500px;border-top-width:4px"></div>
<div class="fld" style="left:282px;top:2px;width:308px;height:16px;background:#2a2a2a"><svg class="abs" style="left:5px;top:3px" width="11" height="8" viewBox="0 0 11 8"><circle cx="3.200" cy="3.200" r="2.400" fill="none" stroke="#a0a0a0" stroke-width="1.100"/><path d="M5 5l2 2M7.500 2.500h3l-1.500 1.800z" stroke="#a0a0a0" stroke-width="1" fill="#a0a0a0"/></svg><span class="t" style="left:20px;top:-1px;color:#7a7a7a;font-size:11px">All</span></div>
<svg class="abs" style="left:592px;top:3px" width="14" height="14" viewBox="0 0 14 14"><rect x="0.600" y="0.600" width="12.800" height="12.800" rx="1.500" fill="none" stroke="#c4c4c4" stroke-width="1.100"/><rect x="2.600" y="7.400" width="4" height="4" fill="none" stroke="#c4c4c4"/><path d="M6.500 7.500l4.500-4.500M7.500 2.800h3.700v3.700" stroke="#c4c4c4" stroke-width="1.100" fill="none"/></svg>
</div>
<div class="panel" style="left:877px;top:113px;width:611px;height:519px">
<div class="abs" style="left:0;top:0;width:32px;height:519px;background:#333"></div>
<div class="abs" style="left:0;top:0;width:611px;height:16px;background:#3f3f3f"></div>
<div class="row" style="top:0;width:611px"><div class="tri-d" style="left:34px;top:5px"></div><svg class="abs" style="left:47px;top:1px" width="14" height="14" viewBox="0 0 14 14"><polygon points="7,0.300 12.900,3.600 12.900,10.400 7,13.700 1.100,10.400 1.100,3.600" fill="#e8e8e8"/><path d="M7 7V1.500M7 7l4.800 2.800M7 7L2.200 9.800" stroke="#3f3f3f" stroke-width="1.600"/><path d="M4.200 3.600L7 5.200l2.800-1.600M9.800 4v3.200l2 1.100M4.200 4v3.200l-2 1.100" stroke="#3f3f3f" stroke-width="0.900" fill="none"/></svg><span class="t b" style="left:65px;top:0;color:#dcdcdc;font-size:12.5px;letter-spacing:.65px">SampleScene*</span><svg class="abs" style="left:597px;top:2px" width="4" height="12" viewBox="0 0 4 12"><circle cx="2" cy="1.500" r="1.200" fill="#c4c4c4"/><circle cx="2" cy="6" r="1.200" fill="#c4c4c4"/><circle cx="2" cy="10.500" r="1.200" fill="#c4c4c4"/></svg></div>
<div class="row" style="top:16px;width:611px"><svg class="abs" style="left:60px;top:1px" width="14" height="14" viewBox="0 0 14 14"><path d="M7 0.800l5.600 2.800v6.800L7 13.200 1.400 10.400V3.600zM7 6.400v6.800M7 6.400l5.600-2.800M7 6.400L1.400 3.600" fill="none" stroke="#d0d0d0" stroke-width="1.100" stroke-linejoin="round"/></svg><span class="t" style="left:78px;top:0;color:#cdcdcd;letter-spacing:.5px">Main Camera</span></div>
<div class="row" style="top:32px;width:611px"><svg class="abs" style="left:60px;top:1px" width="14" height="14" viewBox="0 0 14 14"><path d="M7 0.800l5.600 2.800v6.800L7 13.200 1.400 10.400V3.600zM7 6.400v6.800M7 6.400l5.600-2.800M7 6.400L1.400 3.600" fill="none" stroke="#d0d0d0" stroke-width="1.100" stroke-linejoin="round"/></svg><span class="t" style="left:78px;top:0;color:#cdcdcd;letter-spacing:.5px">Directional Light</span></div>
<div class="row" style="top:48px;width:611px"><svg class="abs" style="left:60px;top:1px" width="14" height="14" viewBox="0 0 14 14"><path d="M7 0.800l5.600 2.800v6.800L7 13.200 1.400 10.400V3.600zM7 6.400v6.800M7 6.400l5.600-2.800M7 6.400L1.400 3.600" fill="none" stroke="#d0d0d0" stroke-width="1.100" stroke-linejoin="round"/></svg><span class="t" style="left:78px;top:0;color:#cdcdcd;letter-spacing:.5px">Plane</span></div>
<div class="row" style="top:64px;width:611px"><svg class="abs" style="left:60px;top:1px" width="14" height="14" viewBox="0 0 14 14"><path d="M7 0.800l5.600 2.800v6.800L7 13.200 1.400 10.400V3.600zM7 6.400v6.800M7 6.400l5.600-2.800M7 6.400L1.400 3.600" fill="none" stroke="#d0d0d0" stroke-width="1.100" stroke-linejoin="round"/></svg><span class="t" style="left:78px;top:0;color:#cdcdcd;letter-spacing:.5px">Cube</span></div>
<div class="row" style="top:80px;width:611px"><svg class="abs" style="left:60px;top:1px" width="14" height="14" viewBox="0 0 14 14"><path d="M7 0.800l5.600 2.800v6.800L7 13.200 1.400 10.400V3.600zM7 6.400v6.800M7 6.400l5.600-2.800M7 6.400L1.400 3.600" fill="none" stroke="#d0d0d0" stroke-width="1.100" stroke-linejoin="round"/></svg><span class="t" style="left:78px;top:0;color:#cdcdcd;letter-spacing:.5px">Cube (1)</span></div>
<div class="row" style="top:96px;width:611px"><svg class="abs" style="left:60px;top:1px" width="14" height="14" viewBox="0 0 14 14"><path d="M7 0.800l5.600 2.800v6.800L7 13.200 1.400 10.400V3.600zM7 6.400v6.800M7 6.400l5.600-2.800M7 6.400L1.400 3.600" fill="none" stroke="#d0d0d0" stroke-width="1.100" stroke-linejoin="round"/></svg><span class="t" style="left:78px;top:0;color:#cdcdcd;letter-spacing:.5px">Cube (2)</span></div>
<div class="row" style="top:112px;width:611px;background:#2c5d87"><div class="abs" style="left:0;top:0;width:32px;height:16px;background:rgba(255,255,255,.07)"></div><svg class="abs" style="left:2px;top:3px" width="14" height="10" viewBox="0 0 14 10"><path d="M0.600 5c1.800-3 3.900-4.200 6.400-4.200S11.600 2 13.400 5c-1.800 3-3.900 4.200-6.400 4.200S2.400 8 0.600 5z" fill="none" stroke="#6f8fad" stroke-width="1.100"/><circle cx="7" cy="5" r="2.100" fill="#6f8fad"/></svg><svg class="abs" style="left:18px;top:2px" width="12" height="13" viewBox="0 0 12 13"><path d="M2.500 7V2.200a0.900 0.900 0 0 1 1.800 0V6l4.800 1.200c1 .3 1.400.9 1.300 1.800l-.5 3.500H4.500L1.200 8.600c-.5-.9.500-1.700 1.300-1.600z" fill="#6f8fad"/></svg><div class="tri-d" style="left:49px;top:5px;border-top-color:#6d90b2;border-left-width:4.5px;border-right-width:4.5px"></div><svg class="abs" style="left:60px;top:1px" width="14" height="14" viewBox="0 0 14 14"><path d="M7 0.800l5.600 2.800v6.800L7 13.200 1.400 10.400V3.600zM7 6.400v6.800M7 6.400l5.600-2.800M7 6.400L1.400 3.600" fill="none" stroke="#e6e6e6" stroke-width="1.100" stroke-linejoin="round"/></svg><span class="t" style="left:78px;top:0;color:#fff">Player</span></div>
<div class="row" style="top:128px;width:611px"><svg class="abs" style="left:74px;top:1px" width="14" height="14" viewBox="0 0 14 14"><path d="M7 0.800l5.600 2.800v6.800L7 13.200 1.400 10.400V3.600zM7 6.400v6.800M7 6.400l5.600-2.800M7 6.400L1.400 3.600" fill="none" stroke="#d0d0d0" stroke-width="1.100" stroke-linejoin="round"/></svg><span class="t" style="left:92px;top:0;color:#cdcdcd">Visor</span></div>
</div>
<!-- ===== Project ===== -->
<div class="abs" style="left:877px;top:632px;width:611px;height:2px;background:#191919"></div>
<div class="tabbar" style="left:877px;top:634px;width:611px">
<div class="tab" style="left:0;width:82px"><svg class="abs" style="left:7px;top:4px" width="13" height="11" viewBox="0 0 13 11"><path d="M0.500 1.500a1 1 0 0 1 1-1h3.300l1.200 1.600h5.500a1 1 0 0 1 1 1v6.400a1 1 0 0 1-1 1h-10a1 1 0 0 1-1-1z" fill="#c4c4c4"/></svg><span class="t" style="left:24px">Project</span></div>
<svg class="abs" style="left:576px;top:4px" width="10" height="11" viewBox="0 0 10 11"><rect x="0.600" y="5" width="8.800" height="5.400" rx="0.800" fill="none" stroke="#c4c4c4" stroke-width="1.200"/><path d="M2.600 5V3a2.200 2.200 0 0 1 4.400 0v0.600" fill="none" stroke="#c4c4c4" stroke-width="1.200"/></svg>
<svg class="abs" style="left:596px;top:3px" width="4" height="12" viewBox="0 0 4 12"><circle cx="2" cy="1.500" r="1.200" fill="#c4c4c4"/><circle cx="2" cy="6" r="1.200" fill="#c4c4c4"/><circle cx="2" cy="10.500" r="1.200" fill="#c4c4c4"/></svg>
</div>
<div class="tool" style="left:877px;top:653px;width:611px;height:21px;border-bottom:1px solid #232323">
<svg class="abs" style="left:7px;top:4px" width="12" height="12" viewBox="0 0 12 12"><path d="M6 0.500v11M0.500 6h11" stroke="#d2d2d2" stroke-width="1.500"/></svg><div class="arr" style="left:23px;top:8px;border-left-width:3.500px;border-right-width:3.500px;border-top-width:4px"></div>
<div class="fld" style="left:146px;top:2px;width:300px;height:16px"><svg class="abs" style="left:5px;top:3px" width="9" height="9" viewBox="0 0 9 9"><circle cx="3.400" cy="3.400" r="2.500" fill="none" stroke="#a0a0a0" stroke-width="1.100"/><path d="M5.300 5.300l2.500 2.500" stroke="#a0a0a0" stroke-width="1.100"/></svg></div>
<svg class="abs" style="left:448px;top:3px" width="14" height="14" viewBox="0 0 14 14"><rect x="0.600" y="0.600" width="12.800" height="12.800" rx="1.500" fill="none" stroke="#c4c4c4" stroke-width="1.100"/><rect x="2.600" y="7.400" width="4" height="4" fill="none" stroke="#c4c4c4"/><path d="M6.500 7.500l4.500-4.500M7.500 2.800h3.700v3.700" stroke="#c4c4c4" stroke-width="1.100" fill="none"/></svg>
<div class="abs" style="left:466px;top:0;width:1px;height:20px;background:#2b2b2b"></div>
<div class="abs" style="left:492px;top:0;width:1px;height:20px;background:#2b2b2b"></div>
<div class="abs" style="left:518px;top:0;width:1px;height:20px;background:#2b2b2b"></div>
<div class="abs" style="left:544px;top:0;width:1px;height:20px;background:#2b2b2b"></div>
<div class="abs" style="left:570px;top:0;width:1px;height:20px;background:#2b2b2b"></div>
<svg class="abs" style="left:472px;top:3px" width="14" height="14" viewBox="0 0 14 14"><circle cx="4.500" cy="9.500" r="3.500" fill="#c4c4c4"/><path d="M6 0.500h5v4.500H6zM9.500 6l4 6.500h-6z" fill="#c4c4c4"/></svg>
<svg class="abs" style="left:498px;top:4px" width="13" height="12" viewBox="0 0 13 12"><path d="M6.500 0.500H12a.500.500 0 0 1 .5.500v5.500L7 12 1 6z" fill="#c4c4c4"/><circle cx="10" cy="3" r="1.100" fill="#3c3c3c"/></svg>
<svg class="abs" style="left:524px;top:3px" width="14" height="14" viewBox="0 0 14 14"><circle cx="7" cy="7" r="6.800" fill="#c4c4c4"/><path d="M7 2.800v5.200" stroke="#3c3c3c" stroke-width="1.900"/><circle cx="7" cy="10.600" r="1.100" fill="#3c3c3c"/></svg>
<svg class="abs" style="left:551px;top:4px" width="12" height="12" viewBox="0 0 12 12"><path d="M6 0.300l1.800 3.800 4 .5-3 2.800.8 4.100L6 9.500l-3.600 2 .8-4.100-3-2.800 4-.5z" fill="#8a8a8a"/></svg>
<svg class="abs" style="left:575px;top:4px" width="16" height="12" viewBox="0 0 16 12"><path d="M1 6c2-3.400 4.400-4.600 7-4.600S13 2.600 15 6c-2 3.400-4.400 4.600-7 4.600S3 9.400 1 6z" fill="none" stroke="#c4c4c4" stroke-width="1.200"/><circle cx="8" cy="6" r="1.800" fill="#c4c4c4"/><path d="M2.500 11.500l11-11" stroke="#c4c4c4" stroke-width="1.300"/></svg><span class="t" style="left:592px;top:3px;color:#c4c4c4">14</span>
</div>
<div class="panel" style="left:877px;top:674px;width:208px;height:344px;overflow:hidden">
<div class="row" style="top:0px;width:208px;"><div class="tri-d" style="left:4px;top:5px"></div><svg class="abs" style="left:19px;top:2px" width="12" height="12" viewBox="0 0 12 12"><path d="M6 0.300l1.800 3.800 4 .5-3 2.800.8 4.100L6 9.500l-3.600 2 .8-4.100-3-2.800 4-.5z" fill="#c4c4c4"/></svg><span class="t b" style="left:34px;top:0;font-size:12.5px;letter-spacing:.75px">Favorites</span></div>
<div class="row" style="top:16px;width:208px;"><svg class="abs" style="left:31px;top:2px" width="13" height="13" viewBox="0 0 13 13"><circle cx="5.200" cy="5.200" r="4.200" fill="none" stroke="#c4c4c4" stroke-width="1.200"/><path d="M8.300 8.300l4 4" stroke="#c4c4c4" stroke-width="1.400"/></svg><span class="t" style="left:48px;top:0;color:#c8c8c8">All Materials</span></div>
<div class="row" style="top:32px;width:208px;"><svg class="abs" style="left:31px;top:2px" width="13" height="13" viewBox="0 0 13 13"><circle cx="5.200" cy="5.200" r="4.200" fill="none" stroke="#c4c4c4" stroke-width="1.200"/><path d="M8.300 8.300l4 4" stroke="#c4c4c4" stroke-width="1.400"/></svg><span class="t" style="left:48px;top:0;color:#c8c8c8">All Models</span></div>
<div class="row" style="top:48px;width:208px;"><svg class="abs" style="left:31px;top:2px" width="13" height="13" viewBox="0 0 13 13"><circle cx="5.200" cy="5.200" r="4.200" fill="none" stroke="#c4c4c4" stroke-width="1.200"/><path d="M8.300 8.300l4 4" stroke="#c4c4c4" stroke-width="1.400"/></svg><span class="t" style="left:48px;top:0;color:#c8c8c8">All Prefabs</span></div>
<div class="row" style="top:79px;width:208px;"><div class="tri-d" style="left:4px;top:5px"></div><svg class="abs" style="left:17px;top:2px" width="14" height="12" viewBox="0 0 14 12"><path d="M0.500 1.500a1 1 0 0 1 1-1h3l1.200 1.600h4.800a1 1 0 0 1 1 1v1.400H3.600L1.200 11.300a1 1 0 0 1-.7-.9z" fill="#c2c2c2"/><path d="M3.900 5.500h9.600l-2.400 6H1.600z" fill="#c2c2c2"/></svg><span class="t b" style="left:34px;top:0;font-size:12.5px;letter-spacing:.75px">Assets</span></div>
<div class="row" style="top:95px;width:208px;"><svg class="abs" style="left:31px;top:2px" width="13" height="12" viewBox="0 0 13 12"><path d="M0.500 1.500a1 1 0 0 1 1-1h3.300l1.200 1.600h5.500a1 1 0 0 1 1 1v7.400a1 1 0 0 1-1 1h-10a1 1 0 0 1-1-1z" fill="#c2c2c2"/></svg><span class="t" style="left:48px;top:0;color:#c8c8c8">Materials</span></div>
<div class="row" style="top:111px;width:208px;"><div class="tri-d" style="left:18px;top:5px"></div><svg class="abs" style="left:31px;top:2px" width="14" height="12" viewBox="0 0 14 12"><path d="M0.500 1.500a1 1 0 0 1 1-1h3l1.200 1.600h4.800a1 1 0 0 1 1 1v1.400H3.600L1.200 11.300a1 1 0 0 1-.7-.9z" fill="#c2c2c2"/><path d="M3.900 5.500h9.600l-2.400 6H1.600z" fill="#c2c2c2"/></svg><span class="t" style="left:48px;top:0;color:#c8c8c8">Samples</span></div>
<div class="row" style="top:127px;width:208px;"><div class="tri-d" style="left:32px;top:5px"></div><svg class="abs" style="left:45px;top:2px" width="14" height="12" viewBox="0 0 14 12"><path d="M0.500 1.500a1 1 0 0 1 1-1h3l1.200 1.600h4.800a1 1 0 0 1 1 1v1.400H3.600L1.200 11.300a1 1 0 0 1-.7-.9z" fill="#c2c2c2"/><path d="M3.900 5.500h9.600l-2.400 6H1.600z" fill="#c2c2c2"/></svg><span class="t" style="left:62px;top:0;color:#c8c8c8">ProBuilder</span></div>
<div class="row" style="top:143px;width:208px;"><div class="tri-d" style="left:46px;top:5px"></div><svg class="abs" style="left:59px;top:2px" width="14" height="12" viewBox="0 0 14 12"><path d="M0.500 1.500a1 1 0 0 1 1-1h3l1.200 1.600h4.800a1 1 0 0 1 1 1v1.400H3.600L1.200 11.300a1 1 0 0 1-.7-.9z" fill="#c2c2c2"/><path d="M3.900 5.500h9.600l-2.400 6H1.600z" fill="#c2c2c2"/></svg><span class="t" style="left:76px;top:0;color:#c8c8c8">5.0.7</span></div>
<div class="row" style="top:159px;width:208px;"><div class="tri-d" style="left:60px;top:5px"></div><svg class="abs" style="left:73px;top:2px" width="14" height="12" viewBox="0 0 14 12"><path d="M0.500 1.500a1 1 0 0 1 1-1h3l1.200 1.600h4.800a1 1 0 0 1 1 1v1.400H3.600L1.200 11.300a1 1 0 0 1-.7-.9z" fill="#c2c2c2"/><path d="M3.900 5.500h9.600l-2.400 6H1.600z" fill="#c2c2c2"/></svg><span class="t" style="left:90px;top:0;color:#c8c8c8">Universal Render Pip</span></div>
<div class="row" style="top:175px;width:208px;"><svg class="abs" style="left:87px;top:2px" width="13" height="12" viewBox="0 0 13 12"><path d="M0.500 1.500a1 1 0 0 1 1-1h3.300l1.200 1.600h5.500a1 1 0 0 1 1 1v7.400a1 1 0 0 1-1 1h-10a1 1 0 0 1-1-1z" fill="#c2c2c2"/></svg><span class="t" style="left:104px;top:0;color:#c8c8c8">Material</span></div>
<div class="row" style="top:191px;width:208px;"><svg class="abs" style="left:87px;top:2px" width="13" height="12" viewBox="0 0 13 12"><path d="M0.500 1.500a1 1 0 0 1 1-1h3.300l1.200 1.600h5.500a1 1 0 0 1 1 1v7.400a1 1 0 0 1-1 1h-10a1 1 0 0 1-1-1z" fill="#c2c2c2"/></svg><span class="t" style="left:104px;top:0;color:#c8c8c8">Shader</span></div>
<div class="row" style="top:207px;width:208px;"><svg class="abs" style="left:31px;top:2px" width="13" height="12" viewBox="0 0 13 12"><path d="M0.500 1.500a1 1 0 0 1 1-1h3.300l1.200 1.600h5.500a1 1 0 0 1 1 1v7.400a1 1 0 0 1-1 1h-10a1 1 0 0 1-1-1z" fill="#c2c2c2"/></svg><span class="t" style="left:48px;top:0;color:#c8c8c8">Scenes</span></div>
<div class="row" style="top:223px;width:208px;background:#4d4d4d;"><svg class="abs" style="left:31px;top:2px" width="13" height="12" viewBox="0 0 13 12"><path d="M0.500 1.500a1 1 0 0 1 1-1h3.300l1.200 1.600h5.500a1 1 0 0 1 1 1v7.400a1 1 0 0 1-1 1h-10a1 1 0 0 1-1-1z" fill="#c2c2c2"/></svg><span class="t" style="left:48px;top:0;color:#c8c8c8">Scripts</span></div>
<div class="row" style="top:239px;width:208px;"><div class="tri-r" style="left:6px;top:3.500px"></div><svg class="abs" style="left:17px;top:2px" width="13" height="12" viewBox="0 0 13 12"><path d="M0.500 1.500a1 1 0 0 1 1-1h3.300l1.200 1.600h5.500a1 1 0 0 1 1 1v7.400a1 1 0 0 1-1 1h-10a1 1 0 0 1-1-1z" fill="#c2c2c2"/></svg><span class="t b" style="left:34px;top:0;font-size:12.5px;letter-spacing:.75px">Packages</span></div>
</div>
<div class="abs" style="left:1085px;top:674px;width:1px;height:344px;background:#232323"></div>
<div class="panel" style="left:1086px;top:674px;width:402px;height:344px;background:#333">
<div class="abs" style="left:0;top:0;width:402px;height:21px;background:#3f3f3f;border-bottom:1px solid #2a2a2a"></div>
<span class="t" style="left:4px;top:2px;color:#bdbdbd">Assets</span><svg class="abs" style="left:48px;top:6px" width="6" height="9" viewBox="0 0 6 9"><path d="M1 0.500l4 4-4 4" stroke="#bdbdbd" stroke-width="1.200" fill="none"/></svg><span class="t b" style="left:60px;top:2px;letter-spacing:.65px">Scripts</span>
<svg class="abs" style="left:17px;top:22px" width="13" height="15" viewBox="0 0 13 15"><path d="M1 0.500h7.500l3.500 3.500v10.500H1z" fill="#f2f2f2"/><path d="M8.500 0.500v3.500h3.500" fill="#cfcfcf"/><text x="2.400" y="11.800" font-family="Liberation Sans, sans-serif" font-size="10" font-weight="bold" fill="#2e8b3a">#</text></svg>
<span class="t" style="left:34px;top:21px;color:#cdcdcd;letter-spacing:.75px">PlayerManager</span>
<div class="abs" style="left:0;top:323px;width:402px;height:21px;background:#414141"></div>
<div class="abs" style="left:337px;top:333px;width:50px;height:1.500px;background:#636363"></div><div class="abs" style="left:331px;top:329px;width:9px;height:9px;border-radius:5px;background:#a8a8a8"></div>
</div>

<!-- ===== Inspector ===== -->
<div class="abs" style="left:1488px;top:73px;width:2px;height:945px;background:#191919"></div>
<div class="panel" style="left:1490px;top:73px;width:430px;height:945px;overflow:hidden">
<div class="tabbar" style="left:0;top:0;width:430px"><div class="tab" style="left:0;width:95px"><svg class="abs" style="left:7px;top:4px" width="11" height="11" viewBox="0 0 11 11"><circle cx="5.500" cy="5.500" r="5.500" fill="#c4c4c4"/><path d="M5.500 4.800v3.800" stroke="#3c3c3c" stroke-width="1.500"/><circle cx="5.500" cy="2.900" r="0.900" fill="#3c3c3c"/></svg><span class="t" style="left:23px">Inspector</span></div><svg class="abs" style="left:394px;top:4px" width="10" height="11" viewBox="0 0 10 11"><rect x="0.600" y="5" width="8.800" height="5.400" rx="0.800" fill="none" stroke="#c4c4c4" stroke-width="1.200"/><path d="M2.600 5V3a2.200 2.200 0 0 1 4.400 0v0.600" fill="none" stroke="#c4c4c4" stroke-width="1.200"/></svg><svg class="abs" style="left:414px;top:3px" width="4" height="12" viewBox="0 0 4 12"><circle cx="2" cy="1.500" r="1.200" fill="#c4c4c4"/><circle cx="2" cy="6" r="1.200" fill="#c4c4c4"/><circle cx="2" cy="10.500" r="1.200" fill="#c4c4c4"/></svg></div>
<svg class="abs" style="left:7px;top:29px" width="22" height="23" viewBox="0 0 22 23"><path d="M11 1.500l9 4.500v11l-9 4.500-9-4.500V6zM11 10.500v11M11 10.500l9-4.500M11 10.500L2 6" fill="none" stroke="#c4c4c4" stroke-width="1.500" stroke-linejoin="round"/></svg><div class="arr" style="left:26px;top:53px;border-left-width:3.500px;border-right-width:3.500px;border-top-width:4px"></div>
<div class="cb" style="left:48px;top:30px"><svg class="abs" style="left:1px;top:1px" width="10" height="10" viewBox="0 0 10 10"><path d="M1.500 5.200l2.600 2.600 4.600-5.400" stroke="#e6e6e6" stroke-width="1.500" fill="none"/></svg></div>
<div class="fld" style="left:68px;top:28px;width:281px"><span class="t" style="font-weight:bold;font-size:13px;color:#dcdcdc;left:3px;top:2px">Player</span></div>
<div class="cb" style="left:352px;top:30px"></div><span class="t" style="left:370px;top:30px;color:#bdbdbd">Static</span><div class="arr" style="left:416px;top:35px;border-left-width:3.500px;border-right-width:3.500px;border-top-width:4px"></div>
<span class="t" style="left:40px;top:53px">Tag</span><div class="dd" style="left:68px;top:53px;width:158px"><span class="t">Untagged</span><div class="arr" style="left:144px;top:5px;border-left-width:3.500px;border-right-width:3.500px;border-top-width:4px"></div></div>
<span class="t" style="left:239px;top:53px">Layer</span><div class="dd" style="left:279px;top:53px;width:147px"><span class="t">Default</span><div class="arr" style="left:133px;top:5px;border-left-width:3.500px;border-right-width:3.500px;border-top-width:4px"></div></div>
<div class="hdr" style="top:79px"><div class="tri-d" style="left:6px;top:7px"></div><svg class="abs" style="left:22px;top:2px" width="14" height="16" viewBox="0 0 14 16"><path d="M7 8V1.500" stroke="#a5e23a" stroke-width="2" stroke-linecap="round"/><path d="M7 8l5 3.200" stroke="#f0603a" stroke-width="2" stroke-linecap="round"/><path d="M7 8l-5 3.200" stroke="#3fb6ea" stroke-width="2" stroke-linecap="round"/></svg><span class="t b" style="left:60px;top:2px;font-size:13px;letter-spacing:.3px">Transform</span><svg class="abs" style="left:371px;top:4px" width="12" height="12" viewBox="0 0 12 12"><circle cx="6" cy="6" r="5.600" fill="#c4c4c4"/><path d="M4.200 4.600a1.900 1.900 0 1 1 2.700 1.700c-.7.400-.9.700-.9 1.400" fill="none" stroke="#3e3e3e" stroke-width="1.400"/><circle cx="6" cy="9.400" r="0.900" fill="#3e3e3e"/></svg><svg class="abs" style="left:391px;top:4px" width="12" height="12" viewBox="0 0 12 12"><path d="M0.500 3h6M9.500 3h2M0.500 9h2M5.500 9h6" stroke="#c4c4c4" stroke-width="1.300"/><path d="M7.800 0.500v5M3.800 6.500v5" stroke="#c4c4c4" stroke-width="1.500"/></svg><svg class="abs" style="left:415px;top:4px" width="4" height="12" viewBox="0 0 4 12"><circle cx="2" cy="1.500" r="1.200" fill="#c4c4c4"/><circle cx="2" cy="6" r="1.200" fill="#c4c4c4"/><circle cx="2" cy="10.500" r="1.200" fill="#c4c4c4"/></svg></div>
<span class="t" style="left:19px;top:106px;color:#c4c4c4">Position</span><span class="t" style="left:175px;top:106px;color:#c4c4c4">X</span><div class="fld" style="left:190px;top:104px;width:65px"><span class="t" style="color:#d2d2d2">0</span></div><span class="t" style="left:261px;top:106px;color:#c4c4c4">Y</span><div class="fld" style="left:275px;top:104px;width:65px"><span class="t" style="color:#d2d2d2">0</span></div><span class="t" style="left:346px;top:106px;color:#c4c4c4">Z</span><div class="fld" style="left:361px;top:104px;width:65px"><span class="t" style="color:#d2d2d2">0</span></div>
<span class="t" style="left:19px;top:126px;color:#c4c4c4">Rotation</span><span class="t" style="left:175px;top:126px;color:#c4c4c4">X</span><div class="fld" style="left:190px;top:124px;width:65px"><span class="t" style="color:#d2d2d2">0</span></div><span class="t" style="left:261px;top:126px;color:#c4c4c4">Y</span><div class="fld" style="left:275px;top:124px;width:65px"><span class="t" style="color:#d2d2d2">180</span></div><span class="t" style="left:346px;top:126px;color:#c4c4c4">Z</span><div class="fld" style="left:361px;top:124px;width:65px"><span class="t" style="color:#d2d2d2">0</span></div>
<span class="t" style="left:19px;top:146px;color:#c4c4c4">Scale</span><span class="t" style="left:175px;top:146px;color:#c4c4c4">X</span><div class="fld" style="left:190px;top:144px;width:65px"><span class="t" style="color:#d2d2d2">1</span></div><span class="t" style="left:261px;top:146px;color:#c4c4c4">Y</span><div class="fld" style="left:275px;top:144px;width:65px"><span class="t" style="color:#d2d2d2">1</span></div><span class="t" style="left:346px;top:146px;color:#c4c4c4">Z</span><div class="fld" style="left:361px;top:144px;width:65px"><span class="t" style="color:#d2d2d2">1</span></div>
<svg class="abs" style="left:151px;top:148px" width="14" height="10" viewBox="0 0 14 10"><path d="M5.500 2.500H3.800a2.500 2.500 0 0 0 0 5h1.700M8.500 2.500h1.700a2.500 2.500 0 0 1 0 5H8.500" fill="none" stroke="#c4c4c4" stroke-width="1.200"/><path d="M2 0.500l10 9" stroke="#c4c4c4" stroke-width="1.200"/></svg>
<div class="hdr" style="top:172px"><div class="tri-d" style="left:6px;top:7px"></div><svg class="abs" style="left:22px;top:3px" width="14" height="14" viewBox="0 0 14 14"><rect x="0.600" y="0.600" width="12.800" height="12.800" fill="none" stroke="#6fd0f5" stroke-width="1.200"/><path d="M4.800 0.600v12.800M9.200 0.600v12.800M0.600 4.800h12.800M0.600 9.200h12.800" stroke="#6fd0f5" stroke-width="1.100"/></svg><span class="t b" style="left:60px;top:2px;font-size:13px;letter-spacing:.3px">Capsule (Mesh Filter)</span><svg class="abs" style="left:371px;top:4px" width="12" height="12" viewBox="0 0 12 12"><circle cx="6" cy="6" r="5.600" fill="#c4c4c4"/><path d="M4.200 4.600a1.900 1.900 0 1 1 2.700 1.700c-.7.400-.9.700-.9 1.400" fill="none" stroke="#3e3e3e" stroke-width="1.400"/><circle cx="6" cy="9.400" r="0.900" fill="#3e3e3e"/></svg><svg class="abs" style="left:391px;top:4px" width="12" height="12" viewBox="0 0 12 12"><path d="M0.500 3h6M9.500 3h2M0.500 9h2M5.500 9h6" stroke="#c4c4c4" stroke-width="1.300"/><path d="M7.800 0.500v5M3.800 6.500v5" stroke="#c4c4c4" stroke-width="1.500"/></svg><svg class="abs" style="left:415px;top:4px" width="4" height="12" viewBox="0 0 4 12"><circle cx="2" cy="1.500" r="1.200" fill="#c4c4c4"/><circle cx="2" cy="6" r="1.200" fill="#c4c4c4"/><circle cx="2" cy="10.500" r="1.200" fill="#c4c4c4"/></svg></div>
<span class="t" style="left:19px;top:199px;color:#c4c4c4">Mesh</span>
<div class="fld" style="left:174px;top:197px;width:252px"><svg class="abs" style="left:3px;top:3px" width="10" height="10" viewBox="0 0 10 10"><rect x="0.500" y="0.500" width="9" height="9" fill="none" stroke="#5fb6dc"/><path d="M3.500 0.500v9M6.500 0.500v9M0.500 3.500h9M0.500 6.500h9" stroke="#5fb6dc" stroke-width="0.900"/></svg><span class="t" style="left:16px">Capsule</span><div class="abs" style="right:0;top:0;width:18px;height:16px;background:#373737;border-radius:0 2px 2px 0"></div><svg class="abs" style="left:235px;top:2px" width="12" height="12" viewBox="0 0 12 12"><circle cx="6" cy="6" r="4.800" fill="none" stroke="#c4c4c4" stroke-width="1.100"/><circle cx="6" cy="6" r="1.600" fill="#c4c4c4"/></svg></div>
<div class="hdr" style="top:222px"><div class="tri-d" style="left:6px;top:7px"></div><svg class="abs" style="left:22px;top:3px" width="15" height="15" viewBox="0 0 15 15"><path d="M0.600 9V0.600h12.800V6M4.800 0.600v8M9.200 0.600v5.400M0.600 4.800h12.800M0.600 9h4" stroke="#6fd0f5" stroke-width="1.200" fill="none"/><path d="M4.500 11.200c1.400-2.200 3-3 5-3s3.600.8 5 3c-1.400 2.200-3 3-5 3s-3.600-.8-5-3z" fill="#c8c8c8"/><circle cx="9.500" cy="11.200" r="1.600" fill="#3e3e3e"/></svg><div class="cb" style="left:40px;top:3px"><svg class="abs" style="left:1px;top:1px" width="10" height="10" viewBox="0 0 10 10"><path d="M1.500 5.200l2.600 2.600 4.600-5.400" stroke="#e6e6e6" stroke-width="1.500" fill="none"/></svg></div><span class="t b" style="left:60px;top:2px;font-size:13px;letter-spacing:.3px">Mesh Renderer</span><svg class="abs" style="left:371px;top:4px" width="12" height="12" viewBox="0 0 12 12"><circle cx="6" cy="6" r="5.600" fill="#c4c4c4"/><path d="M4.200 4.600a1.900 1.900 0 1 1 2.700 1.700c-.7.400-.9.700-.9 1.400" fill="none" stroke="#3e3e3e" stroke-width="1.400"/><circle cx="6" cy="9.400" r="0.900" fill="#3e3e3e"/></svg><svg class="abs" style="left:391px;top:4px" width="12" height="12" viewBox="0 0 12 12"><path d="M0.500 3h6M9.500 3h2M0.500 9h2M5.500 9h6" stroke="#c4c4c4" stroke-width="1.300"/><path d="M7.800 0.500v5M3.800 6.500v5" stroke="#c4c4c4" stroke-width="1.500"/></svg><svg class="abs" style="left:415px;top:4px" width="4" height="12" viewBox="0 0 4 12"><circle cx="2" cy="1.500" r="1.200" fill="#c4c4c4"/><circle cx="2" cy="6" r="1.200" fill="#c4c4c4"/><circle cx="2" cy="10.500" r="1.200" fill="#c4c4c4"/></svg></div>
<div class="tri-r" style="left:7.500px;top:253px"></div><span class="t b" style="font-size:13px;letter-spacing:.5px;left:19px;top:250px;">Materials</span>
<div class="tri-r" style="left:7.500px;top:273px"></div><span class="t b" style="font-size:13px;letter-spacing:.5px;left:19px;top:270px;">Lighting</span>
<div class="tri-r" style="left:7.500px;top:292px"></div><span class="t b" style="font-size:13px;letter-spacing:.5px;left:19px;top:289px;">Probes</span>
<div class="tri-r" style="left:7.500px;top:311px"></div><span class="t b" style="font-size:13px;letter-spacing:.5px;left:19px;top:308px;">Additional Settings</span>
<div class="fld" style="left:378px;top:248px;width:48px"><span class="t" style="color:#d2d2d2">1</span></div>
<div class="hdr" style="top:332px"><div class="tri-d" style="left:6px;top:7px"></div><svg class="abs" style="left:24px;top:2px" width="10" height="16" viewBox="0 0 10 16"><rect x="0.500" y="0.500" width="9" height="15" rx="4.500" fill="#98ea3a"/><path d="M5 0.500v15M0.500 8h9" stroke="#2e5210" stroke-width="0.900"/></svg><div class="cb" style="left:40px;top:3px"><svg class="abs" style="left:1px;top:1px" width="10" height="10" viewBox="0 0 10 10"><path d="M1.500 5.200l2.600 2.600 4.600-5.400" stroke="#e6e6e6" stroke-width="1.500" fill="none"/></svg></div><span class="t b" style="left:60px;top:2px;font-size:13px;letter-spacing:.3px">Capsule Collider</span><svg class="abs" style="left:371px;top:4px" width="12" height="12" viewBox="0 0 12 12"><circle cx="6" cy="6" r="5.600" fill="#c4c4c4"/><path d="M4.200 4.600a1.900 1.900 0 1 1 2.700 1.700c-.7.400-.9.700-.9 1.400" fill="none" stroke="#3e3e3e" stroke-width="1.400"/><circle cx="6" cy="9.400" r="0.900" fill="#3e3e3e"/></svg><svg class="abs" style="left:391px;top:4px" width="12" height="12" viewBox="0 0 12 12"><path d="M0.500 3h6M9.500 3h2M0.500 9h2M5.500 9h6" stroke="#c4c4c4" stroke-width="1.300"/><path d="M7.800 0.500v5M3.800 6.500v5" stroke="#c4c4c4" stroke-width="1.500"/></svg><svg class="abs" style="left:415px;top:4px" width="4" height="12" viewBox="0 0 4 12"><circle cx="2" cy="1.500" r="1.200" fill="#c4c4c4"/><circle cx="2" cy="6" r="1.200" fill="#c4c4c4"/><circle cx="2" cy="10.500" r="1.200" fill="#c4c4c4"/></svg></div>
<span class="t" style="left:19px;top:360px;color:#c4c4c4">Edit Collider</span>
<div class="abs" style="left:172px;top:360px;width:32px;height:22px;background:#3a3a3a;border:1px solid #191919;border-radius:3px"><svg class="abs" style="left:8px;top:4px" width="15" height="13" viewBox="0 0 15 13"><path d="M2.500 9.500c0-2.500 1.800-3.500 3.500-6.500h3c1.700 3 3 3.500 3 5.500" stroke="#d0d0d0" stroke-width="1.100" fill="none"/><rect x="5.800" y="0.600" width="3.400" height="3.400" fill="#3a3a3a" stroke="#d0d0d0"/><rect x="0.600" y="9" width="3.400" height="3.400" fill="#3a3a3a" stroke="#d0d0d0"/><rect x="10.600" y="7" width="3.400" height="3.400" fill="#3a3a3a" stroke="#d0d0d0"/></svg></div>
<span class="t" style="left:19px;top:389px;color:#c4c4c4">Is Trigger</span><div class="cb" style="left:173px;top:389px"></div>
<span class="t" style="left:19px;top:409px;color:#c4c4c4">Provides Contacts</span><div class="cb" style="left:173px;top:409px"></div>
<span class="t" style="left:19px;top:429px;color:#c4c4c4">Material</span>
<div class="fld" style="left:174px;top:427px;width:252px"><span class="t">None (Physic Material)</span><div class="abs" style="right:0;top:0;width:18px;height:16px;background:#373737;border-radius:0 2px 2px 0"></div><svg class="abs" style="left:235px;top:2px" width="12" height="12" viewBox="0 0 12 12"><circle cx="6" cy="6" r="4.800" fill="none" stroke="#c4c4c4" stroke-width="1.100"/><circle cx="6" cy="6" r="1.600" fill="#c4c4c4"/></svg></div>
<span class="t" style="left:19px;top:449px;color:#c4c4c4">Center</span><span class="t" style="left:175px;top:449px;color:#c4c4c4">X</span><div class="fld" style="left:190px;top:447px;width:65px"><span class="t" style="color:#d2d2d2">0</span></div><span class="t" style="left:261px;top:449px;color:#c4c4c4">Y</span><div class="fld" style="left:275px;top:447px;width:65px"><span class="t" style="color:#d2d2d2">0</span></div><span class="t" style="left:346px;top:449px;color:#c4c4c4">Z</span><div class="fld" style="left:361px;top:447px;width:65px"><span class="t" style="color:#d2d2d2">0</span></div>
<span class="t" style="left:19px;top:469px;color:#c4c4c4">Radius</span><div class="fld" style="left:174px;top:467px;width:252px"><span class="t" style="color:#d2d2d2">0.5</span></div>
<span class="t" style="left:19px;top:489px;color:#c4c4c4">Height</span><div class="fld" style="left:174px;top:487px;width:252px"><span class="t" style="color:#d2d2d2">2</span></div>
<span class="t" style="left:19px;top:509px;color:#c4c4c4">Direction</span><div class="dd" style="left:174px;top:508px;width:252px"><span class="t">Y-Axis</span><div class="arr" style="left:238px;top:5px;border-left-width:3.500px;border-right-width:3.500px;border-top-width:4px"></div></div>
<div class="tri-r" style="left:7.500px;top:532px"></div><span class="t" style="left:19px;top:529px;color:#c4c4c4">Layer Overrides</span>
<div class="hdr" style="top:552px"><div class="tri-d" style="left:6px;top:7px"></div><svg class="abs" style="left:22px;top:2px" width="13" height="16" viewBox="0 0 13 16"><path d="M0.500 0.500h8l4 4v11h-12z" fill="#f4f4f4"/><path d="M8.500 0.500v4h4" fill="#cfcfcf"/><text x="2.200" y="12.500" font-family="Liberation Sans, sans-serif" font-size="10.500" font-weight="bold" fill="#2e8b3a">#</text></svg><div class="cb" style="left:40px;top:3px"><svg class="abs" style="left:1px;top:1px" width="10" height="10" viewBox="0 0 10 10"><path d="M1.500 5.200l2.600 2.600 4.600-5.400" stroke="#e6e6e6" stroke-width="1.500" fill="none"/></svg></div><span class="t b" style="left:60px;top:2px;font-size:13px;letter-spacing:.3px">Player Manager (Script)</span><svg class="abs" style="left:371px;top:4px" width="12" height="12" viewBox="0 0 12 12"><circle cx="6" cy="6" r="5.600" fill="#c4c4c4"/><path d="M4.200 4.600a1.900 1.900 0 1 1 2.700 1.700c-.7.400-.9.700-.9 1.400" fill="none" stroke="#3e3e3e" stroke-width="1.400"/><circle cx="6" cy="9.400" r="0.900" fill="#3e3e3e"/></svg><svg class="abs" style="left:391px;top:4px" width="12" height="12" viewBox="0 0 12 12"><path d="M0.500 3h6M9.500 3h2M0.500 9h2M5.500 9h6" stroke="#c4c4c4" stroke-width="1.300"/><path d="M7.800 0.500v5M3.800 6.500v5" stroke="#c4c4c4" stroke-width="1.500"/></svg><svg class="abs" style="left:415px;top:4px" width="4" height="12" viewBox="0 0 4 12"><circle cx="2" cy="1.500" r="1.200" fill="#c4c4c4"/><circle cx="2" cy="6" r="1.200" fill="#c4c4c4"/><circle cx="2" cy="10.500" r="1.200" fill="#c4c4c4"/></svg></div>
<span class="t" style="left:19px;top:580px;color:#8a8a8a">Script</span>
<div class="fld" style="left:174px;top:578px;width:252px;background:#323232;border-color:#2b2b2b"><svg class="abs" style="left:3px;top:2px" width="10" height="12" viewBox="0 0 10 12"><path d="M0.500 0.500h6l3 3v8h-9z" fill="#9a9a9a"/><path d="M3 4v5M5.500 4v5M2 5.500h5M2 7.500h5" stroke="#4a7a50" stroke-width="0.800"/></svg><span class="t" style="left:16px;color:#8a8a8a">PlayerManager</span><svg class="abs" style="left:235px;top:2px" width="12" height="12" viewBox="0 0 12 12"><circle cx="6" cy="6" r="4.800" fill="none" stroke="#7a7a7a" stroke-width="1.100"/><circle cx="6" cy="6" r="1.600" fill="#7a7a7a"/></svg></div>
<div class="sep" style="top:602px"></div>
<svg class="abs" style="left:16px;top:609px" width="32" height="32" viewBox="0 0 32 32"><defs><radialGradient id="matg" cx="0.420" cy="0.320" r="0.700"><stop offset="0" stop-color="#2aabca"/><stop offset="0.550" stop-color="#1b96b4"/><stop offset="1" stop-color="#0b4c60"/></radialGradient></defs><rect x="0" y="0" width="32" height="32" fill="#3b3b3b"/><circle cx="16" cy="15" r="13.800" fill="url(#matg)"/></svg>
<span class="t" style="left:56px;top:608px;font-size:13.5px;color:#c8c8c8">Blue (Material)</span>
<svg class="abs" style="left:384px;top:610px" width="12" height="12" viewBox="0 0 12 12"><circle cx="6" cy="6" r="5.600" fill="#c4c4c4"/><path d="M4.200 4.600a1.900 1.900 0 1 1 2.700 1.700c-.7.400-.9.700-.9 1.400" fill="none" stroke="#3e3e3e" stroke-width="1.400"/><circle cx="6" cy="9.400" r="0.900" fill="#3e3e3e"/></svg><svg class="abs" style="left:400px;top:610px" width="12" height="12" viewBox="0 0 12 12"><path d="M0.500 3h6M9.500 3h2M0.500 9h2M5.500 9h6" stroke="#c4c4c4" stroke-width="1.300"/><path d="M7.800 0.500v5M3.800 6.500v5" stroke="#c4c4c4" stroke-width="1.500"/></svg><svg class="abs" style="left:420px;top:610px" width="4" height="12" viewBox="0 0 4 12"><circle cx="2" cy="1.500" r="1.200" fill="#c4c4c4"/><circle cx="2" cy="6" r="1.200" fill="#c4c4c4"/><circle cx="2" cy="10.500" r="1.200" fill="#c4c4c4"/></svg>
<div class="tri-r" style="left:7.500px;top:642px"></div>
<span class="t" style="left:53px;top:633px;color:#c4c4c4">Shader</span>
<div class="dd" style="left:105px;top:632px;width:224px"><span class="t">Standard</span><div class="arr" style="left:210px;top:5px;border-left-width:3.500px;border-right-width:3.500px;border-top-width:4px"></div></div>
<div class="dd" style="left:334px;top:632px;width:45px"><span class="t" style="left:6px">Edit...</span></div>
<div class="dd" style="left:383px;top:632px;width:43px"><svg class="abs" style="left:9px;top:3px" width="11" height="9" viewBox="0 0 11 9"><path d="M0 1h1.500M3 1h8M0 4.500h1.500M3 4.500h8M0 8h1.500M3 8h8" stroke="#d2d2d2" stroke-width="1.100"/></svg><div class="arr" style="left:29px;top:5px;border-left-width:3.500px;border-right-width:3.500px;border-top-width:4px"></div></div>
<div class="sep" style="top:657px"></div><div class="sep" style="top:668px"></div>
<div class="abs" style="left:101px;top:678px;width:228px;height:22px;background:#585858;border:1px solid #303030;border-radius:3px;text-align:center;line-height:20px;color:#e0e0e0;font-size:12px">Add Component</div>
</div>

<!-- ===== Status bar ===== -->
<div class="abs" style="left:0;top:1018px;width:1920px;height:22px;background:#191919">
  <div class="abs" style="left:1814px;top:2px;width:1px;height:20px;background:#2a2a2a"></div><div class="abs" style="left:1840px;top:2px;width:1px;height:20px;background:#2a2a2a"></div><div class="abs" style="left:1867px;top:2px;width:1px;height:20px;background:#2a2a2a"></div><div class="abs" style="left:1893px;top:2px;width:1px;height:20px;background:#2a2a2a"></div>
  <svg class="abs" style="left:1819px;top:4px" width="16" height="16" viewBox="0 0 16 16"><ellipse cx="8" cy="9" rx="3.600" ry="4.800" fill="#9a9a9a"/><circle cx="8" cy="4" r="2" fill="#9a9a9a"/><path d="M1.500 6l3 2M14.500 6l-3 2M1 10h3M15 10h-3M2 14.500l2.500-2M14 14.500l-2.500-2" stroke="#9a9a9a" stroke-width="1.100"/><path d="M2 1.500l12 13" stroke="#9a9a9a" stroke-width="1.300"/></svg>
  <svg class="abs" style="left:1845px;top:4px" width="16" height="16" viewBox="0 0 16 16"><ellipse cx="8" cy="4" rx="5.500" ry="2.500" fill="#9a9a9a"/><path d="M2.500 6.500c0 3 11 3 11 0v2.500c0 3-11 3-11 0zM2.500 10.500c0 3 11 3 11 0v2c0 3-11 3-11 0z" fill="#9a9a9a"/><path d="M2 1.500l12 13" stroke="#191919" stroke-width="2.400"/><path d="M2 1.500l12 13" stroke="#9a9a9a" stroke-width="1.200"/></svg>
  <svg class="abs" style="left:1872px;top:4px" width="16" height="16" viewBox="0 0 16 16"><circle cx="8" cy="8" r="6.500" fill="none" stroke="#9a9a9a" stroke-width="1.200" stroke-dasharray="8 3"/><circle cx="8" cy="7" r="2.200" fill="none" stroke="#9a9a9a" stroke-width="1.100"/><path d="M8 9.500v3" stroke="#9a9a9a" stroke-width="1.100"/><path d="M2 1.500l12 13" stroke="#9a9a9a" stroke-width="1.300"/></svg>
  <svg class="abs" style="left:1898px;top:4px" width="15" height="15" viewBox="0 0 15 15"><circle cx="7.500" cy="7.500" r="6.600" fill="none" stroke="#b0b0b0" stroke-width="1.100"/><path d="M4.300 7.800l2.200 2.200 4.200-4.600" stroke="#b0b0b0" stroke-width="1.300" fill="none"/></svg>
</div>
<!-- ===== Windows taskbar ===== -->
<div class="abs" style="left:0;top:1040px;width:1920px;height:40px;background:#141414;color:#fff;letter-spacing:0;font-family:'Liberation Sans',sans-serif">
  <svg class="abs" style="left:16px;top:12px" width="16" height="16" viewBox="0 0 16 16"><path d="M0 2.300l6.500-.9v6.100H0zM7.300 1.300L16 0v7.500H7.300zM0 8.300h6.500v6.100L0 13.500zM7.300 8.300H16V16l-8.700-1.200z" fill="#fff"/></svg>
  <div class="abs" style="left:49px;top:0;width:287px;height:40px;background:#323232;border:1px solid #4c4c4c;border-bottom:0"></div>
  <svg class="abs" style="left:60px;top:11px" width="18" height="18" viewBox="0 0 18 18"><circle cx="11" cy="6.500" r="5" fill="none" stroke="#fff" stroke-width="1.300"/><path d="M7.500 10.200L1.500 16.500" stroke="#fff" stroke-width="1.500"/></svg>
  <span class="t" style="left:88px;top:11px;font-size:14.4px;color:#e8e8e8;line-height:18px">Escriu aquí per cercar</span>
  <!-- book + backpack illustration -->
  <svg class="abs" style="left:256px;top:0" width="80" height="40" viewBox="0 0 80 40"><polygon points="-2,40 14,25 74,25 80,36 80,40" fill="#e6c59a"/><polygon points="12,15.500 25.500,11.500 38.500,13.500 40.500,31 28,30 15.500,34.500" fill="#3f9a4c"/><polygon points="13,14 26,10.500 27.800,28.800 15.800,32.500" fill="#f1f0f8"/><polygon points="26,10.500 38,12.300 39.500,29.800 27.800,28.800" fill="#e6e4f2"/><path d="M16 18l8-2.200M16.500 21l8-2.200M17 24l8-2.200M29.500 15l7 1M30 18l7 1M30.300 21l5 .8" stroke="#b9b6cc" stroke-width="0.700"/><path d="M31.800 19l9-9.200" stroke="#f6a623" stroke-width="3.600"/><path d="M40.200 10.400l2.400-2.500" stroke="#e9564f" stroke-width="3.600"/><path d="M30.600 20.300l1.800-1.800" stroke="#f3d9b0" stroke-width="2.600"/><path d="M55 6a4.600 3.500 0 0 1 9.200 0" fill="none" stroke="#2d7df0" stroke-width="1.800"/><path d="M49.600 16a10 11 0 0 1 20 0v15a2.800 2.800 0 0 1-2.800 2.800h-14.400a2.800 2.800 0 0 1-2.800-2.800z" fill="#2080f6"/><path d="M51.500 27a8.200 7.500 0 0 1 16.400 0v4a1.800 1.800 0 0 1-1.800 1.800h-12.800a1.800 1.800 0 0 1-1.800-1.800z" fill="#3197ff"/><path d="M52 32.600h15.500" stroke="#c08be8" stroke-width="1.300"/><path d="M53 9.500a9 6 0 0 1 13.500 0" fill="none" stroke="#7fb8ff" stroke-width="0.800"/></svg>
  <svg class="abs" style="left:351px;top:11px" width="18" height="18" viewBox="0 0 18 18"><circle cx="9" cy="9" r="6.800" fill="none" stroke="#fff" stroke-width="2"/></svg>
  <svg class="abs" style="left:399px;top:11px" width="18" height="18" viewBox="0 0 18 18"><path d="M1.500 4.600h10v9h-10z" fill="none" stroke="#fff" stroke-width="1.300"/><path d="M0.500 2h11.500M0.500 16h11.500M15.300 1v16" stroke="#fff" stroke-width="1.300"/><rect x="14" y="5.500" width="2.800" height="2.800" fill="#fff"/></svg>
  <!-- app icons -->
  <svg class="abs" style="left:447px;top:8px" width="24" height="24" viewBox="0 0 24 24"><defs><linearGradient id="xag" x1="0" y1="0" x2="0" y2="1"><stop offset="0" stop-color="#fb8b2e"/><stop offset="1" stop-color="#ee6d12"/></linearGradient></defs><rect x="0" y="0" width="24" height="24" rx="3.500" fill="url(#xag)"/><g stroke="#fff" stroke-width="4.600" stroke-linecap="round"><path d="M7.500 8l9 8M16.500 8l-9 8"/></g><g stroke="#fff" stroke-width="2.400" fill="none"><circle cx="7.300" cy="8" r="2.400"/><circle cx="16.700" cy="8" r="2.400"/><circle cx="7.300" cy="16" r="2.400"/><circle cx="16.700" cy="16" r="2.400"/></g><g fill="#f37a20"><circle cx="7.300" cy="8" r="1.200"/><circle cx="16.700" cy="8" r="1.200"/><circle cx="7.300" cy="16" r="1.200"/><circle cx="16.700" cy="16" r="1.200"/></g></svg>
  <svg class="abs" style="left:495px;top:9px" width="26" height="22" viewBox="0 0 26 22"><path d="M1 3h9l2 2h13v4H1z" fill="#e8a820"/><rect x="1" y="7" width="24" height="14" rx="1" fill="#f9d55a"/><rect x="8" y="13" width="10" height="8" fill="#3f8fe0"/><rect x="10.500" y="16" width="5" height="5" fill="#f9d55a"/></svg>
  <svg class="abs" style="left:544px;top:8px" width="24" height="24" viewBox="0 0 24 24"><circle cx="12" cy="12" r="12" fill="#e33b2e"/><path d="M12 12L1.600 6A12 12 0 0 0 7 22.900z" fill="#2da94f"/><path d="M12 12L7 22.900A12 12 0 0 0 22.400 6z" fill="#fcc934"/><path d="M12 12L22.400 6A12 12 0 0 0 1.600 6z" fill="#e33b2e"/><circle cx="12" cy="12" r="5.500" fill="#fff"/><circle cx="12" cy="12" r="4.300" fill="#3b7de9"/></svg>
  <svg class="abs" style="left:594px;top:8px" width="24" height="24" viewBox="0 0 24 24"><path d="M17.500 0.500L23.500 3.500v17L17.500 23.500 6 13l-3.500 3L0.500 15V9l2-1L6 11z" fill="#2a8fdf"/><path d="M17.500 6.500L10 12l7.500 5.500z" fill="#141414"/></svg>
  <svg class="abs" style="left:643px;top:8px" width="26" height="26" viewBox="0 0 26 26"><circle cx="12" cy="12" r="12" fill="#e33b2e"/><path d="M12 12L1.600 6A12 12 0 0 0 7 22.900z" fill="#2da94f"/><path d="M12 12L7 22.900A12 12 0 0 0 22.400 6z" fill="#fcc934"/><path d="M12 12L22.400 6A12 12 0 0 0 1.600 6z" fill="#e33b2e"/><circle cx="12" cy="12" r="5.500" fill="#fff"/><circle cx="12" cy="12" r="4.300" fill="#3b7de9"/><circle cx="19" cy="19" r="6" fill="#2a2a2a"/><circle cx="19" cy="20" r="3.600" fill="#f1d3b8"/><path d="M14 18c1-5 9-5 10 0l-2-1-3 1.500-3-1.500z" fill="#1a1a1a"/></svg>
  <div class="abs" style="left:680px;top:0;width:48px;height:40px;background:#474747"></div><div class="abs" style="left:724px;top:0;width:1px;height:40px;background:#383838"></div>
  <svg class="abs" style="left:693px;top:9px" width="22" height="23" viewBox="0 0 22 23"><polygon points="11,0.500 20.500,6 20.500,17 11,22.500 1.500,17 1.500,6" fill="#2a2a2a"/><polygon points="11,1.500 19.600,6.500 11,11.500 2.400,6.500" fill="#f2f2f2"/><polygon points="2.400,6.500 11,11.500 11,21.500 2.400,16.500" fill="#d8d8d8"/><polygon points="19.600,6.500 11,11.500 11,21.500 19.600,16.500" fill="#4a4a4a"/><path d="M11 11.500V4.500M11 11.500l6 3.500M11 11.500l-6 3.500" stroke="#1a1a1a" stroke-width="2.200"/><path d="M8 5.800l3 1.700 3-1.700M5.200 10.300v3.300M16.800 10.300v3.300" stroke="#1a1a1a" stroke-width="1.100" fill="none"/></svg>
  <svg class="abs" style="left:741px;top:8px" width="24" height="24" viewBox="0 0 24 24"><rect x="0" y="0" width="24" height="24" rx="2" fill="#0a1a5c"/><rect x="0.800" y="0.800" width="22.400" height="22.400" rx="1.500" fill="none" stroke="#31a8ff" stroke-width="1.200"/><text x="4" y="17" font-family="Liberation Sans, sans-serif" font-weight="bold" font-size="12" fill="#31a8ff">Ps</text></svg>
  <svg class="abs" style="left:790px;top:8px" width="24" height="24" viewBox="0 0 24 24"><rect x="0" y="0" width="24" height="24" rx="3" fill="#2f9df0"/><path d="M0 20l8-9 6 6 4-4 6 6v2a3 3 0 0 1-3 3H3a3 3 0 0 1-3-3z" fill="#bfe4ff"/><circle cx="17" cy="6.500" r="2.500" fill="#fff"/></svg>
  <svg class="abs" style="left:839px;top:8px" width="24" height="24" viewBox="0 0 24 24"><path d="M17 0.500l6 3v17l-6 3-11-9.500-3.500 3L0.500 16V8l2-1L6 10z" fill="#9b6bd8"/><path d="M17 6.500L10.500 12l6.500 5.500z" fill="#141414"/></svg>
  <div class="abs" style="left:488px;top:38px;width:38px;height:2px;background:#76b9ed"></div><div class="abs" style="left:636px;top:38px;width:40px;height:2px;background:#76b9ed"></div><div class="abs" style="left:680px;top:38px;width:48px;height:2px;background:#76b9ed"></div><div class="abs" style="left:733px;top:38px;width:42px;height:2px;background:#76b9ed"></div><div class="abs" style="left:785px;top:38px;width:38px;height:2px;background:#76b9ed"></div><div class="abs" style="left:833px;top:38px;width:40px;height:2px;background:#76b9ed"></div>
  <!-- tray -->
  <svg class="abs" style="left:1535px;top:10px" width="20" height="20" viewBox="0 0 20 20"><defs><linearGradient id="sun" x1="0" y1="0" x2="1" y2="1"><stop offset="0" stop-color="#ffc02a"/><stop offset="1" stop-color="#ee6a10"/></linearGradient></defs><circle cx="10" cy="10" r="10" fill="url(#sun)"/></svg>
  <span class="t" style="left:1565px;top:11px;font-size:14px;line-height:18px;letter-spacing:-.4px">13°C</span><span class="t" style="left:1603px;top:11px;font-size:14px;line-height:18px">Soleado</span>
  <svg class="abs" style="left:1676px;top:15px" width="14" height="9" viewBox="0 0 14 9"><path d="M1 8l6-6.500L13 8" stroke="#fff" stroke-width="1.300" fill="none"/></svg>
  <svg class="abs" style="left:1698px;top:12px" width="18" height="14" viewBox="0 0 18 14"><rect x="3.500" y="4" width="12" height="8" fill="none" stroke="#fff" stroke-width="1.200"/><rect x="5" y="5.500" width="7" height="5" fill="#fff"/><path d="M16 6.500h1.500v3H16zM2 0.500v3M5 0.500v3M0.500 3.500h6v2a3 3 0 0 1-6 0z" stroke="#fff" stroke-width="1" fill="#141414"/></svg>
  <svg class="abs" style="left:1725px;top:12px" width="16" height="15" viewBox="0 0 16 15"><path d="M1.500 14A12.500 12.500 0 0 1 14 1.500M5 14a9 9 0 0 1 9-9M8.500 14A5.500 5.500 0 0 1 14 8.500" stroke="#fff" stroke-width="1.100" fill="none" opacity="0.850"/><circle cx="13" cy="13" r="1.300" fill="#fff"/></svg>
  <svg class="abs" style="left:1746px;top:12px" width="18" height="15" viewBox="0 0 18 15"><path d="M1 5h2.500l3.500-3.500v12L3.500 10H1z" fill="none" stroke="#fff" stroke-width="1.100"/><path d="M9.500 5a3.500 3.500 0 0 1 0 5M11.800 3a6.500 6.500 0 0 1 0 9M14 1a9.500 9.500 0 0 1 0 13" stroke="#fff" stroke-width="1" fill="none"/></svg>
  <span class="t" style="left:1774px;top:11px;font-size:12px;line-height:18px;letter-spacing:-.6px">CAT</span>
  <span class="t" style="left:1822px;top:3px;font-size:12px;line-height:16px;letter-spacing:-.5px">11:00</span><span class="t" style="left:1808px;top:21px;font-size:12px;line-height:16px">20/2/2024</span>
  <svg class="abs" style="left:1879px;top:12px" width="17" height="17" viewBox="0 0 17 17"><path d="M0.500 0.500h16v12H10l-1.500 3-1.500-3H0.500z" fill="#fff"/><path d="M3 3.500h11M3 6.500h11M3 9.500h7" stroke="#141414" stroke-width="1"/></svg>
  <div class="abs" style="left:1915px;top:0;width:1px;height:40px;background:#4a4a4a"></div>
</div>
<!-- ===== annotation arrows ===== -->
<svg class="abs" style="left:0;top:0;pointer-events:none" width="1920" height="1080" viewBox="0 0 1920 1080">
  <g stroke="#fff" stroke-width="2.200" fill="#fff" stroke-linecap="round">
    <path d="M681 314L905 72" fill="none"/><polygon points="912,65 905.500,82.500 894,72.500" stroke="none"/>
    <path d="M1100 690L996 248" fill="none"/><polygon points="993,234.500 1001.800,252 992,254.300" stroke="none"/>
    <path d="M1457 573L1566 621" fill="none"/><polygon points="1578,626 1558.500,625 1563,614.500" stroke="none"/>
  </g>
</svg>

</body>
</html>
